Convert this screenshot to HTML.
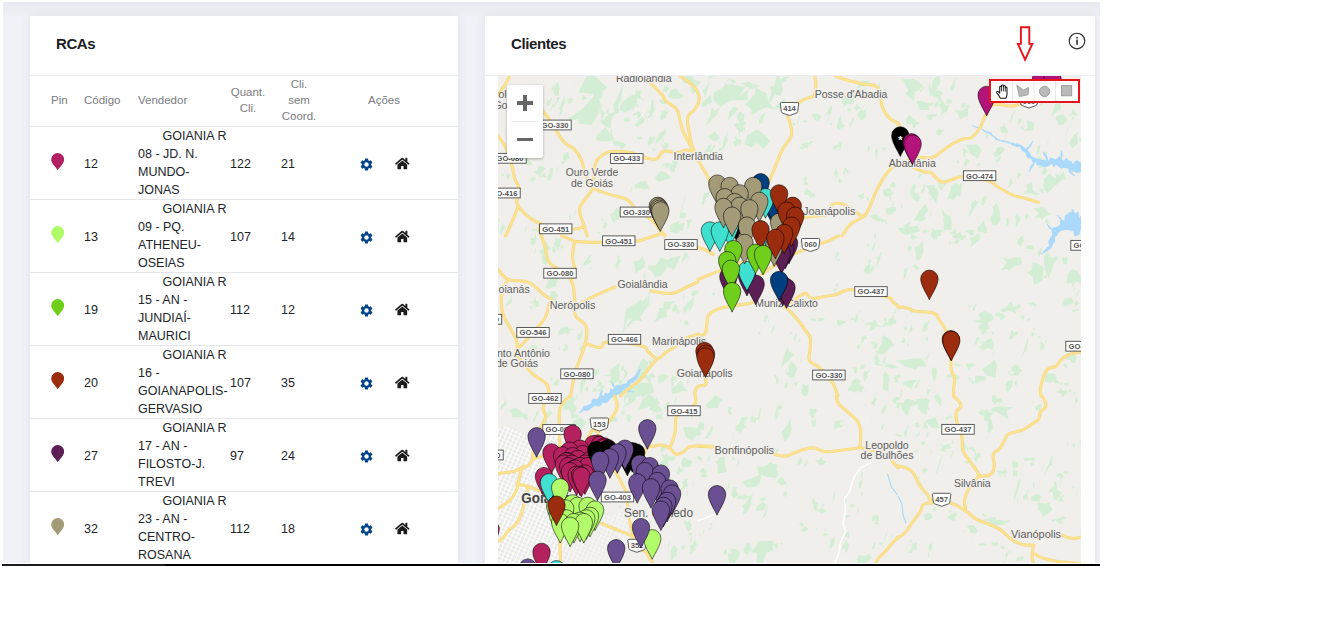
<!DOCTYPE html>
<html lang="pt-BR"><head><meta charset="utf-8"><title>RCAs - Clientes</title>
<style>
html,body{margin:0;padding:0;background:#fff;}
body{width:1340px;height:627px;overflow:hidden;position:relative;font-family:"Liberation Sans",Arial,sans-serif;color:#212529;}
#shot{position:absolute;left:3px;top:2px;width:1097px;height:563px;background:#f1f2f8;overflow:hidden;}
#topshade{position:absolute;left:0;top:0;width:100%;height:14px;background:linear-gradient(#e8e9ee,#eff0f6);}
#bline{position:absolute;left:165px;top:563.700px;width:935px;height:2.300px;background:#000;}
#bline2{position:absolute;left:2px;top:563.950px;width:163px;height:1.900px;background:#1c1c1c;}
#bwhite{position:absolute;left:0;top:563px;width:1340px;height:64px;background:#fff;}
.card{position:absolute;background:#fff;box-shadow:0 0 10px rgba(82,63,105,.09);}
#left{left:27px;top:14px;width:428px;height:600px;}
#right{left:482px;top:14px;width:610px;height:600px;}
.title{position:absolute;left:26px;top:18px;font-weight:bold;font-size:15px;line-height:20px;color:#1d1d1f;letter-spacing:-.4px;}
.hline{position:absolute;left:0;top:59px;width:100%;height:1px;background:#ebedf2;}
.thead{position:absolute;left:0;top:60px;width:100%;height:50px;border-bottom:1px solid #e4e6ea;}
.h{position:absolute;font-size:11.500px;line-height:16px;color:#7a7b80;white-space:nowrap;}
.h.ctr{text-align:center;}
.row{position:absolute;left:0;width:100%;height:72px;border-bottom:1px solid #e4e6ea;font-size:12.500px;line-height:18px;}
.row .c{position:absolute;top:27.500px;white-space:nowrap;}
.row .code{left:54px;}
.row .q{left:200px;}
.row .cs{left:251px;}
.row .vend{position:absolute;left:108px;top:0;white-space:nowrap;}
.row .ind{display:inline-block;width:24.500px;}
.tpin{position:absolute;left:20.700px;top:25.600px;width:13.400px;height:17.400px;}
.gear{position:absolute;left:329px;top:29.600px;width:15px;height:15px;}
.home{position:absolute;left:365px;top:29.800px;width:14.600px;height:13px;}
#arrow{position:absolute;left:530px;top:9px;}
#info{position:absolute;left:582px;top:14.800px;}
#map{position:absolute;left:13px;top:60px;width:583px;height:489px;overflow:hidden;background:#f0efeb;}
#mapsvg{position:absolute;left:0;top:0;}
#zoomctl{position:absolute;left:9px;top:9px;width:36px;height:73px;background:#fff;border-radius:2px;box-shadow:0 1px 3px rgba(0,0,0,.3);}
#zoomctl .zp{position:absolute;left:10px;top:16.200px;width:16px;height:3.600px;background:#666;}
#zoomctl .zp2{position:absolute;left:16.200px;top:10px;width:3.600px;height:16px;background:#666;}
#zoomctl .zd{position:absolute;left:5px;top:36px;width:26px;height:1px;background:#e6e6e6;}
#zoomctl .zm{position:absolute;left:10px;top:52.700px;width:16px;height:3.600px;background:#666;}
#draw{position:absolute;left:491px;top:3px;width:91px;height:24px;box-sizing:border-box;border:2px solid #e8141c;background:#fff;}
#rd path{vector-effect:non-scaling-stroke;}

</style></head>
<body>
<div id="shot">
<div id="topshade"></div>
<div class="card" id="left">
<div class="title">RCAs</div>
<div class="hline"></div>
<div class="thead">
<span class="h" style="left:21px;top:16px">Pin</span>
<span class="h" style="left:54px;top:16px">Código</span>
<span class="h" style="left:108px;top:16px">Vendedor</span>
<span class="h ctr" style="left:192px;width:52px;top:8px">Quant.<br>Cli.</span>
<span class="h ctr" style="left:243px;width:52px;top:0px">Cli.<br>sem<br>Coord.</span>
<span class="h ctr" style="left:328px;width:52px;top:16px">Ações</span>
</div>
<div class="row" style="top:111px">
<svg class="tpin" viewBox="-6.700 -17.400 13.400 17.400"><path d="M0,0C-1.500,-3 -6.500,-6.800 -6.500,-10.800A6.500,6.500 0 1 1 6.500,-10.800C6.500,-6.800 1.500,-3 0,0Z" fill="#b12060"/></svg>
<span class="c code">12</span><span class="vend"><span class="ind"></span>GOIANIA R<br>08 - JD. N.<br>MUNDO-<br>JONAS</span><span class="c q">122</span><span class="c cs">21</span><svg class="gear" viewBox="0 0 24 24"><path fill="#05468a" d="M19.14 12.94c.04-.3.06-.61.06-.94 0-.32-.02-.64-.07-.94l2.03-1.58a.49.49 0 0 0 .12-.61l-1.92-3.32a.488.488 0 0 0-.59-.22l-2.39.96c-.5-.38-1.03-.7-1.62-.94l-.36-2.54a.484.484 0 0 0-.48-.41h-3.84c-.24 0-.43.17-.47.41l-.36 2.54c-.59.24-1.13.57-1.62.94l-2.39-.96c-.22-.08-.47 0-.59.22L2.74 8.87c-.12.21-.08.47.12.61l2.03 1.58c-.05.3-.09.63-.09.94s.02.64.07.94l-2.03 1.58a.49.49 0 0 0-.12.61l1.92 3.32c.12.22.37.29.59.22l2.39-.96c.5.38 1.03.7 1.62.94l.36 2.54c.05.24.24.41.48.41h3.84c.24 0 .44-.17.47-.41l.36-2.54c.59-.24 1.13-.56 1.62-.94l2.39.96c.22.08.47 0 .59-.22l1.92-3.32c.12-.22.07-.47-.12-.61l-2.01-1.58zM12 15.6c-1.98 0-3.600-1.62-3.600-3.600s1.62-3.600 3.600-3.600 3.600 1.62 3.600 3.600-1.62 3.600-3.600 3.600z"/></svg><svg class="home" viewBox="0 0 576 512"><path fill="#1c1c1c" d="M280.37 148.26L96 300.11V464a16 16 0 0 0 16 16l112.060-.29a16 16 0 0 0 15.920-16V368a16 16 0 0 1 16-16h64a16 16 0 0 1 16 16v95.640a16 16 0 0 0 16 16.050L464 480a16 16 0 0 0 16-16V300L295.670 148.260a12.190 12.190 0 0 0-15.300 0zM571.600 251.470L488 182.560V44.050a12 12 0 0 0-12-12h-56a12 12 0 0 0-12 12v72.610L318.470 43a48 48 0 0 0-61 0L4.340 251.470a12 12 0 0 0-1.600 16.900l25.500 31A12 12 0 0 0 45.150 301l235.220-193.740a12.190 12.190 0 0 1 15.300 0L530.900 301a12 12 0 0 0 16.900-1.600l25.500-31a12 12 0 0 0-1.700-16.930z"/></svg>
</div>
<div class="row" style="top:184px">
<svg class="tpin" viewBox="-6.700 -17.400 13.400 17.400"><path d="M0,0C-1.500,-3 -6.500,-6.800 -6.500,-10.800A6.500,6.500 0 1 1 6.500,-10.800C6.500,-6.800 1.500,-3 0,0Z" fill="#b0fb6a"/></svg>
<span class="c code">13</span><span class="vend"><span class="ind"></span>GOIANIA R<br>09 - PQ.<br>ATHENEU-<br>OSEIAS</span><span class="c q">107</span><span class="c cs">14</span><svg class="gear" viewBox="0 0 24 24"><path fill="#05468a" d="M19.14 12.94c.04-.3.06-.61.06-.94 0-.32-.02-.64-.07-.94l2.03-1.58a.49.49 0 0 0 .12-.61l-1.92-3.32a.488.488 0 0 0-.59-.22l-2.39.96c-.5-.38-1.03-.7-1.62-.94l-.36-2.54a.484.484 0 0 0-.48-.41h-3.84c-.24 0-.43.17-.47.41l-.36 2.54c-.59.24-1.13.57-1.62.94l-2.39-.96c-.22-.08-.47 0-.59.22L2.74 8.87c-.12.21-.08.47.12.61l2.03 1.58c-.05.3-.09.63-.09.94s.02.64.07.94l-2.03 1.58a.49.49 0 0 0-.12.61l1.92 3.32c.12.22.37.29.59.22l2.39-.96c.5.38 1.03.7 1.62.94l.36 2.54c.05.24.24.41.48.41h3.84c.24 0 .44-.17.47-.41l.36-2.54c.59-.24 1.13-.56 1.62-.94l2.39.96c.22.08.47 0 .59-.22l1.92-3.32c.12-.22.07-.47-.12-.61l-2.01-1.58zM12 15.6c-1.98 0-3.600-1.62-3.600-3.600s1.62-3.600 3.600-3.600 3.600 1.62 3.600 3.600-1.62 3.600-3.600 3.600z"/></svg><svg class="home" viewBox="0 0 576 512"><path fill="#1c1c1c" d="M280.37 148.26L96 300.11V464a16 16 0 0 0 16 16l112.060-.29a16 16 0 0 0 15.920-16V368a16 16 0 0 1 16-16h64a16 16 0 0 1 16 16v95.640a16 16 0 0 0 16 16.050L464 480a16 16 0 0 0 16-16V300L295.670 148.260a12.190 12.190 0 0 0-15.300 0zM571.600 251.470L488 182.560V44.050a12 12 0 0 0-12-12h-56a12 12 0 0 0-12 12v72.610L318.470 43a48 48 0 0 0-61 0L4.340 251.470a12 12 0 0 0-1.600 16.900l25.500 31A12 12 0 0 0 45.150 301l235.220-193.740a12.190 12.190 0 0 1 15.300 0L530.900 301a12 12 0 0 0 16.900-1.600l25.500-31a12 12 0 0 0-1.700-16.930z"/></svg>
</div>
<div class="row" style="top:257px">
<svg class="tpin" viewBox="-6.700 -17.400 13.400 17.400"><path d="M0,0C-1.500,-3 -6.500,-6.800 -6.500,-10.800A6.500,6.500 0 1 1 6.500,-10.800C6.500,-6.800 1.500,-3 0,0Z" fill="#6fcf1a"/></svg>
<span class="c code">19</span><span class="vend"><span class="ind"></span>GOIANIA R<br>15 - AN -<br>JUNDIAÍ-<br>MAURICI</span><span class="c q">112</span><span class="c cs">12</span><svg class="gear" viewBox="0 0 24 24"><path fill="#05468a" d="M19.14 12.94c.04-.3.06-.61.06-.94 0-.32-.02-.64-.07-.94l2.03-1.58a.49.49 0 0 0 .12-.61l-1.92-3.32a.488.488 0 0 0-.59-.22l-2.39.96c-.5-.38-1.03-.7-1.62-.94l-.36-2.54a.484.484 0 0 0-.48-.41h-3.84c-.24 0-.43.17-.47.41l-.36 2.54c-.59.24-1.13.57-1.62.94l-2.39-.96c-.22-.08-.47 0-.59.22L2.74 8.87c-.12.21-.08.47.12.61l2.03 1.58c-.05.3-.09.63-.09.94s.02.64.07.94l-2.03 1.58a.49.49 0 0 0-.12.61l1.92 3.32c.12.22.37.29.59.22l2.39-.96c.5.38 1.03.7 1.62.94l.36 2.54c.05.24.24.41.48.41h3.84c.24 0 .44-.17.47-.41l.36-2.54c.59-.24 1.13-.56 1.62-.94l2.39.96c.22.08.47 0 .59-.22l1.92-3.32c.12-.22.07-.47-.12-.61l-2.01-1.58zM12 15.6c-1.98 0-3.600-1.62-3.600-3.600s1.62-3.600 3.600-3.600 3.600 1.62 3.600 3.600-1.62 3.600-3.600 3.600z"/></svg><svg class="home" viewBox="0 0 576 512"><path fill="#1c1c1c" d="M280.37 148.26L96 300.11V464a16 16 0 0 0 16 16l112.060-.29a16 16 0 0 0 15.920-16V368a16 16 0 0 1 16-16h64a16 16 0 0 1 16 16v95.640a16 16 0 0 0 16 16.050L464 480a16 16 0 0 0 16-16V300L295.670 148.260a12.190 12.190 0 0 0-15.300 0zM571.600 251.470L488 182.560V44.050a12 12 0 0 0-12-12h-56a12 12 0 0 0-12 12v72.610L318.470 43a48 48 0 0 0-61 0L4.340 251.470a12 12 0 0 0-1.600 16.900l25.500 31A12 12 0 0 0 45.150 301l235.220-193.740a12.190 12.190 0 0 1 15.300 0L530.900 301a12 12 0 0 0 16.900-1.600l25.500-31a12 12 0 0 0-1.700-16.930z"/></svg>
</div>
<div class="row" style="top:330px">
<svg class="tpin" viewBox="-6.700 -17.400 13.400 17.400"><path d="M0,0C-1.500,-3 -6.500,-6.800 -6.500,-10.800A6.500,6.500 0 1 1 6.500,-10.800C6.500,-6.800 1.500,-3 0,0Z" fill="#9c2c0e"/></svg>
<span class="c code">20</span><span class="vend"><span class="ind"></span>GOIANIA R<br>16 -<br>GOIANAPOLIS-<br>GERVASIO</span><span class="c q">107</span><span class="c cs">35</span><svg class="gear" viewBox="0 0 24 24"><path fill="#05468a" d="M19.14 12.94c.04-.3.06-.61.06-.94 0-.32-.02-.64-.07-.94l2.03-1.58a.49.49 0 0 0 .12-.61l-1.92-3.32a.488.488 0 0 0-.59-.22l-2.39.96c-.5-.38-1.03-.7-1.62-.94l-.36-2.54a.484.484 0 0 0-.48-.41h-3.84c-.24 0-.43.17-.47.41l-.36 2.54c-.59.24-1.13.57-1.62.94l-2.39-.96c-.22-.08-.47 0-.59.22L2.74 8.87c-.12.21-.08.47.12.61l2.03 1.58c-.05.3-.09.63-.09.94s.02.64.07.94l-2.03 1.58a.49.49 0 0 0-.12.61l1.92 3.32c.12.22.37.29.59.22l2.39-.96c.5.38 1.03.7 1.62.94l.36 2.54c.05.24.24.41.48.41h3.84c.24 0 .44-.17.47-.41l.36-2.54c.59-.24 1.13-.56 1.62-.94l2.39.96c.22.08.47 0 .59-.22l1.92-3.32c.12-.22.07-.47-.12-.61l-2.01-1.58zM12 15.6c-1.98 0-3.600-1.62-3.600-3.600s1.62-3.600 3.600-3.600 3.600 1.62 3.600 3.600-1.62 3.600-3.600 3.600z"/></svg><svg class="home" viewBox="0 0 576 512"><path fill="#1c1c1c" d="M280.37 148.26L96 300.11V464a16 16 0 0 0 16 16l112.060-.29a16 16 0 0 0 15.920-16V368a16 16 0 0 1 16-16h64a16 16 0 0 1 16 16v95.640a16 16 0 0 0 16 16.050L464 480a16 16 0 0 0 16-16V300L295.670 148.260a12.190 12.190 0 0 0-15.300 0zM571.600 251.470L488 182.560V44.050a12 12 0 0 0-12-12h-56a12 12 0 0 0-12 12v72.610L318.470 43a48 48 0 0 0-61 0L4.340 251.470a12 12 0 0 0-1.600 16.900l25.500 31A12 12 0 0 0 45.150 301l235.220-193.740a12.190 12.190 0 0 1 15.300 0L530.900 301a12 12 0 0 0 16.900-1.600l25.500-31a12 12 0 0 0-1.700-16.930z"/></svg>
</div>
<div class="row" style="top:403px">
<svg class="tpin" viewBox="-6.700 -17.400 13.400 17.400"><path d="M0,0C-1.500,-3 -6.500,-6.800 -6.500,-10.800A6.500,6.500 0 1 1 6.500,-10.800C6.500,-6.800 1.500,-3 0,0Z" fill="#5c1f55"/></svg>
<span class="c code">27</span><span class="vend"><span class="ind"></span>GOIANIA R<br>17 - AN -<br>FILOSTO-J.<br>TREVI</span><span class="c q">97</span><span class="c cs">24</span><svg class="gear" viewBox="0 0 24 24"><path fill="#05468a" d="M19.14 12.94c.04-.3.06-.61.06-.94 0-.32-.02-.64-.07-.94l2.03-1.58a.49.49 0 0 0 .12-.61l-1.92-3.32a.488.488 0 0 0-.59-.22l-2.39.96c-.5-.38-1.03-.7-1.62-.94l-.36-2.54a.484.484 0 0 0-.48-.41h-3.84c-.24 0-.43.17-.47.41l-.36 2.54c-.59.24-1.13.57-1.62.94l-2.39-.96c-.22-.08-.47 0-.59.22L2.74 8.87c-.12.21-.08.47.12.61l2.03 1.58c-.05.3-.09.63-.09.94s.02.64.07.94l-2.03 1.58a.49.49 0 0 0-.12.61l1.92 3.32c.12.22.37.29.59.22l2.39-.96c.5.38 1.03.7 1.62.94l.36 2.54c.05.24.24.41.48.41h3.84c.24 0 .44-.17.47-.41l.36-2.54c.59-.24 1.13-.56 1.62-.94l2.39.96c.22.08.47 0 .59-.22l1.92-3.32c.12-.22.07-.47-.12-.61l-2.01-1.58zM12 15.6c-1.98 0-3.600-1.62-3.600-3.600s1.62-3.600 3.600-3.600 3.600 1.62 3.600 3.600-1.62 3.600-3.600 3.600z"/></svg><svg class="home" viewBox="0 0 576 512"><path fill="#1c1c1c" d="M280.37 148.26L96 300.11V464a16 16 0 0 0 16 16l112.060-.29a16 16 0 0 0 15.920-16V368a16 16 0 0 1 16-16h64a16 16 0 0 1 16 16v95.640a16 16 0 0 0 16 16.050L464 480a16 16 0 0 0 16-16V300L295.670 148.260a12.190 12.190 0 0 0-15.300 0zM571.600 251.470L488 182.560V44.050a12 12 0 0 0-12-12h-56a12 12 0 0 0-12 12v72.610L318.470 43a48 48 0 0 0-61 0L4.340 251.470a12 12 0 0 0-1.600 16.900l25.500 31A12 12 0 0 0 45.150 301l235.220-193.740a12.190 12.190 0 0 1 15.300 0L530.900 301a12 12 0 0 0 16.900-1.600l25.500-31a12 12 0 0 0-1.700-16.930z"/></svg>
</div>
<div class="row" style="top:476px">
<svg class="tpin" viewBox="-6.700 -17.400 13.400 17.400"><path d="M0,0C-1.500,-3 -6.500,-6.800 -6.500,-10.800A6.500,6.500 0 1 1 6.500,-10.800C6.500,-6.800 1.500,-3 0,0Z" fill="#a39a78"/></svg>
<span class="c code">32</span><span class="vend"><span class="ind"></span>GOIANIA R<br>23 - AN -<br>CENTRO-<br>ROSANA</span><span class="c q">112</span><span class="c cs">18</span><svg class="gear" viewBox="0 0 24 24"><path fill="#05468a" d="M19.14 12.94c.04-.3.06-.61.06-.94 0-.32-.02-.64-.07-.94l2.03-1.58a.49.49 0 0 0 .12-.61l-1.92-3.32a.488.488 0 0 0-.59-.22l-2.39.96c-.5-.38-1.03-.7-1.62-.94l-.36-2.54a.484.484 0 0 0-.48-.41h-3.84c-.24 0-.43.17-.47.41l-.36 2.54c-.59.24-1.13.57-1.62.94l-2.39-.96c-.22-.08-.47 0-.59.22L2.74 8.87c-.12.21-.08.47.12.61l2.03 1.58c-.05.3-.09.63-.09.94s.02.64.07.94l-2.03 1.58a.49.49 0 0 0-.12.61l1.92 3.32c.12.22.37.29.59.22l2.39-.96c.5.38 1.03.7 1.62.94l.36 2.54c.05.24.24.41.48.41h3.84c.24 0 .44-.17.47-.41l.36-2.54c.59-.24 1.13-.56 1.62-.94l2.39.96c.22.08.47 0 .59-.22l1.92-3.32c.12-.22.07-.47-.12-.61l-2.01-1.58zM12 15.6c-1.98 0-3.600-1.62-3.600-3.600s1.62-3.600 3.600-3.600 3.600 1.62 3.600 3.600-1.62 3.600-3.600 3.600z"/></svg><svg class="home" viewBox="0 0 576 512"><path fill="#1c1c1c" d="M280.37 148.26L96 300.11V464a16 16 0 0 0 16 16l112.060-.29a16 16 0 0 0 15.920-16V368a16 16 0 0 1 16-16h64a16 16 0 0 1 16 16v95.640a16 16 0 0 0 16 16.050L464 480a16 16 0 0 0 16-16V300L295.670 148.260a12.190 12.190 0 0 0-15.300 0zM571.600 251.470L488 182.560V44.050a12 12 0 0 0-12-12h-56a12 12 0 0 0-12 12v72.610L318.470 43a48 48 0 0 0-61 0L4.340 251.470a12 12 0 0 0-1.600 16.900l25.500 31A12 12 0 0 0 45.150 301l235.220-193.740a12.190 12.190 0 0 1 15.300 0L530.900 301a12 12 0 0 0 16.900-1.600l25.500-31a12 12 0 0 0-1.700-16.930z"/></svg>
</div>
</div>
<div class="card" id="right">
<div class="title">Clientes</div>
<svg id="arrow" viewBox="0 0 22 40" width="22" height="40"><path d="M5.900,2.200H14.300V18.900H17.300L10.100,34.600L2.900,18.900H5.900Z" fill="#fff" stroke="#e8141c" stroke-width="1.900" stroke-linejoin="miter"/></svg>
<svg id="info" viewBox="0 0 20 20" width="20" height="20"><circle cx="10" cy="10" r="7.800" fill="#fff" stroke="#2a2a2a" stroke-width="1.150"/><rect x="9.300" y="8.600" width="1.500" height="5.200" fill="#222"/><rect x="9.300" y="5.900" width="1.500" height="1.600" fill="#222"/></svg>
<div class="hline"></div>
<div id="map">
<svg id="mapsvg" width="583" height="489" viewBox="498 76 583 489">
<defs>
<path id="pin" d="M0,0C-2.4,-5.6 -8.7,-14.2 -8.7,-21A8.7,8.7 0 1 1 8.7,-21C8.7,-14.2 2.4,-5.6 0,0Z" stroke="#000" stroke-opacity=".62" stroke-width=".9"/>
<g id="rd">
<!-- tile 0,0 -->
<g transform="translate(498,76) scale(.2551)">
<path d="M45.0,0.0C41.7,6.6 38.1,16.4 30.0,30.0C21.9,43.6 14.6,52.1 8.0,62.0C1.4,71.9 1.8,72.1 0.0,75.0"/>
<path d="M175.0,135.0C180.5,142.7 186.8,150.2 200.0,170.0C213.2,189.8 221.4,204.8 235.0,225.0C248.6,245.2 247.7,248.1 262.0,262.0C276.3,275.9 286.1,274.1 300.0,288.0C313.9,301.9 315.1,302.6 325.0,325.0C334.9,347.4 334.7,364.7 345.0,390.0C355.3,415.3 366.1,429.0 372.0,440.0"/>
<path d="M372.0,440.0C373.3,426.8 375.1,403.1 378.0,380.0C380.9,356.9 375.8,351.9 385.0,335.0C394.2,318.1 403.5,311.8 420.0,303.0C436.5,294.2 438.0,295.7 460.0,295.0C482.0,294.3 495.8,294.9 520.0,300.0C544.2,305.1 548.0,312.5 570.0,318.0C592.0,323.5 602.4,330.1 620.0,325.0C637.6,319.9 632.4,300.5 650.0,295.0C667.6,289.5 680.2,301.1 700.0,300.0C719.8,298.9 724.6,290.0 740.0,290.0C755.4,290.0 760.3,295.2 770.0,300.0C779.7,304.8 780.9,309.4 784.0,312.0"/>
<path d="M372.0,440.0C384.8,444.8 401.8,452.8 430.0,462.0C458.2,471.2 478.0,471.4 500.0,482.0C522.0,492.6 516.8,497.2 530.0,510.0C543.2,522.8 544.6,528.6 560.0,540.0C575.4,551.4 582.4,546.6 600.0,562.0C617.6,577.4 627.9,595.7 640.0,610.0C652.1,624.3 651.7,623.3 655.0,627.0"/>
<path d="M372.0,440.0C366.1,448.8 356.4,462.4 345.0,480.0C333.6,497.6 322.2,498.0 320.0,520.0C317.8,542.0 328.4,556.5 335.0,580.0C341.6,603.5 346.7,616.7 350.0,627.0"/>
<path d="M600.0,30.0C608.8,38.8 626.8,54.6 640.0,70.0C653.2,85.4 646.8,86.8 660.0,100.0C673.2,113.2 687.9,112.4 700.0,130.0C712.1,147.6 709.5,161.3 715.0,180.0C720.5,198.7 718.4,198.5 725.0,215.0C731.6,231.5 735.1,236.3 745.0,255.0C754.9,273.7 764.5,290.1 770.0,300.0"/>
<path d="M713.0,0.0C723.3,7.5 743.3,15.5 760.0,34.0C776.7,52.5 786.4,63.1 789.0,84.0C791.6,104.9 781.9,111.6 772.0,129.0C762.1,146.4 748.8,141.9 744.0,163.0C739.2,184.1 746.5,201.5 750.0,225.0C753.5,248.5 755.2,253.5 760.0,270.0C764.8,286.5 769.4,293.4 772.0,300.0"/>
<path d="M0.0,235.0C6.6,244.9 19.0,259.1 30.0,280.0C41.0,300.9 42.3,303.6 50.0,330.0C57.7,356.4 58.0,375.8 65.0,400.0C72.0,424.2 79.8,422.4 82.0,440.0C84.2,457.6 75.4,464.6 75.0,480.0C74.6,495.4 67.9,492.4 80.0,510.0C92.1,527.6 103.6,542.4 130.0,560.0C156.4,577.6 171.4,581.2 200.0,590.0C228.6,598.8 238.0,597.8 260.0,600.0C282.0,602.2 282.4,602.2 300.0,600.0C317.6,597.8 331.2,592.2 340.0,590.0"/>
<path d="M80.0,510.0C75.6,521.0 71.0,534.3 60.0,560.0C49.0,585.7 36.6,612.3 30.0,627.0"/>
</g>
<!-- tile 1,0 -->
<g transform="translate(698,76) scale(.2551)">
<path d="M50.0,420.0C45.6,411.2 41.0,399.8 30.0,380.0C19.0,360.2 6.6,341.0 0.0,330.0"/>
<path d="M280.0,410.0C285.5,396.8 294.0,376.4 305.0,350.0C316.0,323.6 316.8,315.3 330.0,290.0C343.2,264.7 358.0,257.0 365.0,235.0C372.0,213.0 364.9,206.5 362.0,190.0C359.1,173.5 354.2,166.6 352.0,160.0M395.0,105.0C400.5,101.7 406.8,96.6 420.0,90.0C433.2,83.4 445.8,86.0 455.0,75.0C464.2,64.0 461.3,56.5 462.0,40.0C462.7,23.5 458.9,8.8 458.0,0.0"/>
<path d="M540.0,0.0C548.8,3.3 558.0,8.4 580.0,15.0C602.0,21.6 613.6,24.1 640.0,30.0C666.4,35.9 683.5,31.0 700.0,42.0C716.5,53.0 710.2,62.8 715.0,80.0C719.8,97.2 715.4,102.4 722.0,120.0C728.6,137.6 731.4,145.7 745.0,160.0C758.6,174.3 775.4,179.5 784.0,185.0"/>
<path d="M784.0,340.0C775.4,347.7 760.2,357.4 745.0,375.0C729.8,392.6 726.0,401.3 715.0,420.0C704.0,438.7 704.9,438.0 695.0,460.0C685.1,482.0 679.9,500.2 670.0,520.0C660.1,539.8 665.4,536.8 650.0,550.0C634.6,563.2 618.7,563.1 600.0,580.0C581.3,596.9 572.7,616.7 565.0,627.0"/>
<path d="M410.0,555.0C423.2,553.5 449.1,551.3 470.0,548.0C490.9,544.7 492.9,549.5 505.0,540.0C517.1,530.5 512.9,513.8 525.0,505.0C537.1,496.2 545.7,497.8 560.0,500.0C574.3,502.2 572.4,504.4 590.0,515.0C607.6,525.6 629.0,540.7 640.0,548.0"/>
</g>
<!-- tile 2,0 -->
<g transform="translate(898,76) scale(.2551)">
<path d="M0.0,185.0C4.4,194.9 11.2,204.7 20.0,230.0C28.8,255.3 31.2,273.6 40.0,300.0C48.8,326.4 55.6,339.0 60.0,350.0"/>
<path d="M55.0,315.0C71.5,316.1 105.8,323.3 130.0,320.0C154.2,316.7 149.6,309.9 165.0,300.0C180.4,290.1 182.4,286.0 200.0,275.0C217.6,264.0 225.2,257.7 245.0,250.0C264.8,242.3 273.5,249.9 290.0,240.0C306.5,230.1 310.1,220.4 320.0,205.0C329.9,189.6 329.5,182.1 335.0,170.0C340.5,157.9 336.2,162.8 345.0,150.0C353.8,137.2 354.1,119.0 375.0,112.0C395.9,105.0 416.9,118.4 440.0,118.0C463.1,117.6 471.2,111.8 480.0,110.0"/>
<path d="M40.0,350.0C53.2,355.5 80.2,368.4 100.0,375.0C119.8,381.6 114.6,371.2 130.0,380.0C145.4,388.8 151.3,409.5 170.0,415.0C188.7,420.5 196.3,409.4 215.0,405.0C233.7,400.6 225.3,393.9 255.0,395.0C284.7,396.1 318.1,400.1 350.0,410.0C381.9,419.9 378.0,427.5 400.0,440.0C422.0,452.5 428.0,458.2 450.0,467.0C472.0,475.8 478.0,473.8 500.0,480.0C522.0,486.2 539.0,491.7 550.0,495.0"/>
<path d="M45.0,330.0 0.0,345.0"/>
</g>
<!-- tile 0,1 -->
<g transform="translate(498,236) scale(.2551)">
<path d="M160.0,-30.0C165.5,-13.5 176.6,16.4 185.0,45.0C193.4,73.6 187.0,81.3 198.0,100.0C209.0,118.7 215.9,114.6 235.0,130.0C254.1,145.4 270.7,145.8 285.0,170.0C299.3,194.2 296.0,209.2 300.0,240.0C304.0,270.8 293.1,284.7 303.0,310.0C312.9,335.3 336.4,330.8 345.0,355.0C353.6,379.2 347.1,392.5 342.0,420.0C336.9,447.5 331.2,452.5 322.0,480.0C312.8,507.5 308.1,512.7 300.0,545.0C291.9,577.3 288.3,609.0 285.0,627.0"/>
<path d="M250.0,0.0C256.6,2.6 266.8,7.2 280.0,12.0C293.2,16.8 281.4,19.1 310.0,22.0C338.6,24.9 359.4,25.4 410.0,25.0C460.6,24.6 502.6,23.3 540.0,20.0C577.4,16.7 558.0,16.6 580.0,10.0C602.0,3.4 626.8,-5.6 640.0,-10.0"/>
<path d="M300.0,22.0C298.2,34.8 292.0,56.2 292.0,80.0C292.0,103.8 300.4,110.2 300.0,130.0C299.6,149.8 292.2,161.2 290.0,170.0"/>
<path d="M0.0,130.0C8.8,138.8 13.6,158.6 40.0,170.0C66.4,181.4 89.2,168.8 120.0,182.0C150.8,195.2 160.2,215.0 180.0,230.0C199.8,245.0 203.4,245.6 210.0,250.0"/>
<path d="M40.0,170.0C34.5,181.0 19.8,191.4 15.0,220.0C10.2,248.6 10.3,268.1 18.0,300.0C25.7,331.9 37.5,338.6 50.0,365.0C62.5,391.4 71.7,396.9 75.0,420.0C78.3,443.1 67.2,459.0 65.0,470.0"/>
<path d="M200.0,265.0C196.7,277.1 198.2,295.8 185.0,320.0C171.8,344.2 159.8,351.9 140.0,375.0C120.2,398.1 110.0,407.4 95.0,425.0C80.0,442.6 70.9,438.5 72.0,455.0C73.1,471.5 85.0,480.2 100.0,500.0C115.0,519.8 120.2,527.4 140.0,545.0C159.8,562.6 176.8,562.0 190.0,580.0C203.2,598.0 197.8,616.7 200.0,627.0"/>
<path d="M305.0,275.0C314.9,269.5 329.1,261.0 350.0,250.0C370.9,239.0 375.8,236.0 400.0,225.0C424.2,214.0 446.8,205.5 460.0,200.0M600.0,215.0C617.6,217.2 649.2,228.3 680.0,225.0C710.8,221.7 717.1,209.9 740.0,200.0C762.9,190.1 774.3,184.4 784.0,180.0"/>
<path d="M342.0,420.0C354.8,423.7 380.2,438.1 400.0,437.0C419.8,435.9 396.8,416.5 432.0,415.0C467.2,413.5 525.2,421.2 560.0,430.0C594.8,438.8 575.7,444.0 590.0,455.0C604.3,466.0 609.6,480.0 625.0,480.0C640.4,480.0 643.5,466.0 660.0,455.0C676.5,444.0 682.4,442.1 700.0,430.0C717.6,417.9 721.5,409.9 740.0,400.0C758.5,390.1 774.3,388.3 784.0,385.0"/>
<path d="M625.0,480.0C617.3,488.8 605.4,501.3 590.0,520.0C574.6,538.7 572.6,547.4 555.0,565.0C537.4,582.6 526.5,586.4 510.0,600.0C493.5,613.6 486.6,621.1 480.0,627.0"/>
</g>
<!-- tile 1,1 -->
<g transform="translate(698,236) scale(.2551)">
<path d="M250.0,150.0C261.0,142.3 280.2,128.2 300.0,115.0C319.8,101.8 318.0,102.1 340.0,90.0C362.0,77.9 369.6,73.2 400.0,60.0C430.4,46.8 453.8,38.8 478.0,30.0C502.2,21.2 494.2,26.6 510.0,20.0C525.8,13.4 541.2,4.4 550.0,0.0"/>
<path d="M345.0,280.0C352.7,273.4 363.5,262.1 380.0,250.0C396.5,237.9 405.7,226.1 420.0,225.0C434.3,223.9 429.6,242.1 445.0,245.0C460.4,247.9 469.1,241.3 490.0,238.0C510.9,234.7 521.3,235.1 540.0,230.0C558.7,224.9 558.5,219.0 575.0,215.0C591.5,211.0 578.3,206.5 615.0,212.0C651.7,217.5 710.1,230.5 742.0,240.0C773.9,249.5 750.8,247.3 760.0,255.0C769.2,262.7 778.7,270.6 784.0,275.0"/>
<path d="M345.0,280.0C351.6,286.6 362.9,296.8 375.0,310.0C387.1,323.2 389.0,325.7 400.0,340.0C411.0,354.3 416.2,361.8 425.0,375.0C433.8,388.2 436.7,385.7 440.0,400.0C443.3,414.3 441.1,422.4 440.0,440.0C438.9,457.6 432.8,466.8 435.0,480.0C437.2,493.2 441.2,492.3 450.0,500.0C458.8,507.7 459.6,500.7 475.0,515.0C490.4,529.3 506.8,548.5 520.0,565.0C533.2,581.5 528.8,576.4 535.0,590.0C541.2,603.6 545.1,618.9 548.0,627.0"/>
<path d="M0.0,170.0C11.0,165.6 28.0,158.8 50.0,150.0C72.0,141.2 71.4,141.0 100.0,130.0C128.6,119.0 162.4,106.6 180.0,100.0M0.0,45.0C6.6,47.2 16.8,49.1 30.0,55.0C43.2,60.9 53.4,68.3 60.0,72.0"/>
<path d="M0.0,390.0C6.2,388.2 20.3,393.0 28.0,382.0C35.7,371.0 31.9,355.8 35.0,340.0C38.1,324.2 34.3,321.0 42.0,310.0C49.7,299.0 57.2,296.6 70.0,290.0C82.8,283.4 82.4,284.0 100.0,280.0C117.6,276.0 128.0,275.3 150.0,272.0C172.0,268.7 182.4,267.6 200.0,265.0C217.6,262.4 198.1,256.7 230.0,260.0C261.9,263.3 319.7,275.6 345.0,280.0"/>
</g>
<!-- tile 2,1 -->
<g transform="translate(898,236) scale(.2551)">
<path d="M0.0,278.0C8.8,279.1 24.6,279.3 40.0,283.0C55.4,286.7 48.0,290.6 70.0,295.0C92.0,299.4 119.1,294.2 140.0,303.0C160.9,311.8 155.1,321.4 165.0,335.0C174.9,348.6 175.5,344.1 185.0,365.0C194.5,385.9 202.9,395.9 208.0,430.0C213.1,464.1 204.9,492.5 208.0,520.0C211.1,547.5 219.8,537.4 222.0,555.0C224.2,572.6 218.9,584.2 218.0,600.0C217.1,615.8 218.0,621.1 218.0,627.0"/>
<path d="M716.0,455.0C710.3,456.1 702.3,456.7 690.0,460.0C677.7,463.3 672.1,463.4 660.0,470.0C647.9,476.6 643.8,481.2 635.0,490.0C626.2,498.8 629.9,503.4 620.0,510.0C610.1,516.6 599.9,513.4 590.0,520.0C580.1,526.6 580.5,529.0 575.0,540.0C569.5,551.0 568.7,556.8 565.0,570.0C561.3,583.2 559.1,587.5 558.0,600.0C556.9,612.5 559.6,621.1 560.0,627.0"/>
</g>
<!-- tile 1,2 -->
<g transform="translate(698,396) scale(.271)">
<path d="M0.0,185.0 55.0,188.0M280.0,215.0C288.8,216.5 304.6,222.7 320.0,222.0C335.4,221.3 332.4,217.9 350.0,212.0C367.6,206.1 382.4,199.4 400.0,195.0C417.6,190.6 414.6,189.8 430.0,192.0C445.4,194.2 448.0,203.2 470.0,205.0C492.0,206.8 503.6,202.9 530.0,200.0C556.4,197.1 576.8,193.8 590.0,192.0"/>
<path d="M510.0,0.0C512.2,6.6 509.0,15.7 520.0,30.0C531.0,44.3 544.6,50.7 560.0,65.0C575.4,79.3 581.2,80.7 590.0,95.0C598.8,109.3 598.2,109.1 600.0,130.0C601.8,150.9 598.4,176.8 598.0,190.0"/>
<path d="M598.0,190.0C607.2,192.2 617.6,194.5 640.0,200.0C662.4,205.5 682.4,205.1 700.0,215.0C717.6,224.9 711.6,234.0 720.0,245.0C728.4,256.0 734.0,260.6 738.0,265.0"/>
<path d="M738.0,520.0C732.9,525.5 725.6,532.9 715.0,545.0C704.4,557.1 701.0,562.9 690.0,575.0C679.0,587.1 673.8,588.6 665.0,600.0C656.2,611.4 653.3,621.1 650.0,627.0"/>
</g>
<!-- tile 2,2 -->
<g transform="translate(898,396) scale(.271)">
<path d="M205.0,0.0C209.4,4.4 219.1,11.2 225.0,20.0C230.9,28.8 234.2,31.2 232.0,40.0C229.8,48.8 218.1,46.8 215.0,60.0C211.9,73.2 213.6,81.3 218.0,100.0C222.4,118.7 230.2,123.0 235.0,145.0C239.8,167.0 233.4,179.1 240.0,200.0C246.6,220.9 254.0,223.5 265.0,240.0C276.0,256.5 282.3,262.9 290.0,275.0C297.7,287.1 297.8,290.6 300.0,295.0"/>
<path d="M300.0,295.0C308.8,293.9 327.9,297.7 340.0,290.0C352.1,282.3 352.4,276.5 355.0,260.0C357.6,243.5 347.6,229.3 352.0,215.0C356.4,200.7 365.5,207.1 375.0,195.0C384.5,182.9 387.3,172.1 395.0,160.0C402.7,147.9 395.7,147.7 410.0,140.0C424.3,132.3 440.2,133.8 460.0,125.0C479.8,116.2 486.8,108.8 500.0,100.0C513.2,91.2 514.5,93.8 520.0,85.0C525.5,76.2 519.5,69.9 525.0,60.0C530.5,50.1 541.7,49.9 545.0,40.0C548.3,30.1 543.3,23.8 540.0,15.0C536.7,6.2 532.2,3.3 530.0,0.0"/>
<path d="M300.0,295.0C294.5,300.5 284.9,306.8 275.0,320.0C265.1,333.2 261.6,339.6 255.0,355.0C248.4,370.4 246.1,376.8 245.0,390.0C243.9,403.2 248.9,409.5 250.0,415.0"/>
<path d="M0.0,258.0C8.8,260.6 26.8,263.0 40.0,270.0C53.2,277.0 51.2,276.8 60.0,290.0C68.8,303.2 69.0,313.5 80.0,330.0C91.0,346.5 100.1,352.9 110.0,365.0C119.9,377.1 106.3,378.4 125.0,385.0C143.7,391.6 167.5,386.2 195.0,395.0C222.5,403.8 229.1,411.8 250.0,425.0C270.9,438.2 270.2,444.0 290.0,455.0C309.8,466.0 320.2,466.2 340.0,475.0C359.8,483.8 362.4,482.9 380.0,495.0C397.6,507.1 402.4,518.3 420.0,530.0C437.6,541.7 442.4,543.6 460.0,548.0C477.6,552.4 491.2,549.6 500.0,550.0"/>
<path d="M125.0,395.0C118.4,396.1 104.9,392.3 95.0,400.0C85.1,407.7 89.9,414.6 80.0,430.0C70.1,445.4 61.0,454.6 50.0,470.0C39.0,485.4 41.0,487.9 30.0,500.0C19.0,512.1 6.6,519.5 0.0,525.0"/>
<path d="M500.0,550.0C498.9,558.8 495.0,575.0 495.0,590.0C495.0,605.0 498.9,611.8 500.0,618.0"/>
<path d="M600.0,510.0C608.8,513.3 623.5,522.8 640.0,525.0C656.5,527.2 667.3,521.1 675.0,520.0"/>
<path d="M500.0,580.0C508.8,584.4 518.0,593.0 540.0,600.0C562.0,607.0 570.3,608.0 600.0,612.0C629.7,616.0 658.5,616.7 675.0,618.0"/>
</g>
<!-- tile 0,2 target coords -->
<g>
<path d="M570.7,396.0C569.3,397.1 566.7,398.2 564.3,401.0C561.9,403.8 561.0,404.3 559.9,408.8C558.8,413.3 559.2,413.1 559.2,421.5C559.2,429.9 559.6,437.2 559.9,447.0C560.2,456.8 559.8,458.7 560.5,466.0C561.2,473.3 561.8,472.5 563.0,480.0C564.2,487.5 566.2,491.2 566.0,500.0C565.8,508.8 563.3,510.1 562.0,520.0C560.7,529.9 560.2,534.9 560.0,545.0C559.8,555.1 560.8,561.4 561.0,566.0"/>
<path d="M544.0,403.7C543.8,405.1 542.9,407.2 543.3,410.0C543.7,412.8 546.0,413.3 545.8,416.4C545.6,419.5 544.3,420.6 542.6,424.0C540.9,427.4 539.9,427.4 538.0,432.0C536.1,436.6 535.2,438.9 534.0,445.0C532.8,451.1 532.8,456.5 532.4,459.8"/>
<path d="M498.0,473.8C499.7,473.5 502.0,473.1 505.7,472.5C509.4,471.9 511.0,472.4 514.6,471.3C518.2,470.2 519.1,468.7 522.2,467.4C525.3,466.1 526.4,467.2 528.6,465.5C530.8,463.8 530.7,461.5 532.4,459.8C534.1,458.1 533.9,458.7 536.3,457.9C538.7,457.1 539.8,457.3 543.3,456.0C546.8,454.7 548.3,454.0 552.0,452.0C555.7,450.0 558.2,448.1 559.9,447.0"/>
<path d="M516.6,484.0C519.2,484.5 522.6,484.6 528.3,486.4C534.0,488.2 536.2,489.7 542.3,492.3C548.4,494.9 553.0,496.7 556.0,498.0"/>
<path d="M498.0,508.6C500.6,506.8 505.6,504.5 509.7,500.4C513.8,496.3 514.8,493.6 516.6,490.0C518.4,486.4 516.6,489.0 517.8,484.0C519.0,479.0 521.2,471.1 522.2,467.4"/>
<path d="M498.0,541.0C499.1,540.3 500.8,540.2 503.0,538.0C505.2,535.8 505.1,534.1 508.0,531.0C510.9,527.9 512.9,528.2 516.0,524.0C519.1,519.8 519.3,520.3 522.0,512.0C524.7,503.7 526.9,492.0 528.3,486.4"/>
<path d="M614.5,396.0C615.1,398.4 617.8,402.0 617.2,406.8C616.6,411.6 614.2,413.8 611.8,417.7C609.4,421.6 609.4,421.6 606.4,424.5C603.4,427.4 601.1,429.7 598.0,431.0C594.9,432.3 594.5,429.1 592.4,430.4C590.3,431.7 590.0,434.6 588.6,436.8C587.2,439.0 587.0,437.3 586.0,440.6C585.0,443.9 583.6,446.4 584.0,452.0C584.4,457.6 587.1,462.9 588.0,466.0"/>
<path d="M598.0,431.0C598.7,434.1 598.8,438.6 601.0,445.0C603.2,451.4 604.5,453.5 608.0,460.0C611.5,466.5 613.8,469.0 617.0,474.6C620.2,480.2 620.6,481.2 622.7,485.4C624.8,489.6 625.5,488.2 626.7,493.6C627.9,499.0 627.1,502.7 628.0,510.0C628.9,517.3 629.0,519.1 631.0,527.0C633.0,534.9 633.8,540.5 637.0,546.0C640.2,551.5 642.9,549.0 645.7,551.8C648.5,554.6 647.7,555.5 649.8,558.6C651.9,561.7 654.0,564.4 655.2,566.0"/>
<path d="M601.0,523.4C604.0,524.6 608.6,526.4 614.5,528.8C620.4,531.2 623.8,532.4 628.0,534.2C632.2,536.0 632.3,536.4 633.5,537.0"/>
<path d="M640.0,470.0C641.3,465.5 642.8,454.8 646.0,449.5C649.2,444.2 651.4,447.0 654.7,446.0C658.0,445.0 657.8,444.7 660.9,445.1C664.0,445.5 665.5,445.8 668.8,447.7C672.1,449.6 672.7,452.9 675.8,453.9C678.9,454.9 679.7,453.7 682.8,452.1C685.9,450.5 685.9,448.1 689.8,446.8C693.7,445.5 695.4,446.1 700.4,446.0C705.4,445.9 709.9,446.2 712.6,446.3"/>
<path d="M705.6,379.0C705.6,380.2 707.1,383.0 705.6,384.6C704.1,386.2 700.9,384.8 698.6,386.3C696.3,387.8 695.8,387.7 695.0,391.6C694.2,395.5 697.2,400.0 695.0,404.0C692.8,408.0 689.0,407.3 685.0,410.0C681.0,412.7 678.8,412.6 676.7,416.1C674.6,419.6 675.9,421.9 675.5,425.8C675.1,429.7 675.8,429.7 674.9,433.7C674.0,437.7 672.7,441.1 671.4,444.2C670.1,447.3 669.4,446.9 668.8,447.7"/>
</g>
</g>

</defs>
<rect x="498" y="76" width="583" height="489" fill="#f0efeb"/>
<path fill="#d3eed4" d="M578.6,91.4 583.3,95.4 590.3,99.9 602.1,98.4 602.7,91.3 607.4,87.4 601.7,82.6 589.3,70.8 582.6,84.4ZM620.4,105.5 619.9,110.4 625.2,112.8 630.6,109.4 635.5,104.2 637.0,97.7 635.3,94.3 630.8,95.4 621.5,102.8ZM564.7,121.2 579.0,119.1 578.2,123.4 592.1,125.1 601.9,106.5 596.3,94.0 583.6,107.8 580.2,110.2ZM603.8,114.7 603.2,119.3 603.8,120.5 605.5,116.9 608.0,115.2 609.6,107.9 607.9,108.9 606.4,112.3 605.0,113.5ZM611.3,120.3 610.7,135.0 603.9,124.5 602.9,124.3 600.1,121.4 601.6,118.5 599.5,106.7 605.2,113.8 611.3,113.3 616.5,110.9ZM580.9,115.8 579.1,117.8 580.2,118.9 582.4,118.0 582.7,115.8 584.1,114.9 585.5,112.6 584.5,112.6 584.3,112.1 583.9,110.8 582.8,113.1 581.2,114.6ZM596.0,137.3 596.3,140.0 601.2,141.5 616.0,140.8 612.9,136.9 611.8,128.8 605.8,126.6 596.7,135.4ZM626.5,144.6 622.3,149.4 618.2,145.2 615.0,145.7 610.6,139.3 617.4,141.2 618.6,141.7 620.8,141.5ZM618.7,103.7 619.0,112.3 615.4,114.1 614.0,108.8 613.4,103.9 617.5,97.6 618.2,95.6 622.6,84.1 621.7,98.2ZM643.5,102.1 641.4,104.6 639.5,105.4 639.1,105.7 635.7,103.6 637.4,102.1 636.9,98.5 639.1,98.6 640.5,99.0 641.5,99.5 643.9,98.5ZM629.8,86.0 628.0,92.2 629.5,87.1 629.1,88.5 628.9,89.2 629.5,87.4 630.6,83.8 631.7,79.9 631.3,81.1 632.9,75.9 632.4,77.3 630.5,83.8ZM574.0,88.1 573.7,89.2 572.4,93.7 573.4,90.1 573.7,89.0 574.3,86.4 575.2,83.4 577.0,77.6 575.6,82.6 576.0,81.5 575.8,82.2 575.9,82.1ZM553.6,89.5 552.6,89.2 551.6,92.4 551.4,89.6 552.5,87.4 552.9,86.0 554.3,83.1 554.4,84.8ZM594.7,98.1 589.2,98.5 586.8,98.7 581.9,100.4 582.4,96.3 581.4,92.4 586.9,93.2 593.2,94.1ZM558.7,109.4 559.7,109.5 560.1,110.6 559.3,116.9 562.4,112.1 562.6,107.0 566.6,100.7 564.1,102.4 565.7,94.2 563.4,97.9 560.8,105.0ZM572.8,100.7 571.1,102.9 570.4,103.7 569.8,102.6 568.4,104.4 567.4,100.9 567.7,100.8 567.7,98.1 569.7,97.7 570.9,98.1 573.2,98.8ZM629.4,100.7 632.6,104.8 632.3,111.1 636.5,104.4 637.7,107.3 643.5,102.8 641.5,96.5 639.6,96.3 642.8,90.1 637.2,91.0 636.5,87.0 634.8,96.9ZM640.8,113.2 640.8,118.4 637.4,118.2 637.1,114.6 632.2,115.8 633.5,113.2 636.1,112.7 637.0,112.3 637.7,111.7 638.2,111.2 640.8,112.7ZM643.9,115.6 645.6,116.5 646.6,116.2 647.6,118.1 649.7,113.6 648.9,113.1 650.0,109.4 647.9,111.4 646.0,113.3ZM652.6,114.3 652.4,118.2 651.2,115.5 649.9,118.1 645.5,117.8 645.5,113.5 648.0,110.2 650.5,109.8 651.4,99.0 653.6,101.6 653.6,107.7 655.2,109.0ZM661.4,113.6 659.7,117.3 660.8,120.0 661.7,120.2 666.2,117.2 665.9,115.1 670.2,111.3 665.7,111.8 668.8,107.8 665.0,110.5 663.3,111.4 661.3,111.5ZM634.3,125.2 636.9,126.4 637.8,127.7 641.2,124.1 643.7,122.7 644.8,118.5 642.9,117.6 640.3,116.0 638.2,121.2ZM623.4,119.2 625.0,121.9 627.7,121.5 631.5,120.3 628.6,119.0 629.5,116.3 625.1,118.2ZM657.9,137.1 655.3,139.6 656.0,143.8 660.8,139.9 664.9,134.6 666.5,131.6 665.4,129.0 661.9,132.6 661.5,131.6 659.2,134.0ZM669.1,145.8 671.0,146.6 668.1,146.5 667.3,148.1 663.9,149.0 661.3,145.9 665.3,145.1 664.4,144.4 664.4,142.1 667.2,142.7 669.0,143.2 668.9,144.1ZM662.6,143.8 662.2,144.8 661.5,146.7 662.1,143.1 663.1,138.6 663.5,139.4 663.5,141.2ZM685.1,96.0 679.1,99.1 675.6,98.8 672.8,98.7 667.6,96.0 670.9,90.0 676.0,88.3 679.9,93.3ZM663.1,89.7 663.0,92.6 664.3,91.3 665.2,92.4 667.4,91.0 670.0,86.7 667.1,86.8 666.7,86.9 666.0,85.3 663.6,86.4ZM665.4,103.1 665.7,104.0 662.7,104.1 662.5,104.3 660.9,103.6 661.0,102.8 658.8,101.0 659.6,100.1 661.1,99.6 664.1,99.3 664.1,100.4 665.8,101.7ZM701.1,82.3 694.9,87.4 690.0,84.1 682.4,82.4 683.2,78.9 691.4,73.5 693.2,79.3ZM689.3,89.8 688.9,91.1 688.8,91.9 689.2,91.3 689.8,89.7 689.9,88.9 690.2,88.1 690.0,88.2 690.3,87.1 689.8,88.2ZM676.6,165.9 675.3,167.5 674.3,172.3 672.1,172.2 669.6,168.1 670.4,164.7 673.0,164.6 671.9,159.9 674.0,160.5 676.9,159.3 677.4,164.1ZM676.8,156.2 678.4,157.4 678.7,157.6 679.9,156.9 680.4,157.8 683.0,156.8 683.1,155.2 681.5,155.2 681.3,153.5 681.3,152.4 677.5,152.9 677.6,155.3ZM647.6,141.9 647.9,144.7 649.1,145.9 653.5,141.6 655.5,136.0 652.3,137.6 651.7,137.9 650.2,135.6ZM642.2,138.9 640.7,139.0 639.5,139.1 638.5,140.7 638.4,138.5 636.3,137.8 637.8,135.6 639.3,137.1 639.8,137.3 641.4,136.5ZM652.3,149.7 652.7,150.5 654.6,150.7 655.7,149.6 657.7,148.4 654.4,148.6 651.9,148.4ZM654.7,177.9 658.2,182.1 665.8,179.5 672.4,177.9 667.7,174.5 664.0,171.8 660.7,170.8ZM661.7,165.7 664.9,165.4 665.5,168.0 667.4,167.4 670.4,166.6 671.8,164.6 668.4,163.0 667.1,163.0 666.9,162.5 663.2,164.2ZM681.4,212.0 680.1,214.6 679.3,216.6 677.4,222.2 681.1,209.9 683.2,202.0 685.9,194.0 685.5,196.6 684.4,200.5ZM689.4,225.4 687.9,230.0 687.2,227.1 687.3,224.4 686.7,220.0 689.0,220.0 692.0,219.2ZM682.8,230.6 679.2,231.1 678.3,233.4 676.0,232.9 669.6,232.0 670.7,231.3 669.3,225.9 674.8,222.4 679.2,220.8 678.5,224.3 684.6,222.5ZM679.5,217.1 681.3,217.9 682.4,219.1 685.2,216.5 686.7,214.1 682.9,212.0 680.0,213.8ZM649.5,188.5 643.7,189.4 641.7,188.8 639.8,187.9 634.9,188.6 634.7,184.5 638.8,183.1 639.8,181.5 645.6,181.1 647.8,185.0ZM629.6,191.1 629.5,192.8 629.9,192.3 630.0,193.3 631.0,191.5 631.8,189.2 632.4,187.2 632.1,187.0 632.1,186.6 631.3,187.2 630.9,189.0ZM618.6,215.7 618.4,220.6 615.3,218.9 614.1,223.4 611.7,219.4 610.3,214.0 611.5,213.5 614.1,212.1 616.7,207.3 617.6,208.2 620.5,210.9ZM603.2,211.0 603.0,211.5 602.6,212.6 602.7,212.1 603.4,209.9 604.1,207.5 603.7,208.9 603.8,208.8ZM534.0,171.8 536.8,174.0 538.7,174.4 540.0,179.8 541.2,172.6 545.9,168.7 542.3,166.1 537.6,166.9 537.2,170.6ZM530.2,178.6 530.0,182.3 532.8,180.5 532.4,183.5 534.2,180.7 534.2,180.0 535.8,179.4 534.5,177.9 535.7,175.6 533.1,177.7 531.4,176.7 532.4,178.4ZM552.5,176.1 551.5,178.4 549.8,180.7 547.5,180.5 547.4,176.3 549.8,173.3 550.2,167.8 550.7,167.5 553.3,168.8 552.6,172.9ZM556.6,170.3 555.7,172.3 555.9,172.8 556.5,172.1 556.6,172.8 557.3,170.5 557.6,169.3 558.7,167.0 558.6,165.8 557.4,168.6 557.3,169.0 557.0,167.4ZM545.9,176.0 544.4,178.0 543.6,177.2 541.4,177.0 541.9,174.2 543.9,173.6 545.1,173.1ZM532.5,164.5 529.9,165.1 528.3,165.7 527.2,165.8 526.3,163.9 527.6,162.1 525.7,160.2 527.8,157.0 529.4,161.7 531.8,161.9ZM522.4,161.4 522.2,161.7 521.9,161.7 522.1,160.7 522.1,160.2 522.0,159.7 522.3,159.5 522.5,159.2 523.0,156.9 523.0,158.2 522.7,159.6ZM532.2,158.6 532.5,158.7 533.0,158.5 533.4,158.2 533.9,156.6 533.8,155.7 532.9,156.0ZM570.3,158.6 567.7,159.3 564.1,161.3 562.8,160.2 563.2,155.6 568.2,151.4 568.6,156.1ZM560.4,162.4 562.2,164.0 563.3,163.5 565.0,163.5 565.3,160.8 564.5,160.3 562.3,162.1ZM509.9,177.0 508.2,179.2 506.8,181.3 507.2,177.9 506.3,176.4 507.0,172.5 507.8,173.1 509.0,174.7 510.7,173.8ZM504.3,175.1 504.1,176.1 501.7,176.1 501.4,174.8 501.1,174.0 502.1,173.4 502.9,174.1ZM516.2,175.6 515.4,175.7 515.2,176.0 514.7,176.5 514.9,175.6 514.8,175.2 514.9,174.9 514.9,174.3 515.4,174.5 516.1,174.2 516.2,175.3ZM525.1,230.4 524.6,232.6 525.0,231.9 524.9,233.4 526.6,228.8 527.3,226.6 528.2,224.3 526.7,227.1 527.2,225.1 525.5,228.7ZM538.9,230.6 537.2,232.1 534.7,230.8 532.7,231.3 532.2,228.6 534.0,228.9 535.6,229.3 535.9,229.5ZM500.2,228.5 500.2,234.9 500.6,234.3 502.7,230.7 503.3,230.8 504.2,229.0 504.8,226.3 504.2,225.4 503.8,225.7 502.6,223.2ZM499.3,222.5 499.2,223.4 498.6,223.4 498.7,222.3 498.5,222.3 498.4,221.5 498.3,220.7 499.1,218.5 499.3,219.2 499.7,218.2 500.3,217.9 499.8,220.3ZM574.1,214.5 573.5,216.3 573.7,216.2 573.0,219.6 574.3,215.7 575.5,212.5 576.3,209.4 575.4,211.3 575.1,211.1 574.7,212.2ZM581.7,211.0 581.1,211.9 580.7,212.0 579.0,212.1 578.9,211.6 578.3,210.8 579.3,210.1 578.8,208.2 580.8,208.1 580.7,209.9ZM571.3,217.5 570.4,219.2 570.0,218.4 568.9,220.1 569.0,217.7 569.6,216.8 569.0,216.1 570.0,214.5 570.4,215.6 570.8,214.9 570.9,216.6ZM602.3,228.5 604.0,227.5 603.0,232.0 604.7,228.1 605.3,228.6 606.2,227.1 606.9,224.8 607.1,224.0 607.0,222.2 604.5,223.1 603.8,224.3ZM604.1,220.6 602.7,220.6 602.1,221.5 601.6,220.3 600.4,218.5 602.1,218.8 602.2,218.4 602.7,218.3 603.0,218.9ZM600.2,233.5 599.3,234.3 598.6,234.0 597.9,234.0 596.6,232.0 598.4,231.6 600.0,232.9ZM559.6,88.5 558.4,95.8 554.6,96.1 553.1,91.2 555.2,86.1 557.4,80.9 558.9,85.5ZM556.7,101.1 554.5,104.4 555.8,104.9 556.7,103.1 557.4,102.3 558.9,102.0 558.5,101.2 560.0,97.4 559.5,97.2 557.8,96.9 556.4,97.9 556.1,97.9ZM545.7,102.8 546.8,105.2 547.3,106.0 548.7,106.2 551.2,101.4 552.1,98.5 551.0,97.4 549.3,99.8 548.4,99.9ZM550.9,108.9 550.2,110.2 550.7,111.9 551.3,110.3 551.7,109.4 552.2,109.2 552.3,108.3 552.1,107.8 552.0,107.5 551.2,107.4 551.0,108.5ZM552.1,106.2 551.9,106.5 552.1,107.8 553.0,107.0 554.4,107.2 554.4,106.4 554.9,105.6 554.0,103.5 553.1,103.9 552.0,104.5 551.9,104.9ZM747.6,91.1 747.7,100.0 730.3,100.2 720.5,107.3 713.4,99.2 713.4,92.5 723.5,87.3 728.6,78.5 733.9,85.3 750.0,87.5ZM701.0,104.2 702.1,107.5 704.7,106.7 707.1,104.6 712.0,102.8 711.2,95.3 709.2,95.6 703.4,101.7ZM733.7,110.2 733.4,111.2 732.4,114.3 733.9,110.6 733.7,111.7 734.4,111.1 735.1,108.0 735.1,107.7 735.1,106.9 735.3,105.4 734.8,106.7 734.0,108.6ZM710.6,115.1 704.8,126.0 710.5,121.5 714.0,117.4 717.1,115.1 719.1,107.8 715.0,110.7 713.9,109.8 711.6,107.8ZM687.1,117.8 686.0,121.5 686.8,118.7 687.0,118.1 688.0,114.7 688.2,113.9 687.5,116.3ZM720.1,137.7 717.2,140.6 714.2,141.4 707.2,136.3 710.6,134.9 714.6,131.1 717.1,134.5ZM745.7,86.2 738.8,97.0 747.9,89.3 754.8,88.3 760.1,85.5 751.1,83.7 749.8,81.6 741.6,83.2ZM723.8,82.9 726.8,84.7 728.1,83.6 728.9,85.6 732.1,82.9 735.4,83.1 735.0,79.9 732.0,79.6 731.5,79.7 729.5,78.0 727.5,81.4ZM776.0,110.3 765.8,106.9 762.6,109.1 751.7,115.0 751.3,109.4 744.9,104.4 755.1,93.7 755.2,87.4 766.8,93.6 768.4,101.9ZM759.1,120.2 759.0,122.2 759.4,124.6 762.5,122.7 763.4,118.1 766.3,111.4 762.1,115.0 760.7,115.6ZM774.8,107.5 775.5,110.0 781.6,107.1 788.1,107.5 784.4,104.0 784.8,100.8 784.3,97.8 780.1,102.2ZM743.4,125.6 744.2,132.3 740.4,131.5 739.6,137.5 738.5,130.9 733.3,123.8 739.5,123.0 736.6,116.7 739.7,111.5 744.6,114.8 743.5,120.5 746.6,123.5ZM728.9,114.4 728.7,115.0 727.3,121.6 732.1,115.8 734.3,114.0 737.7,108.9 736.0,106.9 732.9,107.2 729.5,111.7ZM723.2,142.1 723.1,144.4 720.9,152.7 725.1,145.9 728.4,139.0 727.4,138.0 727.1,136.9 728.3,130.5 724.4,138.0ZM742.5,130.8 743.2,131.3 743.3,133.6 745.0,129.5 745.0,127.8 745.4,124.7 743.4,128.9ZM709.8,151.9 709.7,153.7 711.2,154.6 713.1,150.0 715.0,146.9 715.9,144.5 713.3,146.0 711.8,148.8ZM702.6,91.6 703.8,93.2 704.2,94.0 705.3,97.4 706.7,92.8 707.0,91.2 708.4,87.0 709.0,81.7 705.9,88.1 703.3,89.7ZM708.8,76.7 707.5,79.2 710.0,77.9 711.8,78.3 714.0,74.4 711.3,73.8 708.0,73.5ZM697.0,89.0 697.6,92.4 694.8,92.1 693.4,94.6 690.7,90.0 691.2,87.6 694.6,85.4 697.5,84.4 696.3,87.8ZM770.4,89.6 771.8,90.4 768.2,103.1 770.0,103.1 775.2,94.2 780.3,96.0 783.3,88.7 780.9,81.2 781.3,79.1 777.0,76.2 774.2,85.7 769.8,86.3ZM773.1,74.3 776.2,76.0 777.0,78.6 780.7,75.7 780.8,73.5 778.5,71.1 774.4,70.9ZM744.3,144.3 751.4,147.2 757.1,142.8 763.4,149.5 770.2,140.8 763.0,133.4 757.0,129.6 746.9,135.6ZM741.4,141.3 740.7,143.1 739.8,145.9 738.1,143.1 734.8,147.6 733.0,142.2 735.5,140.2 734.5,136.1 738.7,139.3 739.7,139.2 741.5,139.4 742.1,140.2ZM774.6,82.5 775.8,84.2 781.7,82.7 782.7,82.4 787.9,81.1 785.0,80.3 789.4,76.7 784.4,76.5 781.7,78.8 777.3,80.8ZM771.1,84.1 770.6,85.3 770.8,83.8 770.9,83.0 771.6,80.4 771.6,81.0 771.3,82.8ZM702.7,198.5 701.5,203.9 702.5,205.2 702.6,206.3 706.1,197.4 708.3,197.7 709.3,193.4 709.4,190.0 706.5,193.0 705.5,192.6 703.8,194.5ZM704.3,183.9 703.7,185.8 704.0,185.5 704.0,185.7 705.0,182.3 705.9,179.7 705.2,181.3 704.7,182.6ZM704.4,153.1 706.4,152.8 707.6,151.9 709.3,151.7 710.3,150.7 710.8,147.1 711.8,143.8 708.0,146.0 707.3,147.8ZM723.8,150.7 721.5,150.8 721.8,151.8 720.3,150.5 719.4,150.9 718.7,149.0 719.2,149.0 719.5,147.9 721.7,147.3 722.1,147.9 723.8,149.7ZM824.5,116.9 829.2,112.8 826.9,122.1 832.5,109.3 832.1,107.3 831.6,105.7 830.5,106.2ZM843.5,103.4 843.3,108.6 846.3,104.5 847.9,101.0 848.3,98.8 848.0,97.9 846.6,98.9ZM842.7,98.9 840.9,102.9 847.9,104.1 853.6,103.4 854.3,100.8 854.2,98.5 854.7,90.5 847.2,95.1 835.2,95.6ZM863.2,94.0 862.0,97.2 863.4,95.5 864.7,93.2 866.0,88.3 865.8,87.5 864.6,90.2ZM861.4,107.9 858.3,109.3 856.2,111.0 854.2,107.6 856.1,106.3 856.8,103.7 858.8,106.5ZM857.5,115.1 858.5,117.0 859.9,118.6 860.1,121.0 865.4,117.9 866.2,115.6 865.6,112.7 867.6,107.8 862.8,111.0 861.4,109.1 858.7,111.4ZM846.9,110.2 845.8,111.2 848.3,110.8 848.8,112.7 849.5,111.0 851.0,111.1 851.4,108.0 849.6,109.2 849.0,106.8 847.4,108.1 847.9,109.5ZM850.0,123.9 849.4,125.9 850.3,126.4 851.7,123.4 853.9,120.0 853.5,118.1 852.3,118.8 851.1,121.9ZM845.4,126.5 841.0,128.4 837.8,129.9 836.8,127.2 838.0,120.8 840.8,115.4 841.8,122.8ZM832.1,124.9 831.3,125.3 831.0,125.5 830.9,124.9 830.6,124.9 829.6,123.7 830.2,122.9 830.8,122.3 831.5,123.1 832.1,122.4 832.0,123.6ZM832.4,120.5 832.1,121.5 832.4,120.8 832.0,122.4 832.7,120.4 833.2,118.9 833.3,118.3 833.5,117.3 832.9,119.0 832.8,119.2ZM821.1,117.6 820.2,118.9 819.1,119.9 817.3,120.4 815.7,121.0 814.2,117.9 811.4,115.3 814.0,113.8 817.5,113.9 818.6,114.7 820.0,114.6 820.7,116.7ZM829.2,118.2 828.8,118.6 828.0,121.2 827.5,120.9 828.1,118.8 827.9,118.0 828.4,117.1 828.7,116.7 828.9,116.0 829.3,115.4 829.5,116.1 829.4,117.7ZM861.0,84.3 858.5,85.6 855.7,89.3 864.0,85.7 865.7,85.9 867.6,84.4 875.5,83.4 868.0,82.2 868.4,80.7 862.8,80.8 860.1,81.7 859.4,82.7ZM879.6,87.1 879.5,87.7 878.9,86.5 878.6,86.7 878.0,86.8 878.1,85.6 878.4,84.4 878.7,84.2 879.3,83.1 880.0,83.6 880.2,85.9ZM866.1,91.8 865.3,94.5 861.3,92.2 859.7,93.8 856.9,91.5 857.0,91.3 858.0,89.8 860.6,89.8 863.5,89.4 863.3,91.3ZM886.6,97.1 884.9,103.0 885.8,99.6 886.4,97.0 888.1,91.6 887.5,94.0 888.2,92.0ZM886.3,90.5 885.0,89.9 883.8,92.0 883.3,90.0 884.7,86.8 885.0,88.0 885.7,88.0ZM881.8,93.4 881.2,95.4 879.5,96.3 878.7,95.1 879.0,93.6 879.5,92.0 879.5,89.9 880.5,91.6 881.1,92.4ZM841.5,146.3 840.7,148.8 838.0,151.1 838.8,147.6 836.5,145.1 838.9,144.3 839.4,142.0 839.9,142.7 842.3,140.1 842.0,142.7ZM833.2,148.6 833.4,149.5 834.3,149.6 835.2,149.7 836.8,149.7 835.9,148.6 838.0,146.6 836.2,145.1 835.2,145.6 832.4,147.7ZM877.4,153.8 877.1,156.8 875.8,159.8 875.6,154.5 875.9,153.1 874.3,154.1 875.6,149.8 876.8,147.0 876.9,150.7 878.5,147.9 877.4,152.5ZM868.9,149.8 868.9,151.5 868.2,152.3 867.9,150.4 867.5,148.4 867.5,147.4 868.8,145.7 869.7,146.5 869.6,148.4ZM886.2,148.1 885.0,148.8 885.4,150.8 884.1,149.9 882.0,151.5 883.0,149.0 882.4,148.2 880.1,146.5 883.3,147.5 884.3,147.4 885.2,146.9 886.9,147.5ZM801.4,144.7 804.6,147.8 807.8,148.2 807.8,145.1 811.8,143.2 806.8,142.6 804.1,142.8ZM812.4,142.4 811.3,143.0 810.1,143.2 809.3,142.3 809.8,141.5 810.8,141.6 812.2,140.7ZM804.0,147.7 803.8,148.6 802.3,149.3 800.9,149.0 800.1,148.8 799.0,148.0 800.4,147.0 799.7,146.3 801.3,146.5 801.5,145.8 802.4,146.9 804.0,146.5ZM838.1,174.1 836.5,178.9 835.8,176.4 835.2,174.4 833.7,177.1 834.2,174.5 834.2,172.3 835.0,171.7 835.8,165.8 836.6,169.3 837.0,171.5 837.3,172.3ZM843.7,171.7 841.7,173.7 843.6,173.2 843.8,174.7 844.8,174.0 845.3,171.8 845.7,171.3 846.8,169.7 846.9,168.3 844.7,168.0 843.8,169.5 844.2,170.8ZM842.2,180.8 841.1,182.8 840.4,182.1 839.7,183.1 838.9,182.9 838.7,181.7 837.8,180.5 838.5,178.8 840.6,178.6 840.5,180.5 841.2,180.8ZM850.8,174.9 850.7,175.5 850.8,175.2 850.6,175.9 851.5,172.9 852.2,170.6 851.8,171.6 851.3,173.3ZM848.3,171.7 848.2,174.4 846.9,172.7 846.1,172.2 846.4,170.7 847.3,170.1 849.4,170.3ZM805.9,180.2 805.3,183.3 804.6,180.2 802.9,179.2 804.7,177.4 805.2,175.9 807.7,178.4ZM807.1,184.2 808.7,184.6 807.6,185.5 805.1,184.9 802.9,185.0 804.7,184.1 803.3,183.0 804.3,182.6 805.7,181.9 807.4,182.4 808.5,182.9ZM815.0,196.8 811.7,196.5 811.2,199.2 809.5,195.4 803.9,194.1 804.7,190.9 806.7,188.9 812.1,192.9 815.2,194.4ZM819.9,198.8 819.9,198.8 819.8,198.7 819.7,198.5 819.9,197.1 820.4,196.2 820.4,196.5 820.2,197.7ZM894.9,192.6 891.0,195.5 890.7,201.9 888.8,196.0 885.2,196.4 883.2,194.2 883.0,190.5 886.4,188.8 889.2,187.5 891.4,190.3 890.7,192.5ZM892.9,206.5 892.4,205.5 891.6,207.7 892.2,205.1 891.4,205.8 892.8,201.4 893.4,200.0 893.5,201.0 893.6,203.3ZM895.7,184.4 894.3,188.6 893.2,187.0 891.0,187.8 889.4,185.1 891.9,183.8 893.1,182.3 894.1,183.1ZM886.2,220.6 882.4,222.2 876.1,220.3 874.0,219.6 869.2,216.3 875.6,214.1 879.4,217.3ZM865.1,217.2 865.0,217.7 864.5,219.5 865.0,218.2 865.3,217.0 865.6,216.3 865.9,215.3 866.2,214.3 865.8,215.4 865.9,215.0 865.3,216.7ZM886.9,223.0 886.1,223.9 885.9,224.1 885.8,223.3 885.8,222.9 884.9,223.4 885.5,221.4 885.9,221.7 886.1,221.3 886.8,220.5 886.6,221.4 886.9,222.0ZM885.1,208.5 887.3,214.5 892.0,214.2 893.3,211.4 896.4,210.9 894.9,206.3 892.9,207.2 891.6,206.5 890.1,207.4ZM902.5,206.5 901.7,208.9 901.4,207.7 900.8,208.5 901.3,206.6 900.7,206.0 901.9,203.3 902.1,204.1 902.8,202.7 902.1,205.5ZM799.0,120.3 798.2,123.1 797.4,123.9 798.0,120.1 798.1,117.1 799.9,115.1 799.2,118.6ZM795.6,124.4 794.6,125.3 793.8,125.7 792.3,123.9 792.1,123.6 793.0,122.7 793.9,122.5 794.8,123.2ZM808.0,121.3 805.8,122.3 804.4,122.5 802.5,121.2 804.2,120.2 805.0,119.5 805.8,120.0ZM863.4,195.4 864.0,198.0 860.8,199.8 860.7,197.5 858.2,197.9 857.8,194.9 860.9,194.2 861.4,194.3 864.6,192.5ZM865.3,198.3 865.1,199.1 864.8,199.6 865.2,198.1 865.5,197.0 865.8,196.6 865.5,197.8ZM868.9,198.6 868.9,200.9 868.0,199.9 867.0,199.9 866.4,201.2 866.7,199.0 866.1,199.1 866.6,198.2 867.1,197.7 867.5,196.5 868.3,197.0 867.9,198.5ZM922.0,88.7 915.0,92.1 913.9,101.1 905.6,94.1 908.2,89.7 902.4,79.2 913.8,79.0 922.6,84.8ZM931.5,86.4 931.7,89.8 930.7,87.1 929.9,89.0 930.4,86.1 929.1,85.7 930.1,83.6 930.8,81.4 932.1,81.2 932.5,81.9 932.2,84.7ZM928.8,89.2 929.5,91.0 929.3,97.4 933.6,94.0 938.7,85.2 940.9,81.2 938.6,75.1 933.5,79.5 928.6,84.2ZM919.5,89.1 919.7,91.3 919.7,91.7 920.5,92.5 923.0,89.2 922.9,88.6 925.6,87.9 923.4,87.4 923.5,86.5 922.6,87.2 922.2,86.5 921.3,87.8ZM931.3,78.8 930.7,80.2 930.4,80.6 930.8,79.3 931.0,78.2 931.2,77.5 931.7,76.0 931.7,75.8 931.8,75.8 931.8,75.9 932.1,75.6ZM950.3,89.1 951.4,91.1 952.1,90.7 954.8,86.9 953.9,85.1 956.9,74.9 953.9,80.9ZM945.9,101.4 946.4,102.3 947.1,104.4 951.9,102.5 951.3,99.7 948.3,99.1 946.6,99.5ZM928.0,107.1 930.2,109.7 926.5,110.1 920.5,110.0 919.3,109.2 918.3,105.7 916.6,101.2 921.1,100.3 926.0,103.3 934.9,103.1ZM934.8,106.2 935.1,107.1 933.4,109.8 936.2,107.0 936.7,107.2 938.6,105.2 940.9,103.2 940.6,101.6 937.9,101.6 935.8,102.6 934.3,104.3ZM927.1,117.1 927.9,119.2 931.0,120.5 932.9,116.9 936.4,115.9 936.9,113.2 934.0,114.6 932.7,114.3 927.8,114.8ZM947.4,110.3 946.7,112.3 943.8,112.4 941.2,117.1 941.9,110.2 938.3,103.8 940.4,97.5 944.9,103.8 945.1,105.1 949.3,105.6ZM925.9,106.0 925.6,106.7 925.1,108.6 925.2,108.1 925.5,106.8 926.3,104.2 926.4,104.1 927.1,101.6 927.3,101.0 926.8,102.7 926.8,102.8 926.2,104.6ZM932.5,96.3 936.6,97.3 939.3,100.4 940.8,95.7 943.3,92.6 939.0,90.2 934.5,91.6ZM920.9,123.2 916.2,124.4 914.3,129.7 913.3,128.3 911.9,123.5 905.6,124.0 906.0,118.8 909.3,114.7 914.0,119.0 915.6,119.6 915.5,121.1ZM906.0,129.1 904.3,130.0 903.8,129.7 903.2,129.9 900.7,130.2 901.9,129.0 899.0,127.8 901.6,126.7 902.9,126.3 904.3,127.3 904.4,127.8ZM968.1,116.0 964.1,117.1 959.9,120.1 958.5,114.7 954.2,109.7 961.9,110.7 967.6,107.1ZM969.5,106.6 968.5,108.2 967.2,106.9 965.9,107.6 965.1,107.4 965.4,106.0 966.1,104.5 966.9,104.9 968.4,104.5 968.5,106.0ZM964.2,105.9 964.9,107.6 963.3,107.8 961.9,108.5 961.7,106.6 961.1,105.4 961.4,102.5 962.3,104.2 965.2,102.7 965.3,104.8ZM937.5,132.7 936.5,133.8 937.3,134.9 938.0,135.0 940.1,135.6 943.4,130.5 942.3,129.6 940.2,130.0 939.7,127.4 937.7,130.2 934.5,131.0ZM937.7,125.7 937.4,126.5 937.2,127.0 937.7,125.2 937.7,125.2 938.2,123.1 938.3,123.1 938.6,122.1 938.1,123.9 938.0,124.5ZM981.8,150.0 979.2,155.2 977.8,158.7 970.5,154.1 965.9,144.8 974.7,144.7 976.7,144.0 979.6,147.3ZM968.0,151.9 965.2,152.8 964.9,158.1 963.0,153.9 963.3,151.9 963.3,150.4 962.2,147.7 965.1,149.2 965.8,149.1 966.2,149.8ZM963.6,163.6 964.6,166.1 965.8,166.7 967.1,163.9 968.4,163.0 969.7,160.2 967.7,160.6 967.1,158.7 965.6,159.9ZM959.4,162.3 959.3,162.5 958.0,163.5 957.7,163.0 956.4,162.2 957.2,161.4 955.9,159.9 957.3,160.7 957.5,159.5 958.0,158.8 958.7,160.5 958.5,160.7ZM977.1,164.6 976.4,166.4 977.6,165.2 978.6,165.4 979.8,165.0 980.5,163.3 978.2,163.8 976.2,163.3ZM1004.4,140.9 1003.9,142.8 1004.2,140.8 1004.1,140.6 1004.6,138.4 1004.8,138.0 1005.5,135.2 1006.0,133.6 1007.5,128.8 1006.2,133.6 1005.8,135.8 1005.3,137.5ZM990.0,135.7 987.7,136.0 986.9,139.0 985.6,137.4 985.8,136.2 985.9,135.3 984.1,133.0 986.7,133.4 987.5,134.9 991.3,135.1ZM1006.9,128.9 1008.3,132.4 1001.5,132.3 1000.1,129.2 1000.4,126.9 1002.8,127.1 1003.9,123.6 1006.5,128.0ZM992.4,154.7 994.9,155.3 994.1,157.2 999.9,155.2 1001.9,153.1 1005.4,149.1 1001.5,146.8 996.6,147.9 996.2,151.3ZM995.6,160.2 995.7,161.3 997.0,162.5 999.1,161.0 1000.4,160.8 1000.4,158.7 1000.9,157.9 1001.6,155.6 999.6,156.6 998.2,158.3 997.9,158.9ZM1033.2,128.2 1032.6,130.4 1029.9,131.1 1028.9,130.4 1023.6,131.2 1027.8,127.0 1026.7,120.6 1029.7,121.5 1034.5,123.0 1034.9,123.4ZM1024.0,129.9 1022.5,129.3 1021.5,129.3 1021.4,129.3 1020.9,128.6 1019.8,127.8 1020.9,127.3 1021.6,126.2 1022.2,126.4 1023.6,127.0ZM1043.7,124.7 1043.1,126.4 1043.0,126.8 1043.4,125.8 1043.6,125.6 1044.0,124.6 1044.2,124.1 1044.2,123.6 1044.7,121.9 1044.5,122.2 1043.9,124.0 1043.9,123.7ZM1047.7,143.5 1047.7,142.9 1046.1,148.1 1045.6,148.8 1048.4,139.4 1048.9,138.0 1051.3,130.2 1051.3,130.8 1050.6,133.3ZM1040.0,153.8 1038.5,152.9 1036.7,155.5 1036.7,152.8 1037.6,146.7 1040.5,144.2 1039.6,149.3ZM1064.2,123.4 1062.7,125.6 1061.6,124.4 1059.8,125.5 1058.2,122.9 1055.4,118.8 1056.4,116.2 1060.3,115.1 1063.2,113.9 1067.6,120.8ZM1071.7,117.9 1071.5,119.3 1072.5,120.4 1073.4,118.3 1074.9,117.7 1075.2,115.4 1073.8,115.6 1073.2,114.1 1072.5,116.8ZM1070.8,139.7 1069.3,144.1 1071.9,148.5 1075.8,145.4 1078.0,142.2 1077.0,136.8 1078.5,131.7 1074.2,134.7 1072.4,137.3ZM1067.1,130.6 1066.8,132.2 1064.9,138.1 1066.4,134.7 1067.4,131.7 1067.6,130.9 1068.0,129.4 1069.2,124.7 1068.7,125.2 1067.0,130.0ZM1080.9,136.4 1079.1,139.8 1081.2,142.0 1082.5,141.2 1084.3,139.3 1084.9,137.6 1084.8,134.2 1083.4,131.3 1082.4,134.6 1081.7,135.9ZM1011.0,116.9 1009.3,123.6 1011.9,119.8 1013.3,114.9 1015.5,109.7 1013.8,111.5 1013.0,112.5ZM1020.4,122.4 1020.2,123.1 1019.4,123.5 1018.7,123.9 1017.4,122.9 1018.4,121.9 1018.1,119.7 1019.4,119.6 1020.5,118.0 1021.8,121.3ZM1054.8,106.9 1051.4,116.0 1056.0,112.7 1061.1,107.9 1060.4,102.7 1057.9,99.6 1054.5,105.5ZM1049.8,98.1 1048.1,101.1 1049.1,101.6 1051.7,98.4 1051.7,96.3 1051.4,96.3 1051.9,92.8 1050.3,97.1ZM1040.5,103.0 1039.9,105.0 1040.8,105.3 1040.4,106.6 1042.2,104.0 1042.7,103.4 1045.1,100.8 1043.1,100.9 1042.8,100.9 1042.8,98.4 1042.0,101.7 1040.5,102.6ZM1078.7,114.8 1075.1,115.4 1074.6,118.9 1073.6,119.3 1072.6,115.1 1067.3,116.1 1072.1,113.0 1072.2,109.2 1073.8,109.6 1075.0,112.1 1077.7,113.7ZM1085.5,113.1 1086.3,114.7 1085.1,115.1 1082.3,114.7 1083.4,112.6 1083.9,112.2 1084.7,110.0 1084.9,111.9 1085.7,112.1ZM908.0,194.5 911.9,190.1 910.0,196.3 913.8,195.0 914.6,190.1 916.7,186.1 915.0,185.3 915.1,184.2 913.6,183.5 911.1,188.3ZM918.1,176.6 917.0,179.4 917.4,179.5 918.6,178.8 919.6,176.9 921.2,176.4 921.4,174.2 921.0,173.4 919.8,174.7 919.5,173.0 918.3,176.1ZM934.0,190.1 934.6,194.8 927.6,194.0 929.5,190.0 925.8,186.1 931.7,185.1 935.7,185.9ZM937.3,197.6 936.1,203.7 933.5,198.6 929.9,200.6 932.3,197.2 930.1,194.8 931.3,186.2 933.7,188.1 937.3,188.8 938.4,194.1ZM925.6,189.6 923.9,190.9 923.0,192.6 921.3,193.5 921.8,189.7 923.2,188.3 923.3,185.0 924.2,184.3 925.8,185.1 924.0,188.8ZM943.3,186.1 942.8,189.8 940.1,189.5 940.3,187.6 938.1,187.5 938.3,184.2 938.9,183.0 941.2,183.4 942.2,181.1 942.4,185.5ZM949.0,194.9 946.9,198.9 954.4,199.7 957.3,195.1 960.2,196.8 961.5,188.8 962.2,182.4 959.2,184.8 956.0,182.7 951.6,185.4ZM945.8,183.8 945.5,185.1 944.8,186.1 943.8,186.7 943.4,185.4 943.8,183.6 944.5,182.4 945.1,179.3 946.0,179.9 946.3,181.2 945.8,182.9ZM924.0,215.3 925.7,219.3 920.5,221.0 913.5,220.5 918.2,212.7 919.8,210.1 925.4,203.9 928.6,210.6ZM911.5,197.6 913.2,199.2 917.9,201.5 920.5,197.5 918.2,194.5 917.4,193.2 914.2,191.9ZM951.3,218.5 951.7,230.1 943.5,229.8 944.0,222.4 943.1,220.3 943.8,217.3 940.6,208.7 948.2,215.7 950.6,215.6ZM957.4,232.9 955.4,233.3 955.3,234.9 953.9,234.2 952.0,235.4 952.2,233.9 950.5,232.0 953.0,231.8 954.7,228.7 956.0,228.4 956.2,232.3ZM930.8,214.6 929.9,217.6 929.6,217.3 929.5,216.4 931.0,211.6 931.9,208.7 931.2,211.8 931.5,211.3ZM971.0,208.7 967.4,217.6 970.1,215.6 974.1,208.7 978.7,202.0 975.2,200.1 971.0,203.8ZM985.7,201.3 986.2,204.1 984.0,202.7 983.6,202.5 981.8,199.9 982.2,197.7 983.7,196.4 987.2,196.6 985.8,199.3ZM1000.8,220.1 996.2,225.5 992.8,224.8 989.6,219.3 993.0,212.4 993.3,206.5 996.9,202.7 999.6,211.8ZM1008.8,222.2 1008.2,225.7 1005.5,226.4 1006.6,222.7 1005.9,219.4 1007.7,217.5 1009.3,220.7ZM984.0,203.6 983.9,204.8 983.0,205.9 981.4,204.7 981.4,203.0 982.2,201.4 983.3,201.2 984.3,199.5 983.6,201.9ZM977.9,227.1 977.7,230.9 987.0,233.8 986.7,227.7 985.4,224.9 983.1,219.8 981.1,224.9ZM973.8,233.1 974.1,234.8 971.6,236.2 969.5,234.7 968.9,233.5 965.6,231.9 968.9,229.4 973.1,229.9 974.6,230.5ZM1011.3,184.1 1010.8,185.2 1009.9,186.6 1008.5,188.8 1009.1,184.6 1009.1,182.7 1008.9,181.9 1009.7,180.2 1011.4,177.3 1011.8,180.4 1013.3,183.3ZM1021.6,175.8 1019.4,176.3 1017.6,179.5 1017.7,176.2 1016.7,174.1 1017.8,173.5 1018.9,171.1 1019.3,173.3 1020.7,173.0ZM1039.8,194.5 1034.9,195.5 1030.7,193.0 1023.0,194.1 1027.5,189.6 1026.0,184.9 1031.9,181.8 1032.9,190.2ZM1043.4,191.2 1043.6,192.8 1041.8,193.1 1041.3,192.6 1040.4,191.8 1039.4,189.8 1041.3,189.3 1040.5,187.0 1042.4,189.2 1043.1,188.8 1044.6,189.9ZM1056.5,184.9 1054.2,185.8 1051.6,189.5 1047.0,193.2 1043.1,186.4 1044.0,178.8 1049.6,173.3 1053.3,177.8 1062.3,179.1ZM1066.5,180.1 1061.4,178.5 1057.1,183.6 1056.7,178.6 1054.9,173.3 1059.8,175.8 1063.9,171.3ZM1046.2,173.0 1045.3,174.4 1044.3,175.4 1043.0,174.3 1041.1,173.2 1042.8,171.4 1043.7,167.7 1044.7,166.8 1047.8,170.4ZM1035.9,164.6 1039.5,164.4 1038.1,168.6 1043.7,166.9 1045.2,164.9 1049.5,159.2 1041.8,160.9 1041.8,157.2 1037.5,156.6ZM1043.3,153.5 1042.6,154.6 1044.2,154.5 1045.1,155.1 1045.6,154.5 1045.8,153.8 1048.0,152.6 1046.9,152.1 1045.1,152.5 1044.2,150.2 1043.4,151.7 1042.6,152.3ZM1020.2,219.6 1017.3,226.6 1015.3,227.3 1016.0,222.2 1015.3,215.7 1017.4,212.8 1018.6,216.5 1020.4,217.3ZM1024.7,216.1 1025.0,219.2 1026.2,219.6 1028.1,217.4 1028.3,215.5 1028.8,213.7 1027.4,214.3 1026.6,212.7ZM1038.4,213.3 1034.6,218.6 1039.2,217.2 1042.3,219.7 1044.0,216.9 1045.8,216.2 1051.5,214.0 1047.6,212.0 1043.6,207.1 1039.9,207.7 1034.2,208.1 1034.2,209.3ZM1048.8,222.4 1047.5,225.2 1046.3,222.0 1044.1,223.2 1045.6,221.1 1045.2,218.4 1047.6,218.5 1047.7,220.7ZM918.3,227.8 919.9,231.1 913.6,233.7 908.9,234.6 905.1,234.9 900.0,231.9 898.0,227.9 905.7,227.7 903.3,225.8 911.1,221.4 908.9,227.0 917.8,225.6ZM910.4,237.0 911.1,238.2 912.4,240.4 914.4,238.6 919.3,237.5 916.1,236.5 914.3,235.4 911.0,233.2 910.9,236.7ZM943.8,231.1 940.6,233.3 941.2,235.7 937.1,236.7 931.3,236.9 930.3,233.3 932.3,231.1 932.6,228.0 935.7,230.2 938.0,229.8 946.7,230.4ZM929.1,231.3 928.9,232.2 925.8,231.9 924.8,233.5 922.7,231.4 922.8,230.4 924.2,229.9 925.0,228.9 925.4,229.5 926.3,229.8 927.2,230.0ZM937.4,237.5 936.9,239.8 935.6,239.5 933.2,238.9 932.4,237.7 933.2,237.5 932.9,236.0 934.9,236.7 936.7,236.5ZM1062.1,161.3 1061.2,163.3 1060.3,162.4 1059.3,160.3 1061.0,157.9 1061.7,156.4 1062.7,157.9ZM1064.8,163.5 1066.4,163.5 1066.5,164.7 1067.9,165.6 1070.0,165.1 1068.6,163.3 1070.6,162.2 1069.6,161.6 1069.4,160.1 1067.7,161.6 1066.9,159.7 1066.3,161.9ZM546.6,251.0 548.1,258.5 547.2,263.7 542.7,264.3 542.0,255.3 541.2,253.3 538.4,252.0 542.5,248.4 543.8,246.5 546.5,239.1 546.9,243.7 550.6,248.4ZM544.8,267.9 544.3,269.7 544.3,269.9 544.0,271.0 545.0,267.6 545.5,266.3 546.0,264.5 546.7,261.9 546.1,263.8 545.9,264.4 545.6,264.9ZM530.9,241.1 530.5,245.5 533.4,243.2 533.6,246.0 535.3,243.3 536.5,238.3 535.3,233.4 533.9,238.4 530.6,238.2ZM553.3,243.7 554.7,245.5 555.2,247.5 556.6,246.4 557.3,251.3 559.1,247.6 560.7,243.4 560.7,239.7 560.9,237.7 557.8,239.8 555.5,238.0 555.0,242.7ZM560.7,247.6 561.3,248.8 560.9,250.7 562.5,247.7 564.1,245.7 562.6,246.0 562.4,246.2 561.9,244.3ZM555.8,251.0 554.3,253.3 553.4,252.0 552.7,251.6 552.2,251.0 552.1,249.4 553.1,247.2 554.0,245.4 555.1,248.6ZM530.7,252.7 530.7,252.9 530.6,253.3 530.1,255.2 533.1,245.0 532.0,248.5 532.9,245.1ZM535.2,253.1 534.5,254.4 533.9,255.2 534.5,253.0 534.3,251.8 535.7,247.7 535.9,248.5 535.5,250.9ZM555.3,287.0 551.9,287.4 549.0,288.6 545.2,287.9 548.4,280.4 552.6,274.9 559.4,275.9ZM550.3,294.5 550.0,299.9 553.6,303.2 556.8,297.3 557.8,297.0 557.9,294.5 556.4,293.9 555.0,291.2 551.2,290.9ZM542.6,273.8 545.3,274.4 545.9,276.1 547.1,275.7 551.5,276.1 549.8,275.0 549.0,272.8 547.9,272.5 547.2,269.1 545.1,270.1 543.2,272.1ZM582.3,264.7 584.1,265.9 586.2,263.9 587.4,264.5 592.8,260.4 588.4,260.5 591.4,254.7 589.3,255.2 585.8,260.4ZM591.5,268.1 592.1,269.9 590.7,268.7 590.2,269.4 590.2,267.9 590.0,266.6 590.8,267.1 591.2,267.2 591.4,267.9ZM506.5,302.9 505.5,306.0 508.4,304.9 511.8,302.0 511.8,298.8 512.4,295.2 509.3,299.7ZM500.1,297.5 501.1,297.9 501.2,298.8 502.3,298.5 502.5,297.2 502.3,297.0 503.0,295.9 501.8,296.0 501.1,296.8ZM539.0,303.7 539.3,305.6 537.9,307.2 533.9,306.2 532.9,303.2 529.1,301.8 533.3,301.7 533.6,300.4 535.9,297.1 535.9,300.6 538.1,300.7ZM532.2,307.9 532.6,309.5 531.2,308.6 529.8,308.3 529.7,306.5 531.3,306.6 533.1,306.2ZM624.3,321.8 632.0,317.4 622.2,333.3 633.6,321.0 642.1,321.0 640.0,317.2 648.8,304.7 649.9,292.6 639.6,306.0 637.2,303.6 634.0,303.9 625.9,309.7ZM658.9,311.5 656.4,318.5 653.5,322.4 662.8,317.4 667.1,317.1 666.1,310.1 673.7,306.5 674.6,301.3 663.8,301.8 663.3,307.7 658.9,308.2ZM648.0,297.8 648.0,297.2 646.4,303.2 645.9,303.2 646.3,300.8 648.5,293.0 650.3,285.4 652.0,281.6 651.6,284.4 649.5,291.7 649.2,293.1ZM636.0,305.7 636.4,308.8 637.2,309.3 638.9,307.4 642.6,304.1 642.4,300.9 641.7,299.9 639.5,299.9 636.9,302.5ZM623.5,326.7 623.7,327.3 620.9,336.4 622.5,333.2 625.8,323.9 628.0,316.8 626.7,319.5 628.9,312.2 627.8,314.9 625.8,319.5ZM610.5,313.7 609.8,316.1 610.2,314.3 610.5,313.1 610.9,311.5 611.1,311.2 611.3,310.4 611.7,309.2 611.0,312.0ZM631.4,309.6 629.9,313.3 633.2,312.6 634.3,311.4 635.6,309.5 638.8,307.4 637.0,307.6 636.4,306.5 633.6,306.9 631.8,305.5ZM659.1,317.0 658.7,320.2 662.9,316.1 664.0,316.2 666.0,310.5 668.0,305.3 664.4,309.0 662.6,310.1ZM676.6,307.3 677.7,310.4 674.8,312.2 671.5,310.9 672.5,308.9 669.8,306.0 670.5,304.4 673.4,303.1 674.9,304.0 678.5,305.9ZM676.3,310.5 674.3,312.3 677.2,311.9 678.0,315.1 678.9,311.9 680.8,311.7 679.1,310.4 679.2,309.4 677.9,309.1 677.1,308.5 677.0,310.0ZM648.1,268.8 652.8,272.0 654.6,276.8 660.4,276.2 666.1,269.3 669.4,260.8 660.7,257.3 655.5,266.1 648.8,265.5ZM644.9,261.6 643.7,265.5 644.0,265.4 644.6,263.5 645.9,258.8 646.7,256.1 645.5,259.5ZM640.7,264.5 640.1,266.9 642.0,265.4 642.2,268.5 644.3,266.7 644.5,265.4 645.3,262.3 644.7,261.3 643.6,260.5 641.8,260.7 639.7,263.1ZM665.8,260.6 668.1,267.0 674.0,269.9 677.6,262.4 680.7,255.8 674.2,257.0 671.6,257.8ZM689.2,257.3 686.9,257.8 685.5,258.6 683.9,261.6 682.3,258.2 684.3,255.6 684.3,251.2 685.0,252.4 686.9,251.9 687.6,255.0ZM684.4,260.6 683.1,261.1 682.0,263.3 681.9,259.7 683.1,257.5 684.6,254.1 685.3,256.3ZM633.7,262.0 635.8,273.5 640.5,269.6 645.2,266.6 644.2,263.0 642.7,256.2 639.7,260.1ZM645.3,276.0 645.3,278.1 644.7,277.4 644.1,279.4 643.3,277.0 642.6,276.5 643.2,275.2 643.8,274.7 644.5,272.9 644.8,274.5 645.7,274.4 645.4,275.3ZM615.0,266.2 616.6,266.4 616.8,270.5 617.7,267.8 619.3,264.0 621.5,260.8 619.2,260.0 617.7,258.4 617.0,262.1ZM620.0,257.6 619.3,259.3 617.8,259.1 617.7,257.9 617.3,256.4 617.6,254.9 619.7,256.2ZM683.3,308.3 683.2,308.9 684.7,314.0 688.5,307.4 689.0,312.6 691.4,308.5 693.3,304.3 693.7,300.6 693.4,297.1 690.9,300.0 689.2,301.5 687.6,302.4ZM684.3,297.7 683.8,298.9 683.8,297.5 682.8,299.8 682.9,297.9 684.2,293.9 684.4,295.0 684.9,293.5 684.9,295.0ZM688.3,323.9 689.1,325.0 686.3,325.7 685.8,324.6 684.8,325.2 683.8,321.6 685.5,321.1 685.3,319.5 687.0,320.4 687.9,321.7 688.1,322.2ZM680.2,321.3 679.8,322.9 680.2,322.5 680.7,321.5 681.1,320.9 681.6,320.7 681.5,319.8 681.2,319.5 681.3,318.7 680.8,320.2ZM559.3,330.6 557.6,335.8 566.4,332.8 568.0,335.6 570.1,330.2 575.2,329.0 567.7,328.3 567.9,325.5 560.8,328.5ZM574.8,340.9 575.3,340.1 575.2,340.5 575.4,340.0 575.8,338.9 575.9,338.5 576.7,336.4 576.2,337.2 576.1,337.3 576.1,337.0ZM577.2,336.3 578.0,339.3 578.7,340.5 579.8,339.6 580.8,339.2 582.5,335.5 582.6,333.9 582.8,328.2 580.3,333.5 578.6,332.8ZM580.3,346.5 578.6,349.1 580.6,350.6 582.1,349.6 582.5,348.0 582.5,347.1 582.8,346.2 582.7,345.4 582.3,345.4 581.3,344.2 580.9,344.9ZM527.7,348.9 528.0,351.5 532.7,349.2 535.2,349.8 537.4,348.8 536.7,345.2 532.2,344.7 529.8,347.5ZM539.6,350.1 541.1,351.3 538.8,351.8 538.2,350.6 537.0,349.7 537.9,349.2 539.2,349.5 540.1,349.6ZM567.9,349.6 566.8,349.7 565.9,350.5 564.1,351.3 563.2,351.3 564.0,348.4 563.4,347.2 565.0,347.7 564.2,344.7 565.9,344.2 567.0,344.9 568.0,347.4ZM559.8,348.8 559.8,349.5 559.5,349.8 558.6,349.7 558.6,348.9 559.0,348.3 559.0,347.5 560.0,347.3 560.8,347.3ZM621.5,385.0 620.0,385.2 618.4,389.0 618.7,384.5 620.0,371.6 623.2,364.1 624.2,368.8 624.9,372.5ZM642.4,376.4 642.1,376.6 641.3,378.8 641.9,374.6 641.4,374.9 642.4,370.5 643.0,370.4 644.9,365.1 644.4,367.2 643.2,371.5ZM637.4,368.2 633.4,378.4 638.0,376.8 644.6,375.1 648.3,367.7 647.9,362.2 643.3,358.0 638.1,366.3ZM652.5,363.9 652.5,365.3 651.2,367.5 650.0,367.4 650.0,363.7 649.2,364.2 648.7,361.1 649.2,359.7 650.5,361.8 652.0,357.8 652.2,360.5 652.6,361.6ZM606.9,375.9 606.7,376.8 606.0,379.4 605.8,380.0 606.9,376.8 607.7,374.4 608.4,371.5 609.7,367.4 610.1,365.9 608.2,371.9 608.0,372.7ZM598.0,374.8 596.6,374.9 595.5,376.6 594.9,374.8 594.9,372.6 595.9,369.8 597.1,372.0 598.9,371.9ZM598.0,371.7 599.7,372.9 597.2,374.1 596.1,373.3 594.7,374.0 592.6,373.2 591.8,371.1 593.2,370.0 595.4,370.0 597.2,368.3 597.4,369.7 599.9,369.9ZM664.8,380.4 663.4,381.3 658.4,383.9 658.4,381.3 657.9,377.5 659.5,374.9 663.6,373.7 668.7,376.2ZM677.1,381.2 673.7,379.4 673.1,382.0 671.5,381.9 670.7,379.5 671.9,377.6 672.6,374.7 674.3,376.5 676.4,377.9ZM671.0,388.4 672.5,393.9 679.7,392.5 683.4,390.8 687.7,391.8 684.6,387.5 683.2,385.7 680.4,380.6 677.9,384.2ZM687.1,382.9 686.8,384.3 687.3,383.7 687.6,383.5 688.5,382.1 689.7,379.5 688.4,381.1 688.5,378.0 686.9,381.6ZM671.4,385.4 670.6,387.6 671.7,386.0 672.4,386.2 673.7,384.9 673.2,383.9 674.4,382.3 673.3,381.9 672.2,382.7 671.8,382.7ZM592.7,388.4 591.8,392.5 596.9,391.0 600.8,391.8 603.7,388.6 604.4,385.6 598.7,385.9 596.2,387.7ZM589.7,388.7 588.2,389.3 587.6,390.8 586.9,391.4 585.2,389.3 585.8,388.4 586.4,386.7 587.6,385.8 588.1,387.9 588.2,388.7ZM552.6,385.1 555.7,385.1 555.7,386.6 556.7,386.2 559.7,384.3 558.1,383.4 559.1,382.1 558.2,378.5 556.7,380.3 554.6,382.2ZM552.9,380.7 551.9,380.4 551.3,381.9 551.2,380.1 549.9,380.1 550.8,378.2 551.1,377.7 552.8,378.0 552.4,379.0ZM563.6,379.4 562.8,381.8 563.0,379.1 562.7,378.3 563.2,376.8 563.8,376.7 563.7,377.9ZM579.5,385.5 580.6,389.2 579.7,395.0 583.1,388.4 583.5,386.0 586.9,377.7 583.4,378.8 581.6,379.9ZM586.9,376.0 586.1,378.3 585.0,376.6 584.5,377.2 584.9,374.4 584.6,372.3 585.7,371.1 587.1,370.7 586.8,372.9ZM575.7,397.5 575.2,400.3 575.5,400.3 575.7,401.0 576.5,398.4 577.2,398.2 577.3,396.4 578.3,393.6 577.5,395.0 577.6,393.4 577.6,392.5 576.3,396.3ZM872.9,246.3 871.3,251.7 872.4,251.6 874.6,248.0 874.9,245.6 875.2,243.8 875.1,241.7 874.5,242.3ZM876.6,237.4 875.0,237.9 874.3,239.8 874.1,238.3 874.1,237.2 874.2,235.8 874.3,233.8 875.7,233.1 875.5,235.4ZM866.4,244.7 867.2,245.7 866.7,246.9 867.0,247.4 867.6,246.5 869.6,244.3 868.4,244.3 868.5,242.9 868.1,242.9 867.8,243.1 867.0,244.7ZM877.8,259.1 877.1,262.1 875.7,267.3 876.7,266.2 878.5,263.5 880.0,259.2 880.1,258.0 880.1,257.8 882.5,252.4 881.1,251.7 878.9,255.9 876.5,257.7ZM870.6,269.0 870.8,270.4 871.9,269.6 872.9,269.2 874.0,268.0 873.9,266.1 873.4,264.3 871.9,267.7ZM836.0,255.3 835.6,256.3 834.9,258.5 836.7,258.3 837.6,255.9 838.9,255.6 839.1,254.1 839.2,252.5 838.0,252.4 837.3,251.8 835.8,253.8ZM841.0,260.3 840.0,260.5 838.9,261.3 838.0,260.5 837.4,259.8 838.2,259.0 839.2,258.6 839.3,259.5ZM870.2,268.0 869.7,274.4 866.5,274.0 864.1,272.3 863.3,270.4 865.1,268.4 865.2,267.3 868.2,263.9 870.4,265.0ZM868.9,261.2 868.5,262.8 869.4,263.7 870.6,262.3 870.8,259.7 870.3,259.4 869.3,259.0ZM870.5,270.7 870.8,272.4 870.8,273.8 872.2,272.1 873.8,268.5 872.2,269.5 872.8,266.8 870.9,268.2ZM704.6,292.4 704.9,291.8 704.6,293.0 704.8,292.8 705.2,291.6 706.4,287.3 706.7,286.3 708.1,281.7 707.1,284.4 706.6,286.1ZM714.9,294.0 715.0,295.4 714.2,295.7 712.6,295.7 711.8,294.1 712.4,293.3 713.6,293.0 714.5,291.0 714.4,292.6 714.9,292.9ZM697.7,293.5 696.3,294.5 695.3,295.0 692.3,296.3 690.8,293.9 693.0,290.2 695.4,290.8 699.2,290.6ZM737.2,295.9 736.8,296.4 735.6,298.6 734.4,298.4 733.7,296.4 735.8,294.0 735.9,290.0 736.3,291.7 738.0,289.8 738.4,294.6ZM725.8,299.0 726.5,298.8 727.0,298.6 726.6,300.0 727.6,298.1 728.6,297.9 728.7,296.7 728.4,296.4 727.5,296.6 727.2,297.2 726.8,297.8ZM726.2,292.8 727.2,293.1 728.0,294.7 728.9,292.7 730.2,290.1 728.0,291.8 727.1,291.7ZM833.2,290.3 834.2,291.0 835.0,293.3 836.2,290.0 837.3,289.4 836.3,288.7 837.0,286.2 835.4,288.7ZM838.2,285.1 837.9,286.6 836.9,285.7 835.6,285.8 835.9,284.8 836.2,284.7 836.5,284.1 836.7,283.0 837.9,284.4ZM857.3,319.7 855.9,323.0 855.0,322.8 854.4,319.6 855.3,317.5 855.6,314.9 856.5,314.5 857.7,312.2 857.6,317.4ZM859.2,312.2 859.7,312.0 859.4,312.9 860.3,312.0 860.5,312.8 860.9,311.5 861.0,310.9 861.2,310.4 861.0,310.5 860.8,309.7 860.4,310.1 860.1,310.6ZM863.3,320.3 862.6,322.6 863.0,322.3 863.6,320.8 864.2,320.0 864.3,319.0 864.8,317.4 864.0,319.2 863.9,318.8ZM882.7,327.3 876.2,326.4 874.2,328.9 868.7,331.3 871.5,325.4 863.3,324.0 872.9,321.8 875.7,319.5 877.1,324.2ZM888.5,325.7 886.3,325.4 885.3,325.7 883.8,327.1 882.6,325.7 883.2,324.1 883.6,323.2 884.5,322.9 885.7,321.4 889.4,323.6ZM861.1,338.8 862.5,339.6 860.7,346.5 864.5,339.5 867.4,338.5 865.4,335.1 864.0,336.2 862.1,336.4ZM860.3,346.7 858.6,348.7 858.6,349.3 857.3,348.9 857.1,347.2 855.9,347.3 857.2,346.2 858.0,344.8 859.5,344.4 859.9,345.2ZM871.0,342.7 872.0,344.3 873.0,344.5 873.8,343.6 876.0,343.3 874.4,341.4 872.7,341.2 872.5,341.5ZM882.0,344.0 878.1,349.2 884.0,354.2 890.5,347.3 894.0,345.8 891.2,340.3 888.8,339.0 884.3,335.0 881.8,336.9ZM877.3,352.7 874.3,355.9 877.1,355.0 877.5,357.7 880.5,355.0 882.9,353.9 883.1,348.9 882.3,348.6 878.9,347.0 878.4,350.6 874.6,351.8ZM877.9,345.0 876.8,348.1 874.0,348.7 873.0,346.1 874.6,344.1 874.0,342.7 875.6,343.4 878.0,343.5ZM880.4,361.8 879.4,362.6 877.6,365.8 874.6,364.3 874.9,359.1 872.1,356.7 875.0,357.0 875.6,354.7 878.0,354.0 881.2,354.0 878.2,357.8ZM876.1,349.0 875.7,350.5 875.5,350.9 875.3,350.2 875.7,348.8 876.1,348.1 876.7,345.8 876.9,346.1 876.4,347.8ZM887.4,323.2 889.7,324.3 890.0,326.4 892.0,324.5 892.5,324.2 896.4,323.2 896.2,319.7 893.5,319.2 894.1,314.6 891.0,318.0 889.3,318.2ZM896.4,312.3 895.5,313.1 895.2,312.8 895.0,313.1 893.9,314.6 893.8,313.6 894.3,311.8 894.2,310.6 894.6,310.1 895.2,309.7 896.2,310.4 895.6,312.1ZM884.4,319.4 883.4,321.6 884.6,321.1 886.7,321.0 886.0,319.3 885.8,318.1 885.4,317.8 884.0,317.7ZM845.0,323.5 843.2,323.6 838.9,326.3 836.5,323.3 837.0,321.3 836.8,319.4 845.2,321.2ZM854.4,319.5 855.8,321.0 853.7,320.3 851.2,319.8 849.8,319.3 851.9,318.7 852.4,317.2 853.6,318.2 854.9,318.9ZM818.6,319.5 816.2,322.0 819.7,320.4 819.0,321.5 821.5,321.3 825.3,319.4 823.0,318.3 822.3,317.7 821.9,317.6 820.2,318.0 818.7,317.9 817.1,318.6ZM815.8,319.6 816.1,320.2 813.7,320.7 812.7,320.4 810.8,320.6 810.6,319.4 810.4,318.7 811.2,318.5 812.4,318.5 813.3,318.2 814.5,317.9 814.0,318.8ZM770.3,332.9 771.0,332.0 770.8,334.5 773.3,330.5 774.6,327.8 774.4,325.0 773.7,325.5 771.7,329.9ZM758.1,334.3 758.5,334.6 759.4,334.2 761.4,333.0 760.3,332.7 760.0,331.7 758.9,332.3ZM795.5,339.1 795.1,342.6 794.5,339.3 793.1,340.1 793.7,336.9 794.8,336.1 796.0,332.8 796.5,335.6ZM798.5,340.7 798.0,341.3 798.0,342.2 799.1,341.8 800.2,341.6 800.7,341.9 800.1,340.4 800.8,339.6 800.3,339.2 800.0,338.4 799.4,339.3 798.9,340.0ZM790.0,332.8 790.4,333.8 790.0,335.0 791.0,333.5 791.8,333.7 792.3,333.1 792.6,332.3 791.5,332.1 791.3,331.9 791.0,332.3 790.7,332.4ZM784.0,355.4 783.2,360.1 780.5,367.2 786.8,362.6 790.5,358.3 794.3,355.2 790.7,352.1 788.3,350.0 787.9,346.3 785.0,353.6ZM800.9,361.7 800.6,361.3 799.8,363.6 799.9,362.4 800.3,360.6 801.2,357.2 801.0,358.7 801.5,357.6 801.2,359.4ZM787.0,370.6 785.9,373.1 785.8,374.0 786.7,373.0 787.9,372.2 788.8,369.6 788.6,368.7 789.8,364.4 789.2,364.9 788.2,366.6 787.2,368.4ZM795.6,372.0 794.4,377.5 789.8,377.6 785.6,373.1 786.0,369.7 790.7,362.1 793.6,363.6 797.7,368.5ZM787.5,385.5 786.5,388.4 784.3,388.1 784.5,385.4 785.3,382.8 785.9,382.6 786.2,383.4 788.1,381.6ZM797.0,383.9 797.3,385.2 796.0,386.1 794.6,384.8 794.4,382.7 796.4,382.3 797.7,381.1 798.2,382.7ZM809.0,390.1 807.9,393.4 806.0,396.4 803.1,395.6 800.7,391.5 802.5,388.5 802.0,383.3 805.8,385.8 809.4,384.2 807.9,386.9ZM792.1,385.4 792.6,385.2 792.2,386.9 793.1,384.7 793.6,383.7 794.2,382.0 793.6,382.7 794.4,380.0 793.7,381.9 793.2,383.2ZM778.2,383.9 777.0,384.0 776.5,383.0 776.0,382.2 776.5,379.2 778.0,376.8 778.4,378.5ZM777.1,375.9 777.0,376.9 777.7,377.9 775.8,378.3 775.2,378.0 774.9,376.7 775.2,376.2 773.2,375.2 775.4,375.3 775.8,374.0 776.3,375.5 777.1,375.6ZM867.6,373.8 867.5,377.5 864.0,381.4 862.9,374.1 864.6,369.9 866.5,371.9 870.3,369.4ZM856.8,369.4 857.6,371.9 855.2,373.4 853.5,371.3 854.2,369.9 852.7,368.6 853.6,366.6 854.7,367.3 856.4,367.5 857.5,368.7ZM860.8,367.0 859.8,368.1 860.2,369.5 862.4,369.1 863.7,369.2 864.7,366.1 865.6,363.7 863.2,365.6 863.1,363.6 862.5,364.5 860.2,366.0ZM889.8,380.2 888.6,381.7 888.3,392.0 882.6,388.8 883.6,380.2 883.0,376.0 885.0,370.7 887.9,374.2 889.0,376.0ZM882.7,363.7 881.6,367.0 884.0,366.7 884.6,368.2 886.6,363.0 885.6,362.6 885.2,361.5 885.5,356.4 882.1,360.8ZM864.0,387.3 861.2,393.1 857.1,389.5 856.3,392.7 848.5,390.6 847.8,388.7 851.0,385.1 851.8,381.4 856.1,378.5 860.5,380.4 859.2,385.0ZM865.4,391.9 865.3,392.9 865.8,391.8 866.0,391.5 866.2,391.6 866.6,390.4 866.7,389.7 866.8,389.2 866.6,389.4 866.5,389.2 866.0,390.0ZM769.2,318.6 768.0,318.8 766.4,319.2 764.1,318.8 764.8,316.9 765.8,315.4 768.0,315.4 767.8,317.0ZM769.7,321.5 769.3,322.3 768.2,322.4 768.0,321.2 768.3,320.6 768.6,320.6 769.2,320.2ZM765.9,320.5 765.4,321.5 764.8,321.8 763.8,322.3 763.0,320.7 763.9,319.9 763.7,319.5 764.5,319.8 765.8,318.9ZM971.7,242.5 969.7,247.7 972.8,245.2 976.3,242.6 980.1,239.8 980.4,237.8 979.1,233.0 973.6,236.8 969.8,238.0ZM952.5,236.6 955.4,238.7 958.4,238.2 961.8,240.2 965.9,237.9 966.0,235.3 961.4,235.5 960.4,232.1 956.1,234.0ZM958.2,242.4 958.1,243.3 957.2,244.1 954.7,243.8 952.1,242.6 954.6,241.4 955.5,239.7 957.5,239.1 959.9,240.6ZM951.1,243.3 950.1,244.1 949.5,244.2 949.2,243.2 948.6,243.1 949.3,242.4 949.3,241.7 949.6,242.2 949.8,242.2 951.0,241.8ZM923.4,252.1 921.4,256.5 918.2,261.1 916.2,258.6 915.9,253.8 915.3,253.0 914.8,246.4 917.5,246.5 920.6,243.4 922.4,241.0 922.8,246.1ZM911.5,248.6 911.5,250.0 910.3,250.5 908.0,250.3 907.7,247.6 909.5,245.6 912.1,246.8ZM906.6,273.4 905.8,276.7 903.1,279.3 904.2,273.5 903.8,269.4 906.0,267.8 906.2,269.5 908.0,267.4ZM913.0,266.4 913.3,267.6 915.0,267.9 915.7,271.3 916.9,269.7 919.8,268.9 917.5,266.0 916.7,265.9 916.2,263.9 914.1,265.1 912.4,264.7ZM1017.3,242.6 1018.3,245.2 1020.9,246.5 1024.3,240.0 1023.2,238.8 1023.3,235.0 1018.8,237.9ZM1026.3,247.2 1025.3,248.7 1029.3,249.0 1033.7,250.3 1033.7,249.0 1033.4,245.8 1031.4,245.6 1029.3,245.0 1027.4,245.4ZM1007.1,262.3 1000.8,270.3 1007.2,268.9 1009.0,270.4 1013.8,266.5 1022.2,264.3 1021.0,257.1 1014.4,257.5 1011.9,257.7 1009.7,259.3 1000.9,256.8ZM999.4,270.8 999.4,270.9 999.3,271.4 1000.0,269.6 1000.4,268.1 1001.1,265.8 1001.3,264.9 999.9,269.2ZM1026.9,272.5 1032.6,276.7 1033.9,285.0 1037.2,283.5 1042.6,280.0 1043.7,267.7 1038.0,263.4 1032.8,262.0 1031.3,270.1ZM1044.3,277.1 1043.4,278.7 1045.4,277.9 1047.7,278.7 1046.5,276.7 1047.1,274.6 1045.3,275.4 1044.5,275.6ZM1056.4,260.2 1053.5,263.9 1052.5,268.6 1048.3,278.6 1045.0,267.6 1043.7,261.6 1044.2,256.3 1047.7,251.9 1051.4,257.7 1058.5,256.0ZM1037.4,252.3 1038.1,255.1 1039.1,257.8 1041.0,252.0 1041.9,249.8 1041.8,245.9 1040.1,249.8ZM1067.7,259.7 1067.0,264.4 1064.0,264.0 1063.4,263.0 1061.5,259.6 1062.6,256.9 1065.5,257.8 1067.4,256.3ZM1082.5,283.5 1075.3,281.4 1072.3,287.4 1071.4,282.8 1066.3,283.5 1068.0,274.3 1071.9,269.1 1077.0,271.0 1080.3,275.9ZM1078.2,291.3 1078.0,292.3 1078.3,293.7 1079.2,292.2 1079.6,291.2 1080.0,289.7 1079.4,289.6 1078.7,290.6ZM1087.3,278.3 1086.4,279.1 1085.0,281.1 1085.0,279.0 1083.6,278.6 1085.5,277.6 1086.1,274.2 1087.0,275.5 1087.5,276.2ZM1062.8,303.2 1063.7,305.9 1065.8,306.3 1073.5,302.8 1071.8,297.4 1068.0,298.6 1065.4,297.6ZM1080.2,303.8 1078.2,304.1 1076.4,306.3 1074.9,305.6 1073.7,303.6 1075.4,302.4 1075.1,300.6 1076.8,302.3 1077.8,300.2 1077.7,302.7ZM1071.4,310.4 1072.9,311.7 1074.5,312.2 1075.9,312.7 1075.8,311.0 1077.8,311.1 1078.0,309.2 1076.1,309.4 1076.7,308.3 1075.3,309.8 1073.0,309.9ZM1075.9,295.9 1075.9,297.7 1074.9,301.4 1076.6,297.0 1078.2,293.3 1077.7,292.9 1077.6,291.8 1077.2,292.4ZM1075.3,288.6 1075.4,288.9 1075.2,289.6 1074.1,290.4 1073.8,290.7 1073.7,289.2 1073.6,288.4 1074.3,288.3 1074.4,287.8 1075.0,286.5 1075.4,287.9 1075.6,288.0ZM1020.1,308.2 1014.9,310.2 1016.7,313.4 1008.6,310.3 1003.2,312.8 1000.3,309.6 1005.2,307.5 1007.0,305.9 1010.6,301.5 1014.3,307.0 1020.9,304.5ZM1036.3,305.1 1035.7,305.5 1035.8,307.9 1033.4,305.0 1032.1,305.2 1031.2,304.7 1027.6,302.7 1031.0,303.0 1032.1,302.1 1032.7,301.8 1035.4,304.0 1037.8,304.7ZM972.1,320.9 982.6,323.2 977.4,327.6 983.5,332.5 989.4,328.5 987.7,322.5 993.8,319.4 992.3,314.9 989.4,313.5 984.7,310.9 978.1,314.1 981.2,319.2ZM1005.4,315.7 1003.6,318.6 1001.5,320.4 1000.9,320.5 999.4,317.1 995.0,315.7 995.9,312.6 999.7,312.4 1003.6,314.2 1003.7,314.9ZM971.9,308.8 973.5,308.8 972.1,310.8 973.5,310.8 975.5,309.1 975.2,307.3 977.0,305.0 976.5,304.2 975.5,303.5 974.6,305.7 973.9,307.1ZM969.1,306.0 968.8,307.0 969.3,305.8 969.4,305.9 969.4,306.2 969.7,305.2 969.7,304.8 970.2,303.5 969.8,304.4 969.8,304.1 969.7,304.5 969.5,304.7ZM969.7,305.6 970.7,306.5 970.2,307.3 969.1,306.0 968.8,306.1 968.2,305.9 967.9,305.0 968.2,304.8 968.9,304.7 969.2,305.1 969.8,305.3ZM1021.4,318.0 1021.8,318.9 1022.6,321.4 1024.0,317.9 1024.8,315.9 1023.9,315.1 1020.3,316.1ZM1027.0,319.9 1027.1,320.5 1027.7,320.5 1028.3,321.4 1029.2,320.8 1029.8,320.1 1029.9,318.9 1029.9,317.5 1028.9,317.8 1027.7,318.7 1026.9,319.1ZM993.8,334.1 992.3,334.2 991.9,334.7 991.6,332.9 991.5,330.7 992.8,331.5 993.4,332.0ZM981.0,332.8 981.0,334.2 983.3,334.1 983.9,333.3 985.9,332.9 985.7,332.3 986.9,331.2 984.9,331.5 983.8,331.7 982.2,331.7ZM987.8,328.8 987.5,329.8 987.8,328.7 987.7,329.0 987.6,329.2 988.0,327.7 988.2,327.1 988.3,326.8 988.6,325.8 988.5,326.3 988.2,327.6 988.0,328.1ZM983.3,343.9 978.8,347.4 983.3,350.3 988.5,347.5 992.7,350.2 994.2,343.5 992.7,340.3 990.9,337.7 984.5,341.8 980.2,341.6ZM974.5,343.4 975.0,343.5 974.5,345.7 975.6,344.4 977.0,345.1 977.1,342.6 979.3,340.8 978.0,340.6 976.4,341.5 975.7,342.0 975.1,341.0ZM976.1,340.0 975.3,342.2 976.5,341.2 978.3,341.6 978.6,340.3 980.5,338.3 978.7,338.8 978.6,336.5 977.2,337.3 975.6,338.2ZM1024.0,350.2 1020.3,359.3 1025.0,351.0 1026.1,352.1 1026.5,347.9 1028.2,341.9 1028.1,336.2 1025.9,344.3ZM1017.0,334.7 1014.9,335.8 1012.4,338.9 1009.3,339.3 1010.5,334.3 1011.6,329.5 1014.1,332.7 1018.6,330.5ZM1036.2,334.9 1033.8,335.2 1032.1,336.6 1031.4,335.1 1031.7,334.1 1031.2,332.5 1033.3,332.8 1034.3,333.3ZM1034.9,329.3 1034.8,330.1 1034.1,329.7 1033.7,329.3 1032.8,329.2 1032.4,329.1 1032.9,327.9 1033.7,327.7 1034.1,327.8 1034.9,327.9ZM1036.4,337.2 1038.0,338.0 1038.6,338.2 1039.4,338.1 1040.1,338.0 1040.4,336.2 1039.1,336.1 1038.5,337.0 1037.8,337.0ZM1045.0,345.6 1043.8,349.1 1042.0,350.3 1039.6,347.5 1041.3,345.6 1040.2,342.5 1042.1,341.6 1043.6,344.4ZM1045.7,341.5 1045.1,342.1 1045.7,343.4 1046.2,342.5 1046.8,342.9 1046.8,341.9 1046.7,341.7 1046.8,341.4 1046.6,340.0 1046.0,339.7 1045.6,339.7 1044.9,340.1ZM927.1,327.8 925.9,330.3 924.1,332.1 922.2,330.4 924.0,322.8 927.4,322.1 929.4,320.7ZM909.6,330.7 907.8,334.5 906.9,336.6 909.9,331.5 911.2,332.5 911.4,331.4 913.7,327.3 911.6,328.0 912.0,326.9 911.6,325.2 911.2,324.2 909.9,329.5ZM942.0,332.8 941.4,334.4 941.0,334.0 940.8,332.9 940.9,331.8 941.7,329.4 942.4,329.1 942.1,331.8ZM905.6,320.2 903.8,326.2 904.5,323.9 903.8,326.3 904.5,324.4 905.8,319.9 906.4,318.0 907.4,314.4 907.0,315.3 905.8,319.4ZM913.4,310.8 914.1,311.7 913.0,313.7 911.5,313.9 911.3,312.4 909.5,311.5 908.8,310.7 910.8,309.7 910.5,308.2 912.1,308.1 913.0,308.7 912.5,310.2ZM906.5,329.5 905.9,330.2 905.1,331.1 905.0,329.1 903.7,329.9 904.3,329.1 903.6,326.8 903.9,326.5 905.1,327.4 905.8,325.0 906.2,326.2 906.7,326.9ZM917.5,341.0 917.7,340.3 916.9,343.2 917.5,341.0 918.8,336.8 920.2,332.0 919.7,333.7ZM927.9,340.3 926.9,342.3 926.5,340.4 926.1,339.8 925.2,338.6 926.3,337.3 927.2,337.2 928.6,337.0ZM905.3,342.4 903.3,342.4 902.5,343.0 900.7,341.6 902.6,340.0 903.2,336.5 904.9,339.2ZM907.3,345.1 906.9,346.1 907.3,346.5 908.1,346.5 908.7,346.1 908.7,345.3 908.3,344.8 908.6,344.1 908.0,342.8 907.8,344.3 906.9,344.3ZM926.5,366.6 917.9,366.3 916.1,369.9 904.7,366.0 896.0,360.7 906.7,359.6 910.0,358.8 920.7,358.5 925.4,362.7ZM899.2,367.2 890.9,368.4 887.2,367.1 881.5,366.4 877.2,364.5 884.8,363.6 890.5,363.8ZM926.9,357.3 925.5,359.8 926.1,360.7 927.8,357.6 929.3,354.8 928.1,355.3 930.2,351.2 929.1,352.7 927.7,354.9 927.0,356.6ZM936.3,377.5 933.8,382.3 932.6,376.7 931.8,371.9 932.4,367.3 934.5,367.7 937.2,369.5ZM944.1,377.3 947.3,377.3 951.4,377.0 953.2,379.7 956.7,380.0 959.5,378.5 959.2,376.1 956.0,375.0 953.6,374.6 953.5,373.2 951.0,373.2 948.7,374.8ZM914.1,387.2 915.6,387.5 915.8,389.0 918.1,385.0 918.5,383.6 920.6,379.6 918.6,379.5 917.1,383.5ZM902.0,384.3 906.7,386.0 911.9,389.7 912.7,384.6 918.1,379.7 908.6,380.3 902.4,382.2ZM899.0,381.7 897.3,382.2 896.0,383.1 894.5,382.8 895.4,380.0 893.4,378.4 894.5,376.6 897.8,378.4 897.8,380.1ZM894.4,376.6 895.8,377.4 896.2,377.5 897.1,379.2 898.8,378.0 900.8,376.4 900.7,375.9 899.6,374.4 900.2,373.7 896.8,375.1 896.4,374.4 894.9,376.5ZM966.3,366.4 966.9,367.7 969.6,371.1 970.3,367.6 972.7,366.6 976.0,365.3 971.6,362.7 970.2,363.3 965.6,363.8ZM954.2,365.2 956.7,366.0 959.5,366.6 961.7,365.6 959.3,364.4 958.1,364.3 954.4,362.8ZM996.3,369.3 995.6,377.9 987.2,375.6 982.0,369.5 987.7,365.3 994.7,359.4 997.2,366.8ZM1021.7,370.0 1021.5,372.2 1017.2,371.3 1013.7,371.7 1011.6,370.6 1011.5,366.9 1016.4,364.3 1018.9,366.5 1020.3,368.7ZM992.8,354.7 992.8,355.1 991.8,359.1 993.6,354.0 995.6,350.2 994.2,351.9 994.1,351.2 993.5,350.6ZM975.7,379.0 973.8,382.9 977.9,382.6 981.8,380.6 986.1,379.9 985.3,376.6 982.6,376.6 978.8,375.8 974.8,375.9ZM974.1,383.8 973.6,384.9 972.4,384.0 971.7,383.2 970.6,381.7 972.3,380.6 975.5,383.1ZM973.1,379.1 970.9,379.6 969.3,381.0 968.6,378.9 967.7,377.7 968.7,376.9 971.4,378.7ZM1006.3,386.7 1005.2,390.1 1006.5,390.1 1007.3,393.6 1011.5,387.3 1012.4,386.3 1012.2,379.2 1009.6,381.0 1006.9,381.3 1005.2,384.3ZM1017.2,382.8 1016.9,384.2 1015.6,386.4 1015.0,383.8 1015.0,381.0 1016.1,381.8 1017.0,381.4 1018.6,380.7ZM1016.4,379.9 1016.2,380.5 1016.2,380.4 1015.5,382.7 1015.6,382.1 1016.3,379.9 1016.5,379.0 1017.1,377.0 1017.3,376.4 1017.0,377.6 1017.3,376.7 1016.8,378.4ZM1056.5,379.4 1060.3,383.6 1055.3,383.3 1052.0,381.4 1050.6,383.3 1044.4,381.3 1045.4,374.1 1047.4,373.0 1054.0,373.2 1056.2,376.6 1056.7,376.7ZM1064.7,384.4 1065.4,385.1 1065.9,384.9 1067.1,386.1 1069.7,385.9 1067.7,384.5 1069.2,382.6 1067.5,382.9 1067.4,381.8 1066.1,382.9 1063.2,382.8ZM1076.7,358.6 1075.1,362.6 1072.1,363.3 1069.9,360.1 1065.5,359.1 1069.0,355.2 1071.8,355.1 1074.3,353.8ZM1067.0,367.3 1065.7,367.7 1064.7,366.4 1064.4,366.1 1063.5,364.2 1064.9,363.5 1066.4,364.0ZM1056.3,391.6 1058.8,393.3 1060.9,393.0 1062.5,397.0 1066.8,393.8 1067.5,390.2 1062.2,390.1 1059.1,387.1 1060.1,390.6ZM1061.2,383.3 1060.6,385.1 1060.9,385.6 1062.4,384.4 1062.2,382.4 1061.9,381.9 1061.6,382.7ZM1068.0,392.2 1069.2,391.9 1069.3,393.1 1070.5,392.0 1071.7,391.3 1072.1,389.8 1070.8,390.0 1070.1,389.1 1068.9,390.7ZM1019.0,374.8 1016.6,376.0 1014.4,375.2 1011.8,375.1 1014.3,372.2 1015.4,370.5 1018.9,370.7ZM1008.5,374.7 1009.6,375.5 1010.2,375.5 1012.2,375.3 1013.0,374.0 1010.3,374.1 1009.1,373.3ZM1010.4,371.7 1009.4,372.7 1008.5,374.2 1008.3,372.4 1008.1,371.7 1008.8,371.0 1010.4,370.6ZM524.1,414.3 524.4,417.3 513.5,417.3 511.7,416.2 511.5,412.5 508.4,410.2 512.5,409.5 513.6,407.6 518.8,409.6ZM526.4,417.0 528.0,417.6 527.2,419.8 524.4,418.9 524.7,418.1 524.2,417.2 522.2,415.6 521.5,414.2 524.5,413.7 526.7,413.8 527.7,414.9ZM533.1,420.0 533.0,422.6 534.7,419.4 533.8,424.7 535.9,417.2 538.2,414.7 539.0,410.9 538.9,410.2 537.0,412.1 536.3,411.2 535.6,415.4ZM553.2,413.6 550.4,414.5 549.0,416.7 547.1,417.7 547.5,414.9 545.0,414.8 544.8,414.2 546.9,413.3 547.3,412.9 547.9,411.7 549.9,410.6 552.1,412.5ZM547.6,423.0 546.6,424.0 545.5,425.2 545.2,421.5 546.2,418.6 547.3,420.0 547.3,421.1ZM500.5,406.4 500.9,410.5 504.2,406.3 506.9,404.2 506.4,403.2 505.9,399.9 503.7,403.0ZM503.8,398.1 503.8,399.0 504.3,399.0 505.1,397.1 505.1,396.6 505.5,394.9 504.8,396.9ZM574.2,403.5 577.3,408.9 572.0,415.1 569.1,409.2 563.6,410.0 563.5,408.4 563.5,404.2 566.0,401.7 567.6,401.5 572.0,396.0 575.1,398.4 573.4,402.2ZM578.8,415.0 578.0,418.9 575.4,417.6 574.2,418.4 572.8,417.9 571.3,419.0 570.5,415.9 572.1,413.4 573.9,414.6 575.0,413.2 575.1,413.9 576.7,414.3ZM569.3,429.3 574.3,433.0 580.9,431.7 582.8,427.1 586.5,422.9 581.0,417.4 573.2,420.7ZM582.3,435.8 581.2,439.7 581.6,437.7 582.0,435.8 582.9,432.9 582.7,433.9 583.0,433.4ZM589.1,420.8 588.9,422.1 588.8,424.1 591.1,421.9 592.8,422.0 594.4,420.6 591.9,420.7 591.6,418.7 589.8,418.8 588.6,419.8ZM626.7,407.1 624.0,415.6 624.5,409.9 620.9,414.4 624.2,405.3 627.1,396.0 629.4,396.0 627.4,403.3ZM610.1,419.6 611.5,421.5 614.5,421.8 617.2,421.1 616.9,418.0 613.4,416.1 612.4,418.1ZM626.6,419.6 627.2,421.0 628.6,421.7 630.9,422.0 630.2,419.4 632.4,417.1 627.4,414.5 626.8,417.6ZM657.4,404.1 662.7,410.4 656.9,412.6 649.9,409.9 649.8,406.8 637.4,410.6 641.7,401.8 644.1,396.6 645.7,393.7 650.5,395.2 658.3,400.6 660.0,403.7ZM661.7,416.8 662.4,419.7 659.5,418.5 656.7,419.4 655.7,415.7 658.0,414.1 659.7,414.7 662.2,413.0 662.1,414.3ZM643.6,393.6 642.0,398.3 645.2,394.7 643.3,399.9 647.0,395.5 646.7,393.5 649.7,390.6 648.8,388.0 648.4,386.6 647.4,388.1 645.4,391.4 644.3,391.5ZM674.3,413.2 673.3,415.9 672.4,418.8 671.8,418.8 672.3,416.8 674.0,410.5 675.8,405.5 676.6,402.6 677.1,402.7 674.9,410.5ZM665.2,404.4 665.6,405.4 663.7,408.5 665.6,408.9 667.6,407.4 668.8,404.4 670.1,402.3 668.5,401.7 667.1,401.8 666.0,403.9 665.4,403.5ZM676.2,401.6 675.6,402.5 675.1,402.6 674.3,403.5 674.7,400.4 675.3,399.1 675.7,397.6 676.5,396.3 676.9,397.7 676.0,399.8ZM700.9,428.9 692.8,440.8 686.0,437.2 684.6,432.3 682.4,427.6 687.3,427.1 693.1,427.6ZM692.3,417.3 691.6,419.4 691.0,420.0 691.1,418.3 691.0,415.8 692.1,415.1 692.7,414.6 693.0,415.8ZM697.4,428.0 699.8,428.8 701.0,429.8 703.8,429.9 704.1,424.3 704.2,421.8 703.2,422.4 699.4,422.3ZM663.4,459.3 659.2,463.7 661.8,465.9 667.8,467.3 668.0,460.2 674.1,460.8 675.7,455.9 668.0,456.8 667.3,453.6 663.9,455.2 660.9,453.2ZM661.0,448.5 660.2,452.1 662.2,451.8 665.5,448.9 665.2,446.2 664.0,444.7 661.3,446.5ZM663.2,445.7 662.8,447.5 664.2,447.0 664.4,447.8 665.6,445.5 666.6,445.2 665.7,444.4 666.5,441.7 665.9,442.6 665.3,442.9 664.7,444.4ZM691.2,465.1 691.3,466.4 686.4,467.1 682.1,467.1 681.1,462.2 683.9,456.8 689.2,460.3 692.5,461.3ZM684.1,470.4 681.9,471.8 680.2,472.4 679.0,475.1 675.9,472.8 676.9,471.8 677.9,470.5 677.4,469.5 679.1,466.0 680.9,469.2 684.2,469.4ZM687.9,487.1 685.6,487.3 684.8,488.4 680.8,491.0 683.4,485.1 681.8,481.7 685.6,479.2 687.2,478.3 687.1,483.8ZM686.2,495.8 685.6,497.3 686.3,496.0 686.2,496.7 686.8,496.5 686.9,495.2 688.0,492.8 687.4,493.7 687.8,491.5 687.6,491.1 686.0,494.4ZM692.2,485.8 692.4,486.3 692.1,487.5 692.4,486.6 692.7,486.2 693.1,484.9 693.8,482.6 694.0,481.7 693.2,483.1 693.1,482.9ZM691.1,528.7 689.1,531.3 688.9,532.2 687.3,529.7 686.1,527.3 685.5,526.6 684.3,524.0 683.9,519.6 687.1,522.3 690.3,519.5 690.0,524.3 691.9,523.0ZM692.5,534.4 692.5,535.3 691.4,535.1 690.7,535.9 689.1,535.2 689.5,534.1 687.6,532.8 690.1,533.1 690.3,532.3 690.8,533.1 693.2,531.8 691.6,533.3ZM677.4,556.7 674.6,555.9 673.4,558.9 671.2,560.3 670.6,556.2 671.0,549.7 672.6,546.5 674.3,545.6 678.1,549.0 676.2,552.8ZM669.1,545.7 668.4,547.0 667.7,548.5 668.1,545.9 668.6,543.6 669.3,542.5 669.9,540.7 669.5,544.4ZM682.7,548.5 682.4,549.5 682.9,551.0 683.7,549.1 685.7,548.8 685.0,547.7 685.2,545.4 683.1,545.6 680.7,547.9ZM614.5,512.9 613.9,514.8 613.6,515.6 614.2,513.3 614.7,511.6 615.2,510.1 615.0,511.0 615.0,511.2ZM600.9,513.8 604.0,514.5 604.3,515.2 606.2,515.6 605.9,514.5 608.5,513.0 606.9,513.0 606.6,512.2 604.9,512.3 603.0,513.4ZM619.2,507.0 618.7,508.2 620.4,508.1 620.9,506.7 621.7,505.4 620.3,505.8 619.4,504.6ZM625.1,527.0 624.7,528.6 623.8,531.6 624.3,529.7 625.0,527.1 625.4,525.7 626.1,523.5 626.2,523.1 626.6,521.9 626.2,523.3 625.8,524.5 625.3,526.4ZM619.5,531.5 616.4,530.8 615.5,532.4 614.4,532.3 613.0,530.7 614.8,529.4 614.8,528.0 617.5,527.5 616.9,529.4ZM631.3,532.8 629.6,533.2 628.9,534.8 629.0,533.3 627.7,533.2 628.4,531.7 628.4,529.3 629.1,531.0 629.6,529.9 631.0,530.5 630.2,531.9ZM694.5,547.8 695.6,549.6 693.7,550.8 692.3,554.2 689.7,553.9 690.4,547.8 689.6,545.0 690.9,545.2 692.9,544.0 695.0,538.7 697.0,545.1ZM691.8,539.7 691.5,541.6 690.6,543.4 690.4,541.5 691.1,539.3 690.7,539.0 691.1,536.6 691.8,537.6 692.1,537.6 691.9,538.3ZM684.3,545.7 683.7,548.0 683.5,548.9 684.4,546.8 684.7,545.5 685.2,544.0 684.9,544.4 684.7,544.6ZM718.5,404.1 718.1,407.7 713.3,408.0 707.4,408.4 705.4,404.5 710.9,399.9 715.1,394.8 723.1,400.0ZM730.7,411.0 731.8,414.0 729.4,414.9 727.9,412.0 727.5,410.8 727.8,409.9 728.0,407.6 730.0,407.5 732.3,407.7ZM704.9,438.3 706.6,439.2 707.6,438.5 710.3,434.9 712.8,429.3 712.7,424.8 709.2,431.1ZM701.1,434.9 698.4,435.7 696.6,435.4 695.2,435.1 692.9,433.1 693.9,430.8 693.7,429.1 697.6,429.5 700.6,430.6ZM735.7,426.4 735.5,430.8 737.8,430.9 740.9,433.1 744.4,427.2 746.8,427.5 743.9,424.8 748.3,415.9 744.4,416.9 742.0,417.1 738.9,423.5ZM755.6,420.6 755.2,423.0 753.4,421.8 752.7,421.8 750.0,421.7 750.6,419.9 750.8,418.3 753.0,418.5 753.4,417.5 754.7,417.2 758.4,418.9ZM760.5,415.0 758.7,419.7 758.3,419.7 757.2,419.5 758.5,415.2 758.5,413.9 760.0,409.0 761.1,408.3 760.0,414.5ZM753.0,418.4 753.0,419.6 751.5,418.6 749.0,418.8 750.9,417.8 751.5,415.9 753.5,416.6ZM752.3,414.8 752.2,415.7 752.2,415.6 752.0,416.5 752.4,415.2 752.5,415.1 753.0,413.7 753.0,413.4 753.2,412.7 753.0,413.0 752.8,413.5 752.6,414.1ZM733.1,437.8 732.9,438.5 732.3,440.3 731.9,441.0 732.9,437.5 732.5,438.0 733.2,436.1 733.5,435.0 733.6,435.1 734.5,432.2 733.9,435.0 733.5,437.2ZM737.6,433.9 738.2,433.4 737.7,435.0 738.2,433.9 738.4,433.9 738.7,432.8 739.1,432.1 738.8,432.4 739.2,431.1 738.8,431.4 738.4,432.8ZM736.5,441.2 736.6,441.5 737.2,441.7 737.8,441.8 738.2,441.7 738.2,440.6 738.7,439.8 738.4,439.5 737.4,440.3 737.0,440.7ZM781.2,432.2 782.6,434.9 784.6,442.1 789.8,435.6 791.8,428.9 790.8,421.6 791.0,417.4 786.0,426.9ZM779.1,414.1 777.3,419.0 775.6,420.2 775.9,416.7 774.9,417.0 775.3,414.4 775.0,413.0 776.0,409.4 776.7,408.2 777.2,410.5 778.7,410.1 780.3,410.0ZM777.1,410.2 778.1,410.8 776.4,416.1 779.8,410.9 779.9,410.5 780.5,409.8 783.0,406.9 780.6,405.2 779.0,404.8 777.3,406.3ZM781.2,403.8 781.3,404.4 780.9,405.2 780.9,404.6 780.7,404.4 780.5,404.1 780.5,403.4 780.7,402.1 781.0,403.2 781.1,403.1 781.7,402.2 781.6,403.0ZM809.0,412.4 810.8,415.6 812.1,419.8 813.7,420.6 814.0,415.1 814.9,413.9 817.1,410.7 815.8,408.6 812.9,409.0 810.7,408.1 809.9,411.0ZM815.5,421.3 815.2,422.2 814.8,423.2 814.3,423.5 814.8,421.8 814.7,420.9 815.7,418.2 815.7,419.8 816.7,417.6 816.0,420.2ZM815.6,423.3 815.7,423.7 815.5,427.1 813.8,426.8 812.0,426.8 812.6,423.5 810.7,423.3 811.9,419.2 813.2,418.0 814.5,420.1 815.2,419.5 816.1,422.0ZM797.9,462.2 796.9,466.2 799.2,464.5 800.5,463.9 801.8,461.6 802.3,458.2 800.8,458.0 797.9,460.6ZM808.7,462.3 808.0,463.3 807.3,464.8 806.7,463.2 806.6,462.5 807.1,462.1 806.9,461.3 808.0,460.3 807.9,462.0ZM803.9,465.0 803.1,467.7 804.9,465.8 805.3,465.7 806.6,466.0 805.9,465.1 806.9,463.6 806.8,463.5 807.1,461.5 806.1,461.4 805.8,462.9 804.6,463.7ZM826.0,462.7 824.2,464.0 821.6,465.1 819.8,465.0 816.4,461.2 813.9,460.2 819.2,460.1 821.9,457.1 822.3,460.2 825.8,461.0ZM825.9,464.6 825.3,466.7 825.8,464.9 825.9,464.8 826.3,463.4 826.5,462.9 826.4,463.1 826.1,464.0ZM834.1,425.0 834.1,429.6 838.8,427.2 840.5,427.7 844.9,424.6 839.9,424.7 840.9,420.3 835.6,421.1ZM842.9,420.5 842.5,422.0 841.6,422.1 839.9,421.8 839.8,420.7 839.6,420.1 840.4,419.9 841.2,420.0 841.7,420.0ZM840.1,421.8 841.6,422.1 842.4,422.4 843.2,421.7 843.8,420.6 842.4,420.2 841.1,420.8ZM870.6,423.4 868.5,430.8 870.0,425.0 871.3,420.0 872.3,417.3 874.8,409.1 872.8,416.5ZM881.4,427.9 880.7,431.0 881.7,429.3 882.4,429.4 883.7,426.8 884.6,423.1 883.3,424.4 882.0,425.0ZM881.9,409.8 881.5,412.8 883.0,414.5 884.7,410.2 886.2,410.3 885.7,406.0 886.0,404.1 885.6,402.9 884.7,405.3ZM899.6,399.8 896.3,400.1 897.0,403.8 894.3,403.2 892.0,400.7 893.5,398.7 894.0,398.0 894.9,397.6 896.2,396.5 899.8,397.4ZM895.0,407.3 896.5,407.8 897.1,407.6 898.6,409.9 898.6,408.6 899.5,407.0 899.0,406.2 900.3,404.9 899.9,402.1 896.3,403.2 896.6,405.5ZM874.9,401.9 874.7,406.2 872.7,404.3 870.8,403.6 873.8,398.7 874.8,397.0 877.5,398.4ZM865.0,404.4 864.4,406.3 864.6,406.3 865.2,405.2 865.5,405.3 865.6,404.2 866.4,402.0 866.1,402.8 866.5,400.8 865.9,402.1 865.6,403.4ZM874.3,396.5 874.8,396.2 874.8,396.7 874.9,397.2 875.8,394.9 875.6,394.3 876.1,392.4 875.2,393.8ZM726.3,471.5 723.9,472.8 721.0,473.0 717.2,473.8 717.7,468.3 717.3,461.3 720.0,456.9 725.1,456.4 724.6,460.9 725.0,464.6ZM705.9,473.1 707.4,476.3 704.9,477.2 703.3,477.4 700.2,476.0 702.9,473.0 699.8,472.4 700.8,469.8 702.6,468.0 704.3,468.1 705.7,470.4 707.3,470.5ZM724.1,456.7 723.4,458.8 723.1,459.6 723.3,458.8 723.4,458.1 724.1,455.4 725.2,451.7 725.1,452.5 725.1,452.5 725.3,452.1 724.7,454.6ZM709.6,460.1 708.6,460.6 707.5,463.6 707.4,460.3 708.5,457.9 708.5,455.4 709.5,454.9 709.4,456.2 710.0,457.2ZM719.3,462.6 718.4,464.0 716.9,463.8 716.3,462.7 715.9,462.7 714.7,461.1 716.6,461.8 717.8,461.7 718.8,461.9ZM700.9,458.9 702.0,460.0 701.5,460.8 698.9,460.1 698.9,459.4 698.4,459.2 696.0,457.1 698.7,457.5 697.4,456.0 699.5,456.1 701.3,456.9 703.1,458.3ZM742.2,481.8 747.2,487.7 751.4,487.2 756.3,486.5 759.7,483.1 761.7,473.5 752.8,478.1 746.6,480.0ZM736.2,498.6 740.5,499.3 741.8,499.1 742.8,500.3 750.2,496.0 745.4,495.7 746.0,493.4 741.8,495.8 739.0,495.6ZM756.5,466.4 759.4,474.4 767.9,477.1 776.8,477.9 778.5,474.4 776.3,468.5 778.3,465.1 772.4,463.7 771.3,462.1 764.8,466.5ZM775.6,452.6 776.6,452.1 775.9,455.1 774.9,458.7 776.8,453.8 777.9,451.7 778.5,450.3 777.9,449.8 778.9,446.7 778.4,447.6 777.6,449.3 777.1,448.0ZM776.7,481.6 779.4,483.9 781.6,485.8 783.2,485.1 783.9,484.3 787.9,485.2 785.8,481.8 784.0,480.5 782.6,478.1 780.8,476.8 776.9,481.1ZM737.7,462.6 736.6,467.1 737.6,466.2 738.8,462.9 739.7,461.0 739.4,460.8 739.1,460.7 738.8,459.8ZM734.4,458.5 734.9,459.8 734.0,460.2 733.1,459.6 731.6,459.6 732.7,458.7 731.9,457.3 731.9,456.3 733.3,457.6 733.8,457.6 734.9,457.4ZM732.3,491.7 731.5,494.1 733.7,499.1 738.8,494.7 736.1,490.7 737.1,486.7 735.6,487.2 733.2,486.3ZM726.1,488.6 726.9,489.0 726.7,490.6 727.9,488.7 728.2,488.8 729.7,487.6 729.3,487.0 727.9,487.4 727.3,485.7 727.2,487.8ZM729.4,485.7 728.4,487.7 728.1,487.0 728.2,485.8 728.4,484.7 729.1,482.0 729.5,481.5 729.9,482.7ZM782.5,493.3 783.7,494.7 782.2,497.9 784.3,495.6 785.6,497.5 787.5,493.5 786.1,492.9 786.0,490.8 785.7,490.9 785.0,491.0 783.6,493.2ZM787.2,486.2 787.1,487.8 787.6,487.8 787.8,487.7 788.1,486.5 788.9,485.7 788.4,485.5 788.3,485.1 787.9,485.5ZM741.8,506.5 743.8,507.8 743.2,512.7 743.7,514.8 747.5,511.2 750.4,505.5 751.1,500.7 753.1,493.5 749.8,495.9 746.6,501.9 745.5,503.0ZM756.5,507.0 756.4,511.0 759.1,510.6 764.6,509.4 766.3,505.0 764.2,503.0 761.1,500.9 759.6,504.6ZM762.0,519.2 763.6,517.5 764.8,516.9 765.8,514.9 766.7,510.9 769.1,501.7 767.0,507.2ZM766.7,499.5 763.5,500.6 763.4,502.1 760.5,504.3 760.6,499.6 758.6,499.0 761.1,497.8 762.7,498.1 764.6,496.6ZM817.6,506.2 817.6,508.8 814.7,511.0 814.1,506.4 812.6,508.8 813.6,504.4 811.9,503.5 813.3,497.6 814.4,500.1 815.5,501.8 817.6,502.2 818.1,504.3ZM819.2,499.3 819.0,500.0 819.1,500.3 819.4,499.6 819.9,498.6 819.9,497.9 820.6,495.9 820.7,495.4 820.2,496.8 819.6,498.1ZM825.3,509.5 823.6,511.5 822.0,512.8 820.3,511.3 817.8,510.6 820.4,509.4 821.9,508.6 822.9,509.0ZM825.5,511.8 823.4,512.5 822.3,514.3 819.7,512.6 817.3,511.0 819.2,509.1 820.8,508.5 822.6,506.5 823.0,508.3ZM823.5,505.2 824.1,506.0 823.1,506.9 822.9,506.3 821.4,506.1 822.1,505.0 822.4,504.6 822.1,503.6 822.9,503.9 823.8,503.8 825.1,504.7ZM815.8,510.7 815.7,511.3 816.0,511.4 816.3,510.9 816.6,510.6 816.9,510.1 817.6,509.5 816.9,509.5 818.1,507.0 817.2,507.5 816.5,509.6 816.3,509.5ZM833.8,499.7 833.4,500.8 832.9,501.5 831.8,503.4 831.9,502.5 833.1,498.9 832.9,496.7 834.2,493.2 835.5,491.9 833.9,498.2 834.7,497.4ZM833.7,506.6 833.3,508.1 833.6,507.4 833.9,507.3 834.2,506.4 834.6,505.1 834.3,505.3 834.2,505.4 834.2,504.8ZM845.8,503.8 844.2,505.5 843.9,504.7 843.6,504.6 843.9,503.0 843.7,499.2 844.4,497.4 846.1,499.0 846.4,501.6ZM852.8,506.3 854.7,507.4 852.4,506.6 852.1,508.6 850.8,507.0 850.2,506.5 850.4,505.6 851.2,505.5 850.2,504.1 851.6,503.6 852.9,504.2 855.4,505.3ZM861.3,485.3 861.5,488.9 860.5,487.6 859.3,488.6 859.2,487.8 858.4,483.2 859.0,482.4 860.9,480.1 862.1,480.8 861.9,484.5ZM862.6,493.6 862.6,494.8 862.3,497.5 861.7,494.6 860.4,494.5 861.6,492.8 861.6,490.9 862.3,492.2 862.6,492.7ZM862.8,475.3 862.1,477.2 860.9,478.6 861.6,475.3 861.4,474.9 862.1,470.9 863.0,471.3 863.2,472.0ZM856.4,516.0 856.1,516.9 855.1,520.1 855.6,518.3 856.0,516.8 856.8,513.9 856.8,514.2 857.9,510.4 857.2,512.9 857.4,512.6 856.8,514.4ZM843.6,516.4 845.5,516.9 844.7,518.7 846.9,517.5 849.7,516.6 849.7,515.3 848.0,514.9 845.9,514.6 845.6,516.3ZM858.5,510.9 858.4,512.5 857.6,513.5 857.2,513.1 857.8,510.8 857.7,510.4 857.7,509.5 858.3,508.8 858.8,508.4 859.2,508.4 858.5,510.3ZM871.3,520.2 875.6,520.7 877.0,522.3 878.8,520.3 879.4,517.9 877.5,515.1 873.3,515.7ZM875.4,523.8 875.3,524.6 876.4,524.5 878.5,524.4 878.8,523.3 876.3,522.0 874.6,521.5ZM801.8,529.6 800.4,531.3 805.0,531.7 808.2,529.3 807.3,528.1 806.6,527.3 806.6,526.2 802.9,528.0ZM815.3,530.4 815.7,530.2 815.8,530.8 816.1,530.4 816.7,530.5 817.4,529.6 816.8,529.4 817.4,528.2 816.7,528.9 816.0,529.5 815.4,529.8ZM804.6,525.5 803.7,526.2 803.1,526.4 801.0,526.2 800.4,526.2 800.6,525.2 796.4,524.8 800.3,524.6 799.9,523.2 801.0,522.3 803.8,523.6 803.4,524.8ZM824.2,531.8 824.5,531.9 824.7,532.1 825.5,531.9 825.8,529.6 826.8,527.0 826.2,527.2 825.0,529.4ZM825.7,535.1 827.0,534.9 827.8,534.8 829.2,534.9 828.1,534.1 827.8,533.5 827.3,533.6ZM822.6,534.8 823.5,536.0 824.4,535.8 826.2,536.0 826.4,534.6 826.3,532.8 825.2,532.7 823.6,533.7ZM833.9,545.8 832.4,545.9 832.4,547.5 830.8,547.9 829.5,550.0 829.7,545.1 830.6,542.5 830.3,539.7 832.3,538.4 833.9,538.7 834.3,539.6 834.7,540.7ZM834.8,538.0 834.5,538.7 834.0,539.2 833.3,539.4 832.9,537.9 833.6,536.9 833.7,535.8 834.3,537.0 835.3,536.7ZM847.7,550.5 845.5,553.5 845.1,548.2 842.5,550.1 842.6,545.9 846.1,539.8 847.1,543.0 848.9,544.5ZM849.0,534.7 849.4,535.5 848.3,538.7 846.9,536.1 844.5,537.0 846.1,533.7 846.0,532.1 848.9,531.7 849.3,533.7ZM747.2,551.7 757.1,552.8 756.7,562.8 761.6,566.3 766.5,552.4 772.8,551.1 773.3,540.6 764.9,541.2 758.9,541.1 754.4,548.3ZM759.8,569.0 760.5,572.1 760.1,573.0 755.5,575.0 754.9,571.8 756.1,569.6 753.0,569.8 754.1,567.7 757.0,564.4 758.6,566.5 760.3,565.6 761.9,566.3ZM739.3,554.9 738.6,556.6 738.5,558.1 734.2,563.4 729.2,563.4 727.5,554.0 732.1,553.9 730.5,548.4 737.0,549.2 737.8,550.0 740.4,553.5ZM754.3,549.8 750.5,550.7 747.4,554.4 743.9,552.9 743.3,548.5 745.6,547.5 745.9,543.5 750.3,543.0 750.1,547.5ZM722.8,554.2 723.0,554.7 724.1,555.1 727.2,552.5 726.5,550.1 726.2,548.0 723.9,551.5ZM710.8,528.8 710.4,530.1 709.7,531.1 709.6,529.4 708.4,528.4 709.8,528.4 710.3,527.2 710.8,527.3 711.8,528.1ZM712.7,524.6 712.3,525.2 712.5,525.8 711.7,525.7 711.4,525.2 710.5,525.6 710.6,525.0 710.7,523.8 711.3,524.2 711.2,522.9 712.4,523.6 712.2,524.3ZM703.6,533.3 703.1,534.5 703.1,534.1 702.5,535.3 703.0,533.3 703.5,530.6 703.9,530.1 704.5,530.0 704.5,530.5ZM700.4,534.9 700.6,536.5 700.1,536.7 700.1,535.8 699.7,535.7 699.7,535.3 699.2,534.2 699.4,534.0 700.2,534.0 700.4,533.7 700.8,534.1 701.2,534.3ZM873.5,545.3 871.5,548.8 872.8,549.2 873.8,549.7 875.2,546.7 875.2,543.9 875.5,542.7 874.8,541.3 873.8,544.5ZM883.0,544.4 881.8,544.6 881.6,546.2 880.9,545.8 880.7,544.2 879.1,545.2 878.6,543.8 879.5,542.9 879.9,541.6 881.1,543.1 882.1,542.9 882.8,543.1ZM884.6,537.1 883.0,541.9 883.2,542.4 883.4,543.0 885.1,537.7 886.0,536.4 887.5,530.7 887.4,530.1 885.7,534.3 884.9,536.5ZM892.5,536.6 892.1,537.2 891.8,538.3 891.6,537.7 891.4,536.8 891.3,535.8 891.5,535.1 892.1,535.4 892.8,535.2 893.0,536.1ZM857.2,559.3 857.1,562.2 861.0,565.1 865.7,562.9 869.7,559.4 872.5,557.3 869.5,556.0 869.3,553.9 863.8,556.4 859.5,554.6ZM858.0,565.3 859.1,566.2 857.0,566.0 856.1,566.4 853.8,565.7 855.8,565.0 856.4,563.7 857.0,564.7 859.6,564.7ZM853.0,563.9 854.2,566.1 858.6,566.1 859.2,564.6 859.4,563.7 858.8,560.9 854.3,562.7ZM778.5,546.7 778.5,547.0 776.9,547.8 775.8,549.2 775.4,548.6 774.7,546.7 774.8,545.9 773.0,544.0 775.4,544.1 777.1,542.9 778.8,543.5 777.5,546.1ZM782.4,543.7 781.6,544.3 781.1,544.1 780.2,544.2 780.7,543.2 781.2,542.9 782.2,542.0ZM916.9,404.7 910.4,406.8 907.6,415.8 903.5,411.7 901.4,408.6 901.0,405.7 900.1,403.1 903.8,402.6 905.3,399.2 908.1,398.7 916.8,402.3ZM901.1,396.3 900.8,397.3 900.5,396.9 900.3,396.6 899.9,396.0 900.2,394.9 901.5,389.1 902.4,390.2 901.6,393.5 901.9,394.7ZM929.6,409.6 927.0,409.7 926.5,414.3 923.4,413.9 918.5,408.4 917.6,404.2 915.6,399.6 926.3,398.0 929.6,399.9 928.0,406.1ZM929.8,392.8 929.6,393.4 928.8,394.2 927.6,395.0 927.5,394.1 926.3,392.5 927.7,391.7 926.8,390.3 927.6,389.2 929.2,388.9 931.0,390.3 930.0,391.2ZM941.8,399.7 940.9,406.0 936.8,402.1 935.8,399.4 933.8,396.1 937.5,393.8 940.4,398.1ZM940.5,427.0 934.2,429.1 932.6,427.8 929.5,426.0 925.0,420.4 935.4,417.6 938.0,423.4ZM919.5,426.2 919.6,427.3 917.7,427.8 915.9,427.6 915.7,424.9 915.0,423.3 917.4,422.5 919.0,424.4 919.4,425.0ZM952.7,418.6 949.5,418.3 946.9,419.8 944.4,417.9 946.9,416.7 947.8,416.8 951.4,414.9ZM906.8,433.7 906.5,435.4 904.8,438.1 904.0,431.8 905.8,429.7 906.7,426.5 907.8,424.3 907.3,430.8ZM903.3,435.8 900.6,437.0 898.0,436.3 896.5,435.8 894.3,434.4 897.4,433.6 899.1,434.8ZM915.6,437.0 916.0,437.6 917.4,435.4 917.7,435.2 918.3,435.8 919.4,434.6 919.8,432.3 919.0,432.6 918.7,432.8 918.1,432.2 917.6,434.3ZM947.6,448.7 945.6,448.8 945.6,452.2 941.7,451.3 939.5,450.3 942.4,447.7 941.5,446.1 939.4,443.3 943.0,445.5 945.6,445.1 948.4,443.2 952.0,447.8ZM953.7,443.4 952.3,443.6 951.2,444.6 951.2,443.8 952.0,441.4 952.2,440.0 952.9,441.1 953.2,442.0ZM931.2,453.5 931.1,453.7 930.4,454.5 930.5,453.3 930.8,450.6 931.3,450.4 931.3,453.0ZM938.3,465.7 935.7,472.4 936.6,473.7 940.3,463.1 941.1,460.9 941.2,459.0 942.5,454.3 939.1,461.6ZM927.3,471.6 924.7,472.0 923.4,473.9 922.6,471.4 922.2,469.2 924.3,467.7 927.5,468.9ZM950.5,457.0 950.8,457.1 950.8,458.5 951.3,457.6 952.1,455.3 953.1,452.8 953.6,450.8 952.7,451.4 951.5,454.7ZM965.9,448.1 964.3,452.4 963.5,450.4 962.8,449.5 961.0,453.9 960.5,449.0 960.7,448.2 962.2,444.8 962.9,445.5 963.5,441.5 965.0,443.8 965.7,444.4ZM968.4,449.1 967.8,450.6 966.9,450.3 966.7,448.9 966.2,447.9 966.7,445.6 967.6,447.3ZM919.4,448.4 918.2,452.2 919.2,449.0 919.5,448.0 920.0,446.4 921.0,443.0 920.6,444.2ZM925.0,443.8 924.5,444.9 923.3,444.5 922.0,445.5 920.4,443.0 922.2,441.5 923.6,441.3 925.3,442.0ZM915.6,451.0 914.7,451.6 915.8,451.9 916.9,453.0 916.7,451.1 916.9,451.2 918.5,450.3 916.7,450.1 916.4,449.9 916.0,448.9 915.1,449.7ZM980.8,457.2 977.9,457.7 977.1,462.4 973.7,459.3 975.2,455.1 975.4,454.3 974.6,450.5 977.2,453.7 980.0,452.8ZM965.0,462.9 966.3,463.3 966.9,464.2 967.8,464.0 968.7,463.2 969.6,461.6 968.8,461.4 967.3,461.3 965.0,461.2ZM975.4,450.0 974.3,452.2 971.9,450.3 970.9,449.2 967.9,448.6 970.7,447.1 972.5,447.7 974.2,447.9ZM990.0,417.8 993.5,425.4 988.4,423.6 987.6,420.5 986.8,421.3 984.5,421.5 983.6,417.0 984.7,414.4 983.6,411.1 988.7,410.6 990.1,413.0 994.5,410.2ZM991.1,430.3 991.0,431.7 989.8,432.1 989.1,433.3 988.1,432.0 988.2,429.9 987.9,429.2 987.6,423.4 991.6,423.6 993.6,428.4ZM996.0,410.6 995.7,411.4 994.5,415.5 995.4,412.0 996.0,410.2 997.2,405.9 997.2,406.3 996.8,408.0ZM1010.3,409.3 1006.5,411.4 1008.9,419.9 999.5,413.2 999.1,412.7 989.7,410.3 994.4,406.9 1001.9,406.0 1004.1,407.3 1013.9,407.1ZM1003.5,403.5 1000.4,402.5 996.2,401.9 996.1,405.0 993.4,403.5 992.4,401.9 992.1,399.9 991.8,398.9 992.2,395.0 994.3,395.0 997.2,398.3 1000.7,398.0ZM986.2,413.1 986.5,414.3 984.5,414.2 983.7,415.9 980.8,415.0 976.7,412.2 981.1,411.3 981.3,408.7 983.9,410.9 986.3,409.4 989.5,411.5ZM987.4,437.8 987.1,438.1 986.2,440.7 986.7,438.1 987.8,434.8 988.0,434.6 987.9,435.4ZM987.0,431.9 987.3,431.7 987.5,431.4 987.3,432.6 987.6,431.7 988.0,431.0 988.1,430.7 988.3,429.9 988.5,429.0 988.2,429.1 987.9,429.4 987.6,430.2ZM1017.3,470.5 1015.1,470.9 1014.4,468.2 1012.9,468.1 1012.1,463.7 1013.0,461.2 1013.4,458.8 1014.5,461.9 1016.4,461.6 1017.6,463.2ZM1031.1,464.5 1031.0,466.0 1032.3,465.6 1034.8,463.6 1033.6,463.2 1033.5,462.8 1033.5,461.4 1030.1,463.8ZM1007.7,472.6 1004.1,473.3 1004.5,476.1 1001.5,473.5 998.8,475.6 997.9,473.0 997.1,470.7 1001.3,470.8 1002.4,471.0 1004.1,470.7 1006.2,469.6ZM1003.7,476.4 1004.3,476.7 1004.9,477.4 1005.3,475.5 1005.8,474.9 1005.8,473.9 1005.0,475.0ZM1001.8,476.1 1001.8,477.2 1001.1,476.5 1000.2,477.3 999.5,475.8 1000.5,475.4 1000.4,474.7 1001.2,474.4 1001.8,474.9 1001.8,475.5ZM1047.2,466.9 1043.8,475.8 1046.7,471.4 1049.4,466.4 1052.3,464.8 1052.1,461.7 1051.5,461.2 1053.9,454.3 1052.4,456.3 1051.0,456.8 1049.4,462.9ZM1034.9,460.0 1031.6,460.5 1029.7,460.1 1025.4,461.3 1022.7,458.0 1026.6,457.6 1029.6,457.9 1034.7,457.5ZM1056.6,477.0 1059.6,477.0 1060.3,480.0 1064.5,476.5 1062.6,474.8 1060.9,472.9 1057.2,474.0ZM1068.4,473.2 1067.9,474.0 1066.0,473.4 1065.4,474.3 1063.2,473.0 1063.6,472.2 1065.3,470.6 1066.4,471.7 1067.7,471.3ZM1061.5,483.2 1061.1,483.2 1060.7,483.5 1060.8,482.6 1060.3,483.2 1060.7,482.4 1060.7,481.2 1061.2,480.1 1061.3,480.7 1061.7,480.2 1061.2,481.5 1061.6,481.6ZM1060.1,494.3 1058.7,502.0 1055.8,499.7 1053.8,499.9 1052.7,492.1 1048.0,492.5 1052.4,486.7 1053.7,486.6 1054.6,481.2 1056.9,483.7 1056.8,489.6 1062.3,493.2ZM1034.2,485.1 1034.1,487.8 1033.0,487.2 1032.9,485.3 1032.8,483.4 1034.0,482.9 1034.4,483.0 1035.3,483.7ZM1038.7,510.8 1041.3,511.5 1042.3,517.3 1052.7,510.2 1049.8,504.9 1050.3,501.6 1046.1,503.5 1037.5,502.7ZM1040.0,498.9 1039.6,502.1 1034.4,500.9 1031.1,499.9 1031.7,496.0 1036.0,493.9 1040.9,495.6ZM1058.0,499.4 1056.1,500.6 1058.6,500.8 1059.6,501.5 1062.7,501.9 1063.9,500.5 1061.6,499.0 1065.0,494.8 1062.6,495.1 1061.0,497.3 1060.0,497.0 1056.4,497.8ZM1055.5,519.8 1058.1,521.6 1057.8,523.3 1062.0,523.6 1062.1,523.5 1062.4,519.4 1065.9,518.3 1063.0,515.3 1060.7,517.8 1059.9,518.0 1058.1,518.3ZM1051.7,520.1 1052.1,521.6 1053.4,521.4 1053.7,521.2 1054.1,521.4 1055.1,521.0 1055.6,519.1 1055.6,518.1 1054.0,519.5 1053.6,519.6 1052.6,519.1ZM1071.5,445.0 1073.1,445.9 1073.4,446.2 1073.9,449.7 1074.5,446.2 1075.1,444.9 1075.0,444.2 1076.1,443.3 1074.9,443.4 1074.6,443.3 1073.8,443.5 1072.0,444.8ZM1068.2,444.8 1068.0,445.1 1067.5,446.3 1066.8,444.8 1067.0,444.2 1067.5,442.4 1068.4,443.8ZM1078.7,441.6 1078.9,441.6 1079.3,442.3 1079.7,442.1 1080.6,442.3 1081.1,441.6 1081.3,440.7 1080.2,440.9 1080.0,440.7 1079.7,440.1 1079.5,440.4 1079.3,441.1ZM1076.4,495.7 1075.2,499.7 1075.0,499.9 1075.8,496.8 1076.5,493.9 1077.0,492.5 1078.3,488.0 1078.7,486.7 1078.5,488.5 1077.1,493.1ZM1072.5,487.8 1072.7,488.2 1073.0,488.5 1074.0,488.3 1074.4,486.8 1073.2,486.5 1072.6,485.5ZM1080.1,489.7 1081.9,490.0 1082.7,491.9 1083.4,491.7 1083.7,490.0 1083.6,488.8 1083.0,488.7 1082.7,487.2 1080.9,488.8ZM1035.1,406.1 1036.1,410.9 1038.0,410.1 1040.5,411.2 1041.3,405.6 1042.4,403.5 1039.8,403.8 1037.9,405.5ZM1042.2,414.8 1041.3,417.2 1041.5,415.6 1041.2,416.4 1040.9,416.5 1041.3,415.1 1041.5,413.5 1041.9,413.4 1042.3,412.4 1042.7,411.9 1042.1,414.7ZM1032.8,402.6 1032.5,403.4 1032.3,404.0 1032.6,402.7 1032.7,402.1 1033.0,400.8 1033.4,399.8 1033.4,400.3 1033.5,400.5ZM1015.7,490.3 1013.6,496.2 1014.1,501.5 1018.2,489.4 1020.7,480.3 1019.8,478.5 1017.9,481.8ZM1018.0,502.2 1016.8,504.8 1016.6,504.9 1017.2,501.6 1017.8,499.2 1018.3,499.0 1019.0,498.1ZM1012.8,474.0 1013.1,475.8 1014.7,476.2 1016.0,476.0 1017.2,477.6 1017.3,473.3 1017.4,471.9 1017.5,468.9 1016.1,467.0 1015.0,468.0 1013.1,470.9ZM1027.7,495.7 1028.0,501.1 1025.7,498.8 1023.3,499.7 1023.3,495.7 1024.4,495.2 1027.2,491.2 1027.2,493.9ZM1028.6,492.0 1028.0,492.8 1027.2,491.6 1025.6,492.6 1026.6,491.1 1026.9,489.4 1027.4,490.2 1027.9,490.3ZM1078.1,401.7 1077.2,401.8 1075.8,404.7 1075.6,404.0 1074.7,402.3 1075.2,400.5 1076.3,397.3 1077.1,396.9 1077.2,398.3 1077.6,398.2 1077.7,398.9ZM1073.5,393.8 1073.7,394.3 1074.6,394.7 1075.4,394.4 1075.5,393.1 1075.2,390.7 1073.5,393.0ZM921.7,484.3 922.1,487.2 921.8,487.9 920.3,487.0 918.2,486.5 920.2,483.8 920.1,483.5 920.9,479.9 921.0,482.9 922.2,482.7 922.0,483.2ZM916.8,478.8 916.6,480.2 916.6,481.4 918.6,480.4 919.5,479.7 918.8,478.7 920.0,476.8 919.3,476.9 917.9,477.2 917.4,478.5ZM932.5,516.2 931.9,518.7 929.3,519.5 928.0,520.2 925.0,520.1 923.8,514.8 925.0,513.9 928.2,512.9 929.6,513.0 930.1,512.6 931.2,515.0ZM933.1,509.7 932.8,512.1 934.7,511.2 935.9,510.3 936.4,508.6 936.1,506.7 933.8,507.7ZM948.0,516.4 950.1,519.2 951.7,520.2 955.5,520.9 954.6,517.0 955.8,516.8 957.7,514.5 954.6,512.1 952.5,513.8 950.8,514.5ZM948.3,511.5 949.2,512.0 949.6,512.1 950.4,512.0 951.3,512.2 952.0,511.2 952.0,510.3 951.1,510.5 950.8,509.5 950.1,510.6 949.0,510.2ZM947.5,518.4 947.6,518.5 947.7,519.2 948.0,519.6 949.2,518.2 949.3,517.4 949.0,517.4 949.4,516.0 948.6,516.9 948.6,516.4 947.8,517.6ZM977.0,530.1 977.1,531.4 975.2,534.1 970.3,532.6 970.3,532.2 969.5,529.5 968.6,528.5 966.5,526.3 971.2,525.1 973.7,525.2 974.6,525.5 975.4,527.4ZM963.6,531.1 964.2,531.4 964.7,532.2 965.6,531.1 966.0,530.4 964.8,530.4 964.5,530.5ZM972.5,540.1 971.8,542.4 971.3,544.0 972.3,539.8 973.1,536.4 973.6,535.4 973.1,537.6 973.2,538.6ZM977.9,544.7 979.9,546.3 982.3,545.2 986.7,545.8 986.0,543.4 982.8,543.4 980.0,543.4ZM973.8,535.3 973.8,535.2 974.0,534.1 973.6,535.7 973.8,534.9 974.3,533.0 974.7,531.5 974.7,531.5 974.8,531.4 975.0,530.7 974.6,532.5 974.3,533.6ZM1002.7,519.8 1004.0,524.4 997.0,525.4 988.3,525.3 988.8,522.6 988.6,521.1 979.2,520.2 990.0,518.6 990.1,517.6 995.3,516.7 996.0,520.3ZM985.9,515.9 985.5,517.0 984.0,516.4 982.6,516.2 982.9,515.0 982.5,514.4 981.2,513.0 983.0,514.0 983.9,512.6 984.0,514.0 985.7,514.9ZM1002.1,522.5 1003.9,522.9 1003.6,523.9 1007.0,522.5 1008.3,522.1 1009.5,521.3 1010.4,519.7 1007.6,520.7 1004.5,520.4 1004.1,520.9ZM998.7,543.6 998.5,545.6 996.5,545.5 992.6,545.9 991.5,542.3 996.1,542.7 996.6,542.0 998.4,542.7ZM1003.9,547.5 1004.0,548.5 1002.7,549.4 1002.0,548.5 1000.8,548.3 1000.1,547.4 1000.1,546.1 1002.2,546.7 1002.7,545.4 1004.6,546.3ZM995.3,550.5 995.3,550.8 994.9,552.3 995.4,551.2 995.7,550.4 995.9,549.4 996.1,548.7 995.7,549.5 995.6,549.9ZM928.3,548.8 929.8,550.3 929.7,552.0 931.1,550.6 932.6,549.1 932.3,546.3 931.9,542.7 929.0,544.4ZM928.7,555.0 929.2,556.4 928.2,558.1 927.9,555.5 927.1,554.6 927.7,554.3 928.6,551.8 929.3,553.1ZM911.6,547.7 908.5,552.6 912.0,552.7 913.1,549.4 916.4,550.0 916.9,547.9 916.8,542.1 913.2,543.9 912.3,542.9 911.7,546.1ZM911.7,541.3 910.9,541.4 910.7,541.9 910.5,542.1 909.7,541.9 909.2,541.2 909.8,540.7 909.8,540.1 910.9,539.2 911.0,539.4 911.9,540.8ZM908.3,551.9 907.8,552.7 908.3,553.5 908.9,553.1 909.2,551.6 909.1,551.0 909.1,549.7 908.4,551.2ZM1007.2,556.3 1005.7,562.5 1005.9,558.0 1005.9,557.2 1005.4,555.4 1006.2,553.2 1007.3,550.4 1007.2,553.4 1008.6,551.5ZM1002.8,562.7 1003.1,563.3 1003.4,564.6 1004.5,563.6 1004.3,561.3 1003.7,561.0 1003.2,562.0ZM1010.7,552.1 1010.6,552.4 1010.3,554.3 1009.9,553.4 1009.4,553.2 1009.4,552.0 1009.4,551.5 1010.1,551.5 1010.2,549.7 1010.5,551.3 1011.3,550.6 1011.3,551.1ZM1016.1,560.0 1016.2,561.2 1019.3,560.2 1021.6,561.0 1024.0,557.9 1023.1,555.9 1020.0,556.6 1017.6,557.0ZM1019.2,564.3 1018.9,565.4 1018.4,566.0 1017.5,564.8 1017.1,564.1 1017.0,562.9 1018.2,563.9 1019.5,563.4ZM1023.9,554.7 1023.5,556.0 1023.9,554.9 1024.2,553.9 1024.5,553.1 1024.5,553.0 1024.5,552.6ZM928.2,429.2 925.6,427.6 924.5,428.7 923.5,429.1 923.5,426.5 924.3,421.9 925.6,422.7 926.5,422.4ZM928.2,435.1 926.9,437.7 926.2,438.1 926.7,435.8 927.4,432.8 928.2,431.7 928.7,432.3ZM602.6,375.4 612.0,376.4 608.5,382.0 612.2,385.0 619.7,380.3 624.4,379.5 627.6,374.0 625.7,369.8 618.7,371.2 620.0,362.6 610.2,369.9 610.5,374.3ZM626.0,392.5 627.3,398.2 641.2,395.8 648.8,394.9 653.9,392.3 652.6,383.7 641.7,382.2 631.9,384.7ZM655.0,406.5 652.9,414.8 652.6,414.5 651.7,415.4 654.8,405.0 654.6,402.1 657.0,396.1 657.0,397.2 657.9,397.4 655.7,404.0ZM622.1,411.1 623.8,410.2 621.6,416.8 624.5,413.4 626.2,408.6 627.6,404.5 626.8,403.4 626.7,401.7 624.5,407.1ZM601.0,386.1 600.2,388.8 596.8,390.8 597.2,386.5 598.8,378.3 600.7,382.4 602.2,383.0ZM637.1,377.9 645.8,378.5 647.3,379.8 647.6,381.6 650.7,384.6 650.6,378.8 655.7,376.4 653.3,374.3 652.5,372.3 648.3,376.0 642.6,371.6 640.7,374.2ZM624.2,400.5 625.0,406.3 631.0,404.0 633.1,401.7 634.5,401.3 635.6,398.7 635.2,394.0 631.8,395.9 624.5,394.4Z"/>
<path fill="#aad9fb" d="M971.9,125.7 974.1,127.0 976.5,127.8 978.9,128.9 981.4,129.3 983.4,131.2 985.8,132.4 988.3,133.4 990.7,134.4 991.9,136.5 994.3,137.3 995.3,139.6 997.7,140.5 1000.4,140.9 1002.8,142.0 1005.4,142.4 1007.8,142.9 1010.2,143.8 1012.3,145.4 1014.8,145.9 1017.0,147.2 1019.7,146.6 1020.9,149.0 1022.5,151.0 1024.2,152.3 1026.0,153.3 1025.9,156.0 1028.0,158.0 1031.4,159.0 1032.4,162.6 1035.9,162.7 1037.8,165.6 1040.5,165.4 1043.5,167.1 1046.8,166.7 1049.2,166.1 1051.2,163.7 1054.4,167.5 1055.6,164.4 1057.2,165.5 1059.3,167.5 1061.5,168.7 1064.4,167.7 1066.7,168.6 1069.5,167.6 1071.1,171.7 1073.6,171.4 1075.9,172.6 1078.3,172.7 1081.0,172.0 1082.8,163.8 1080.5,162.8 1078.4,161.1 1076.1,160.2 1072.8,164.0 1071.0,160.7 1068.5,160.7 1066.7,157.7 1063.5,160.8 1061.4,158.8 1059.5,156.2 1055.7,159.4 1052.5,158.0 1050.0,158.1 1048.2,161.6 1045.5,160.5 1044.0,159.3 1042.2,160.3 1040.1,158.9 1037.8,158.9 1035.3,158.1 1032.6,157.1 1030.9,155.2 1030.6,153.4 1028.8,151.7 1027.5,149.4 1024.8,148.1 1023.1,146.1 1020.5,145.1 1018.1,143.5 1015.4,143.8 1013.2,142.6 1010.5,142.7 1008.3,141.3 1005.6,141.1 1003.2,140.2 1000.6,140.0 998.4,139.2 996.8,137.9 995.1,136.3 993.0,135.3 991.7,132.9 989.1,131.8 986.4,131.3 984.2,129.7 981.6,128.8 979.4,127.3 976.9,126.7 974.5,126.0 972.2,124.9ZM1041.8,254.6 1043.3,253.0 1045.6,252.3 1047.5,251.0 1049.3,249.7 1051.6,248.0 1052.4,245.3 1053.9,243.2 1055.2,241.2 1054.9,238.9 1055.0,236.7 1057.2,235.4 1058.2,233.3 1059.1,232.6 1060.6,231.1 1063.5,230.3 1066.5,230.0 1069.3,230.3 1072.7,231.1 1072.1,230.8 1070.6,232.0 1073.5,230.2 1074.2,236.2 1076.7,235.8 1079.4,234.4 1084.7,215.0 1082.8,213.4 1079.2,217.9 1078.6,211.5 1075.8,213.0 1069.8,212.0 1064.9,215.7 1064.5,220.7 1060.4,219.0 1059.9,224.4 1057.8,226.6 1053.8,227.3 1051.4,230.0 1052.2,232.8 1052.0,235.3 1050.5,237.2 1049.4,239.6 1048.1,241.6 1048.9,244.3 1049.0,246.3 1047.2,247.1 1045.9,249.0 1044.0,250.2 1042.7,252.2 1040.8,253.4ZM1071.8,209.1 1071.4,211.7 1071.1,214.4 1072.5,217.5 1070.9,221.4 1078.4,218.9 1076.3,216.2 1075.1,213.5 1074.1,211.3 1073.0,208.9ZM579.2,413.3 581.6,412.3 583.5,410.6 586.6,411.1 588.8,410.2 591.0,408.8 592.9,406.8 595.4,405.7 598.8,406.7 601.1,405.5 602.5,402.6 605.3,403.0 607.6,402.4 609.0,400.2 611.0,398.6 613.0,397.0 616.0,397.1 617.1,394.4 619.6,394.3 621.1,393.3 622.5,390.9 624.5,390.1 626.0,387.6 629.6,387.5 630.4,383.7 633.3,382.4 635.3,380.4 637.7,379.0 638.3,375.9 639.5,373.8 640.1,371.4 641.0,369.3 639.9,368.6 638.2,370.3 637.3,372.5 636.1,374.3 634.3,376.2 632.2,377.8 630.2,379.1 627.9,380.2 626.5,383.2 623.8,384.0 621.7,384.4 619.7,385.4 616.9,384.8 615.1,386.8 613.5,389.1 610.1,388.6 609.9,392.5 607.8,393.5 604.8,392.8 604.0,396.0 600.4,394.3 598.9,396.2 597.6,399.2 594.2,398.4 591.8,399.4 591.2,403.4 588.7,404.3 586.6,405.8 583.5,406.1 582.2,408.9 580.6,411.0 578.8,412.7ZM1035.6,160.7 1033.4,163.0 1030.9,165.3 1030.1,167.6 1029.4,169.7 1028.7,171.8 1029.5,172.3 1030.5,170.3 1031.6,168.3 1033.1,166.7 1034.5,163.9 1036.3,161.3ZM1048.4,162.9 1048.2,160.4 1047.7,158.1 1046.9,155.5 1045.3,153.4 1043.2,151.8 1042.7,152.2 1043.7,154.6 1044.8,156.6 1045.6,158.6 1046.7,160.9 1047.6,163.1ZM1060.5,162.1 1061.4,159.9 1061.9,157.5 1062.9,155.0 1062.3,152.3 1061.3,149.9 1060.6,150.1 1060.8,152.6 1060.7,155.0 1060.5,157.1 1060.1,159.5 1059.4,161.8ZM1067.6,165.1 1067.8,167.6 1068.5,169.9 1069.2,172.6 1071.9,174.8 1074.7,176.3 1075.2,175.7 1072.9,173.5 1070.8,171.4 1070.2,169.4 1069.6,167.1 1068.6,164.8ZM1026.2,150.2 1028.6,148.6 1030.6,146.5 1032.2,143.9 1033.2,141.1 1032.7,140.8 1030.9,143.1 1029.4,145.5 1027.3,147.3 1025.6,149.6ZM601.6,399.9 601.4,396.9 601.4,394.3 602.2,392.5 603.3,390.2 602.6,389.7 600.9,391.5 599.3,393.9 599.9,397.1 600.7,400.0ZM617.3,389.8 615.5,387.1 613.8,384.6 612.3,380.9 611.7,381.1 612.0,385.5 614.5,387.9 616.7,390.3ZM624.7,386.3 626.3,389.1 628.4,392.0 631.4,392.2 634.0,392.2 634.1,391.7 631.6,391.0 629.6,390.1 627.5,388.1 625.4,385.7ZM1056.2,230.7 1054.3,229.5 1052.4,228.2 1050.7,227.2 1049.0,225.6 1047.3,223.8 1046.8,224.2 1048.0,226.4 1049.3,228.8 1051.6,229.8 1053.8,230.5 1055.8,231.4ZM1064.5,225.8 1063.6,223.4 1062.7,221.0 1061.8,218.5 1059.4,216.6 1057.2,214.8 1056.8,215.2 1058.6,217.4 1060.3,219.5 1060.9,221.8 1062.4,223.9 1063.5,226.2Z"/>
<g fill="none" stroke="#aad9fb" stroke-width="1.200">
<path d="M887.500,474l4,13 6,8M898,496l4,8 1,11 3,8"/>
</g>
<defs><pattern id="urb" width="8.500" height="8" patternUnits="userSpaceOnUse" patternTransform="rotate(24)">
<rect width="8.500" height="8" fill="#e7e7e6"/><path d="M0,1H8.500M0,5H8.500M1.500,0V8M5.700,0V8" stroke="#fff" stroke-width="1.200"/></pattern>
<pattern id="urb2" width="13" height="17" patternUnits="userSpaceOnUse" patternTransform="rotate(-32)">
<path d="M0,3H13M0,11.500H13M4,0V17M10.500,0V17" stroke="#fff" stroke-width="1.200"/></pattern></defs>
<g id="urban"><path id="urbp" fill="url(#urb)" d="M498,429l8,-2.500 9,3.500 9,4 8,-1 13,3 11,-2 6,6 4,10 2,20 -2,30 -4,30 -2,36h-62z"/>
<use href="#urbp" fill="url(#urb2)"/>
<path id="urbq" opacity=".45" fill="url(#urb)" d="M560,566l2,-36 4,-30 2,-30 20,10 22,36 12,-4 13,6 5,13 -8,13 -12,4 -4,18z"/></g>
<g id="roads" fill="none" stroke-linecap="round" stroke-linejoin="round">
<use href="#rd" stroke="#f7d780" stroke-width="3.100"/>
<use href="#rd" stroke="#fce391" stroke-width="1.900"/>
<path d="M871.400,462.400L860.600,467.800 853.800,477.300 849.800,490.900 844.300,499 845.700,509.800 843,523.400 845.700,531.500 840.300,542.300 838.900,553.200 834.900,562.700M698,520.700L706,518 715.600,514" stroke="#fff" stroke-width="1.400"/>
</g>

<g font-family="Liberation Sans, Arial, sans-serif" text-anchor="middle">
<g stroke="#f1f0ec" stroke-width="2.400" stroke-linejoin="round" paint-order="stroke" style="paint-order:stroke">
<text x="643.7" y="81.5" font-size="11" font-weight="normal" fill="#5e5e5e" textLength="55.6" lengthAdjust="spacingAndGlyphs">Radiolândia</text>
<text x="698.2" y="159.7" font-size="11" font-weight="normal" fill="#5e5e5e" textLength="49.5" lengthAdjust="spacingAndGlyphs">Interlândia</text>
<text x="592" y="176" font-size="11" font-weight="normal" fill="#5e5e5e" textLength="52.3" lengthAdjust="spacingAndGlyphs">Ouro Verde</text>
<text x="592" y="186.5" font-size="11" font-weight="normal" fill="#5e5e5e" textLength="42.0" lengthAdjust="spacingAndGlyphs">de Goiás</text>
<text x="851" y="98.4" font-size="11" font-weight="normal" fill="#5e5e5e" textLength="72.7" lengthAdjust="spacingAndGlyphs">Posse d'Abadia</text>
<text x="912.3" y="166.6" font-size="11" font-weight="normal" fill="#5e5e5e" textLength="47.0" lengthAdjust="spacingAndGlyphs">Abadiânia</text>
<text x="829.2" y="215" font-size="11" font-weight="normal" fill="#5e5e5e" textLength="52.4" lengthAdjust="spacingAndGlyphs">Joanápolis</text>
<text x="510" y="293.4" font-size="11" font-weight="normal" fill="#5e5e5e" textLength="39.4" lengthAdjust="spacingAndGlyphs">Goianás</text>
<text x="572.6" y="308.7" font-size="11" font-weight="normal" fill="#5e5e5e" textLength="45.6" lengthAdjust="spacingAndGlyphs">Nerópolis</text>
<text x="642.5" y="288.3" font-size="11" font-weight="normal" fill="#5e5e5e" textLength="50.2" lengthAdjust="spacingAndGlyphs">Goialândia</text>
<text x="679" y="345.2" font-size="11" font-weight="normal" fill="#5e5e5e" textLength="54.1" lengthAdjust="spacingAndGlyphs">Marinápolis</text>
<text x="517" y="357.2" font-size="11" font-weight="normal" fill="#5e5e5e" textLength="65.9" lengthAdjust="spacingAndGlyphs">Santo Antônio</text>
<text x="517" y="367.4" font-size="11" font-weight="normal" fill="#5e5e5e" textLength="42.0" lengthAdjust="spacingAndGlyphs">de Goiás</text>
<text x="704.7" y="377" font-size="11" font-weight="normal" fill="#5e5e5e" textLength="55.9" lengthAdjust="spacingAndGlyphs">Goianápolis</text>
<text x="786.6" y="306.7" font-size="11" font-weight="normal" fill="#5e5e5e" textLength="62.5" lengthAdjust="spacingAndGlyphs">Muniz Calixto</text>
<text x="744.3" y="453.5" font-size="11" font-weight="normal" fill="#5e5e5e" textLength="59.6" lengthAdjust="spacingAndGlyphs">Bonfinópolis</text>
<text x="887" y="448.8" font-size="11" font-weight="normal" fill="#5e5e5e" textLength="43.5" lengthAdjust="spacingAndGlyphs">Leopoldo</text>
<text x="887" y="458.9" font-size="11" font-weight="normal" fill="#5e5e5e" textLength="52.9" lengthAdjust="spacingAndGlyphs">de Bulhões</text>
<text x="972.3" y="487.3" font-size="11" font-weight="normal" fill="#5e5e5e" textLength="36.7" lengthAdjust="spacingAndGlyphs">Silvânia</text>
<text x="1036" y="538.3" font-size="11" font-weight="normal" fill="#5e5e5e" textLength="50.0" lengthAdjust="spacingAndGlyphs">Vianópolis</text>
<text x="546" y="502.5" font-size="14" font-weight="bold" fill="#444" textLength="49.4" lengthAdjust="spacingAndGlyphs">Goiânia</text>
<text x="658.5" y="516.6" font-size="12.5" font-weight="normal" fill="#5a5a5a" textLength="69.0" lengthAdjust="spacingAndGlyphs">Sen. Canedo</text>
</g>
<g font-size="7.600" font-weight="bold" fill="#555">
<rect x="538.8" y="120.1" width="32.400" height="9.800" fill="#fff" stroke="#4a4a4a" stroke-width=".9"/><text x="555" y="127.8">GO-330</text>
<rect x="493.8" y="153.4" width="32.400" height="9.800" fill="#fff" stroke="#4a4a4a" stroke-width=".9"/><text x="510" y="161.1">GO-080</text>
<rect x="487.8" y="188.1" width="32.400" height="9.800" fill="#fff" stroke="#4a4a4a" stroke-width=".9"/><text x="504" y="195.8">GO-416</text>
<rect x="610.6" y="153.6" width="32.400" height="9.800" fill="#fff" stroke="#4a4a4a" stroke-width=".9"/><text x="626.8" y="161.3">GO-433</text>
<rect x="620.2" y="207.1" width="32.400" height="9.800" fill="#fff" stroke="#4a4a4a" stroke-width=".9"/><text x="636.4" y="214.8">GO-330</text>
<rect x="539.5" y="223.9" width="32.400" height="9.800" fill="#fff" stroke="#4a4a4a" stroke-width=".9"/><text x="555.7" y="231.6">GO-451</text>
<rect x="602.6" y="235.9" width="32.400" height="9.800" fill="#fff" stroke="#4a4a4a" stroke-width=".9"/><text x="618.8" y="243.6">GO-451</text>
<rect x="664.8" y="239.6" width="32.400" height="9.800" fill="#fff" stroke="#4a4a4a" stroke-width=".9"/><text x="681" y="247.3">GO-330</text>
<rect x="543.8" y="268.3" width="32.400" height="9.800" fill="#fff" stroke="#4a4a4a" stroke-width=".9"/><text x="560" y="276.0">GO-080</text>
<rect x="516.8" y="327.5" width="32.400" height="9.800" fill="#fff" stroke="#4a4a4a" stroke-width=".9"/><text x="533" y="335.2">GO-546</text>
<rect x="608.3" y="334.4" width="32.400" height="9.800" fill="#fff" stroke="#4a4a4a" stroke-width=".9"/><text x="624.5" y="342.1">GO-466</text>
<rect x="560.8" y="368.9" width="32.400" height="9.800" fill="#fff" stroke="#4a4a4a" stroke-width=".9"/><text x="577" y="376.6">GO-080</text>
<rect x="528.8" y="393.5" width="32.400" height="9.800" fill="#fff" stroke="#4a4a4a" stroke-width=".9"/><text x="545" y="401.2">GO-462</text>
<rect x="542.8" y="424.6" width="32.400" height="9.800" fill="#fff" stroke="#4a4a4a" stroke-width=".9"/><text x="559" y="432.3">GO-080</text>
<rect x="601.3" y="492.1" width="32.400" height="9.800" fill="#fff" stroke="#4a4a4a" stroke-width=".9"/><text x="617.5" y="499.8">GO-403</text>
<rect x="667.8" y="405.9" width="32.400" height="9.800" fill="#fff" stroke="#4a4a4a" stroke-width=".9"/><text x="684" y="413.6">GO-415</text>
<rect x="854.8" y="286.7" width="32.400" height="9.800" fill="#fff" stroke="#4a4a4a" stroke-width=".9"/><text x="871" y="294.4">GO-437</text>
<rect x="812.7" y="370.1" width="32.400" height="9.800" fill="#fff" stroke="#4a4a4a" stroke-width=".9"/><text x="828.9" y="377.8">GO-330</text>
<rect x="963.4" y="170.8" width="32.400" height="9.800" fill="#fff" stroke="#4a4a4a" stroke-width=".9"/><text x="979.6" y="178.5">GO-474</text>
<rect x="941.8" y="424.4" width="32.400" height="9.800" fill="#fff" stroke="#4a4a4a" stroke-width=".9"/><text x="958" y="432.1">GO-437</text>
<rect x="469.3" y="314.4" width="32.400" height="9.800" fill="#fff" stroke="#4a4a4a" stroke-width=".9"/><text x="485.5" y="322.1">GO-070</text>
<rect x="470.8" y="450.1" width="32.400" height="9.800" fill="#fff" stroke="#4a4a4a" stroke-width=".9"/><text x="487" y="457.8">GO-060</text>
<rect x="1070.8" y="240.4" width="32.400" height="9.800" fill="#fff" stroke="#4a4a4a" stroke-width=".9"/><text x="1087" y="248.1">GO-437</text>
<rect x="1065.8" y="341.3" width="32.400" height="9.800" fill="#fff" stroke="#4a4a4a" stroke-width=".9"/><text x="1082" y="349.0">GO-139</text>
<path d="M591.4,418.0h16q1.200,0 1.200,1.200l-1,7.800q-.2,1.200 -1.400,1.600l-6.800,2.400l-6.800,-2.400q-1.200,-.4 -1.400,-1.600l-1,-7.800q0,-1.200 1.200,-1.200z" fill="#fff" stroke="#4a4a4a" stroke-width=".9"/><text x="599.4" y="426.6">153</text>
<path d="M629.0,539.3h16q1.200,0 1.200,1.200l-1,7.800q-.2,1.200 -1.400,1.600l-6.800,2.400l-6.800,-2.400q-1.200,-.4 -1.400,-1.600l-1,-7.800q0,-1.200 1.200,-1.200z" fill="#fff" stroke="#4a4a4a" stroke-width=".9"/><text x="637" y="547.9">352</text>
<path d="M781.5,102.5h16q1.200,0 1.200,1.200l-1,7.800q-.2,1.200 -1.400,1.600l-6.800,2.400l-6.800,-2.400q-1.200,-.4 -1.400,-1.600l-1,-7.800q0,-1.200 1.200,-1.200z" fill="#fff" stroke="#4a4a4a" stroke-width=".9"/><text x="789.5" y="111.1">414</text>
<path d="M802.6,238.5h16q1.200,0 1.200,1.200l-1,7.800q-.2,1.200 -1.400,1.600l-6.800,2.400l-6.800,-2.400q-1.200,-.4 -1.400,-1.600l-1,-7.800q0,-1.200 1.200,-1.200z" fill="#fff" stroke="#4a4a4a" stroke-width=".9"/><text x="810.6" y="247.1">060</text>
<path d="M1021.0,95.0h16q1.200,0 1.200,1.200l-1,7.800q-.2,1.200 -1.400,1.600l-6.800,2.400l-6.800,-2.400q-1.200,-.4 -1.400,-1.600l-1,-7.800q0,-1.200 1.200,-1.200z" fill="#fff" stroke="#4a4a4a" stroke-width=".9"/><text x="1029" y="103.6">060</text>
<path d="M933.6,493.3h16q1.200,0 1.200,1.200l-1,7.800q-.2,1.200 -1.400,1.600l-6.800,2.400l-6.800,-2.400q-1.200,-.4 -1.400,-1.600l-1,-7.800q0,-1.200 1.200,-1.200z" fill="#fff" stroke="#4a4a4a" stroke-width=".9"/><text x="941.6" y="501.9">457</text>
</g>
<g font-size="11" fill="#666" text-anchor="end" letter-spacing="-.2"><text x="506.500" y="98.400">Petrol</text><text x="507.500" y="109">de Go</text></g>
</g>
<g id="pins">
<use href="#pin" x="1041" y="100" fill="#b5137c"/>
<use href="#pin" x="1052.5" y="100" fill="#b5137c"/>
<use href="#pin" x="986.7" y="115.9" fill="#b5137c"/>
<use href="#pin" x="900.3" y="156.5" fill="#000000"/>
<use href="#pin" x="911.6" y="163.3" fill="#b5137c"/>
<use href="#pin" x="912.6" y="164.6" fill="#b5137c"/>
<use href="#pin" x="657.8" y="226.8" fill="#a39a78"/>
<use href="#pin" x="658.8" y="228.2" fill="#a39a78"/>
<use href="#pin" x="659.6" y="229.8" fill="#a39a78"/>
<use href="#pin" x="660.3" y="231.5" fill="#a39a78"/>
<use href="#pin" x="929.4" y="299.8" fill="#9c2c0e"/>
<use href="#pin" x="950.8" y="360.2" fill="#9c2c0e"/>
<use href="#pin" x="951.3" y="361" fill="#9c2c0e"/>
<use href="#pin" x="704.5" y="372" fill="#9c2c0e"/>
<use href="#pin" x="706" y="374.8" fill="#9c2c0e"/>
<use href="#pin" x="705.5" y="377.5" fill="#9c2c0e"/>
<use href="#pin" x="717" y="515.2" fill="#6b4f93"/>
<use href="#pin" x="736.3" y="240.4" fill="#000000"/>
<use href="#pin" x="789.0" y="263.9" fill="#5c1f55"/>
<use href="#pin" x="785.3" y="268.8" fill="#5c1f55"/>
<use href="#pin" x="781.6" y="273.8" fill="#5c1f55"/>
<use href="#pin" x="747.0" y="296.0" fill="#5c1f55"/>
<use href="#pin" x="728.4" y="297.3" fill="#5c1f55"/>
<use href="#pin" x="755.6" y="304.7" fill="#5c1f55"/>
<use href="#pin" x="782.8" y="305.9" fill="#5c1f55"/>
<use href="#pin" x="786.5" y="308.4" fill="#5c1f55"/>
<use href="#pin" x="760.6" y="203.3" fill="#003f7f"/>
<use href="#pin" x="770.5" y="220.6" fill="#003f7f"/>
<use href="#pin" x="774.2" y="224.3" fill="#003f7f"/>
<use href="#pin" x="779.1" y="301.0" fill="#003f7f"/>
<use href="#pin" x="765.5" y="218.2" fill="#3fe0d0"/>
<use href="#pin" x="729.7" y="246.6" fill="#3fe0d0"/>
<use href="#pin" x="709.9" y="251.5" fill="#3fe0d0"/>
<use href="#pin" x="719.8" y="251.5" fill="#3fe0d0"/>
<use href="#pin" x="768.0" y="263.9" fill="#3fe0d0"/>
<use href="#pin" x="747.0" y="291.1" fill="#3fe0d0"/>
<use href="#pin" x="717.3" y="204.6" fill="#a39a78"/>
<use href="#pin" x="729.7" y="207.0" fill="#a39a78"/>
<use href="#pin" x="753.2" y="207.0" fill="#a39a78"/>
<use href="#pin" x="739.6" y="214.4" fill="#a39a78"/>
<use href="#pin" x="724.7" y="218.2" fill="#a39a78"/>
<use href="#pin" x="759.3" y="221.9" fill="#a39a78"/>
<use href="#pin" x="734.6" y="223.1" fill="#a39a78"/>
<use href="#pin" x="739.6" y="226.8" fill="#a39a78"/>
<use href="#pin" x="723.5" y="228.0" fill="#a39a78"/>
<use href="#pin" x="749.4" y="229.3" fill="#a39a78"/>
<use href="#pin" x="732.1" y="236.7" fill="#a39a78"/>
<use href="#pin" x="779.1" y="242.9" fill="#a39a78"/>
<use href="#pin" x="747.0" y="246.6" fill="#a39a78"/>
<use href="#pin" x="744.5" y="263.9" fill="#a39a78"/>
<use href="#pin" x="774.2" y="266.4" fill="#a39a78"/>
<use href="#pin" x="779.1" y="214.4" fill="#9c2c0e"/>
<use href="#pin" x="792.7" y="226.8" fill="#9c2c0e"/>
<use href="#pin" x="786.5" y="231.7" fill="#9c2c0e"/>
<use href="#pin" x="795.2" y="236.7" fill="#9c2c0e"/>
<use href="#pin" x="791.5" y="246.6" fill="#9c2c0e"/>
<use href="#pin" x="760.6" y="250.3" fill="#9c2c0e"/>
<use href="#pin" x="784.1" y="254.0" fill="#9c2c0e"/>
<use href="#pin" x="775.4" y="258.9" fill="#9c2c0e"/>
<use href="#pin" x="733.4" y="270.1" fill="#6fcf1a"/>
<use href="#pin" x="755.6" y="273.8" fill="#6fcf1a"/>
<use href="#pin" x="763.0" y="275.0" fill="#6fcf1a"/>
<use href="#pin" x="727.2" y="281.2" fill="#6fcf1a"/>
<use href="#pin" x="730.9" y="289.8" fill="#6fcf1a"/>
<use href="#pin" x="732.1" y="312.1" fill="#6fcf1a"/>
<use href="#pin" x="572.6" y="454.8" fill="#b5205f"/>
<use href="#pin" x="597.5" y="464.7" fill="#b5205f"/>
<use href="#pin" x="593.4" y="465.1" fill="#b5205f"/>
<use href="#pin" x="599.5" y="466.0" fill="#b5205f"/>
<use href="#pin" x="604.3" y="467.5" fill="#b5205f"/>
<use href="#pin" x="605.0" y="468.5" fill="#b5205f"/>
<use href="#pin" x="607.9" y="469.2" fill="#b5205f"/>
<use href="#pin" x="580.1" y="469.7" fill="#b5205f"/>
<use href="#pin" x="569.4" y="471.6" fill="#b5205f"/>
<use href="#pin" x="551.5" y="473.4" fill="#b5205f"/>
<use href="#pin" x="582.6" y="475.2" fill="#b5205f"/>
<use href="#pin" x="562.1" y="476.4" fill="#b5205f"/>
<use href="#pin" x="572.6" y="477.2" fill="#b5205f"/>
<use href="#pin" x="577.8" y="480.0" fill="#b5205f"/>
<use href="#pin" x="589.8" y="481.2" fill="#b5205f"/>
<use href="#pin" x="567.7" y="482.1" fill="#b5205f"/>
<use href="#pin" x="565.8" y="482.4" fill="#b5205f"/>
<use href="#pin" x="563.9" y="484.6" fill="#b5205f"/>
<use href="#pin" x="585.1" y="484.6" fill="#b5205f"/>
<use href="#pin" x="571.8" y="484.8" fill="#b5205f"/>
<use href="#pin" x="568.2" y="487.2" fill="#b5205f"/>
<use href="#pin" x="580.2" y="487.2" fill="#b5205f"/>
<use href="#pin" x="587.4" y="487.2" fill="#b5205f"/>
<use href="#pin" x="574.2" y="489.6" fill="#b5205f"/>
<use href="#pin" x="575.1" y="489.6" fill="#b5205f"/>
<use href="#pin" x="570.1" y="492.1" fill="#b5205f"/>
<use href="#pin" x="585.0" y="494.5" fill="#b5205f"/>
<use href="#pin" x="576.6" y="495.7" fill="#b5205f"/>
<use href="#pin" x="580.1" y="495.8" fill="#b5205f"/>
<use href="#pin" x="581.4" y="496.9" fill="#b5205f"/>
<use href="#pin" x="544.0" y="497.1" fill="#b5205f"/>
<use href="#pin" x="490.6" y="550" fill="#b5205f"/>
<use href="#pin" x="541.5" y="572.9" fill="#b5205f"/>
<use href="#pin" x="607.5" y="469.7" fill="#000000"/>
<use href="#pin" x="596.3" y="470.9" fill="#000000"/>
<use href="#pin" x="602.5" y="472.2" fill="#000000"/>
<use href="#pin" x="632.3" y="472.2" fill="#000000"/>
<use href="#pin" x="636.1" y="473.4" fill="#000000"/>
<use href="#pin" x="627.4" y="475.9" fill="#000000"/>
<use href="#pin" x="652.2" y="559.3" fill="#b2fb6b"/>
<use href="#pin" x="647.3" y="449.3" fill="#6b4f93"/>
<use href="#pin" x="536.6" y="457.3" fill="#6b4f93"/>
<use href="#pin" x="624.9" y="469.7" fill="#6b4f93"/>
<use href="#pin" x="617.4" y="473.4" fill="#6b4f93"/>
<use href="#pin" x="609.9" y="478.4" fill="#6b4f93"/>
<use href="#pin" x="600.0" y="480.9" fill="#6b4f93"/>
<use href="#pin" x="639.8" y="484.6" fill="#6b4f93"/>
<use href="#pin" x="649.7" y="487.1" fill="#6b4f93"/>
<use href="#pin" x="644.8" y="492.1" fill="#6b4f93"/>
<use href="#pin" x="660.9" y="494.6" fill="#6b4f93"/>
<use href="#pin" x="597.5" y="500.8" fill="#6b4f93"/>
<use href="#pin" x="657.2" y="502.0" fill="#6b4f93"/>
<use href="#pin" x="637.3" y="503.3" fill="#6b4f93"/>
<use href="#pin" x="651.0" y="508.3" fill="#6b4f93"/>
<use href="#pin" x="669.6" y="509.5" fill="#6b4f93"/>
<use href="#pin" x="672.1" y="514.5" fill="#6b4f93"/>
<use href="#pin" x="667.2" y="521.9" fill="#6b4f93"/>
<use href="#pin" x="663.4" y="526.9" fill="#6b4f93"/>
<use href="#pin" x="660.9" y="530.6" fill="#6b4f93"/>
<use href="#pin" x="641.0" y="548.1" fill="#6b4f93"/>
<use href="#pin" x="616.2" y="569.2" fill="#6b4f93"/>
<use href="#pin" x="527.9" y="588.6" fill="#6b4f93"/>
<use href="#pin" x="549.0" y="503.3" fill="#3fe0d0"/>
<use href="#pin" x="556.5" y="590.3" fill="#3fe0d0"/>
<use href="#pin" x="560.2" y="508.3" fill="#b2fb6b"/>
<use href="#pin" x="572.6" y="524.4" fill="#b2fb6b"/>
<use href="#pin" x="555.2" y="526.9" fill="#b2fb6b"/>
<use href="#pin" x="577.6" y="526.9" fill="#b2fb6b"/>
<use href="#pin" x="587.6" y="526.9" fill="#b2fb6b"/>
<use href="#pin" x="565.2" y="529.4" fill="#b2fb6b"/>
<use href="#pin" x="595.0" y="530.6" fill="#b2fb6b"/>
<use href="#pin" x="557.7" y="534.4" fill="#b2fb6b"/>
<use href="#pin" x="590.0" y="536.9" fill="#b2fb6b"/>
<use href="#pin" x="566.4" y="539.4" fill="#b2fb6b"/>
<use href="#pin" x="586.3" y="539.4" fill="#b2fb6b"/>
<use href="#pin" x="580.1" y="541.8" fill="#b2fb6b"/>
<use href="#pin" x="560.2" y="543.1" fill="#b2fb6b"/>
<use href="#pin" x="573.9" y="543.1" fill="#b2fb6b"/>
<use href="#pin" x="583.8" y="543.1" fill="#b2fb6b"/>
<use href="#pin" x="570.1" y="546.8" fill="#b2fb6b"/>
<use href="#pin" x="556.5" y="525.7" fill="#9c2c0e"/>
<text x="900.3" y="143.5" font-size="11" font-weight="bold" fill="#fff" text-anchor="middle" font-family="Liberation Sans, sans-serif">*</text>

</g>
</svg>
<div id="zoomctl"><div class="zp"></div><div class="zp2"></div><div class="zd"></div><div class="zm"></div></div>
<div id="draw">
<svg width="87" height="20" viewBox="0 0 87 20" style="position:absolute;left:0;top:0">
<rect x="0" y="0" width="87" height="20" fill="#fff"/>
<path d="M21.300,0V20M43,0V20M64.500,0V20" stroke="#e8e8e8" stroke-width="1"/>
<g transform="translate(4.300,2.300) scale(.96)" fill="#fff" stroke="#1a1a1a" stroke-width="1.100" stroke-linejoin="round" stroke-linecap="round">
<path d="M5.200,15.500C4.300,13.200 2.600,11.300 1.500,9.800C.9,8.900 2.100,7.900 3,8.700L4.600,10.300V3.900C4.600,2.700 6.300,2.700 6.400,3.900V2.600C6.500,1.400 8.300,1.400 8.400,2.600V3.200C8.500,2 10.300,2 10.400,3.300V4.600C10.500,3.500 12.200,3.600 12.200,4.800V10.500C12.200,12.800 11.600,13.700 11.200,15.500Z"/>
<path d="M6.400,4V8M8.400,3.500V8M10.400,4.600V8.300" fill="none" stroke-width=".9"/>
</g>
<path d="M25.800,4.200L32.600,9.200L37.600,6.400L37.200,13.600L28.400,15.600Z" fill="#b9b9b9" stroke="#9a9a9a" stroke-width=".9" stroke-linejoin="round"/>
<circle cx="53.600" cy="10.400" r="5.200" fill="#b9b9b9" stroke="#9a9a9a" stroke-width=".9"/>
<rect x="70.500" y="4.600" width="10.200" height="10.200" fill="#b9b9b9" stroke="#9a9a9a" stroke-width=".9"/>
</svg>

</div>
</div>
</div>
</div>
<div id="bwhite"></div><div id="bline"></div><div id="bline2"></div>
</body></html>
